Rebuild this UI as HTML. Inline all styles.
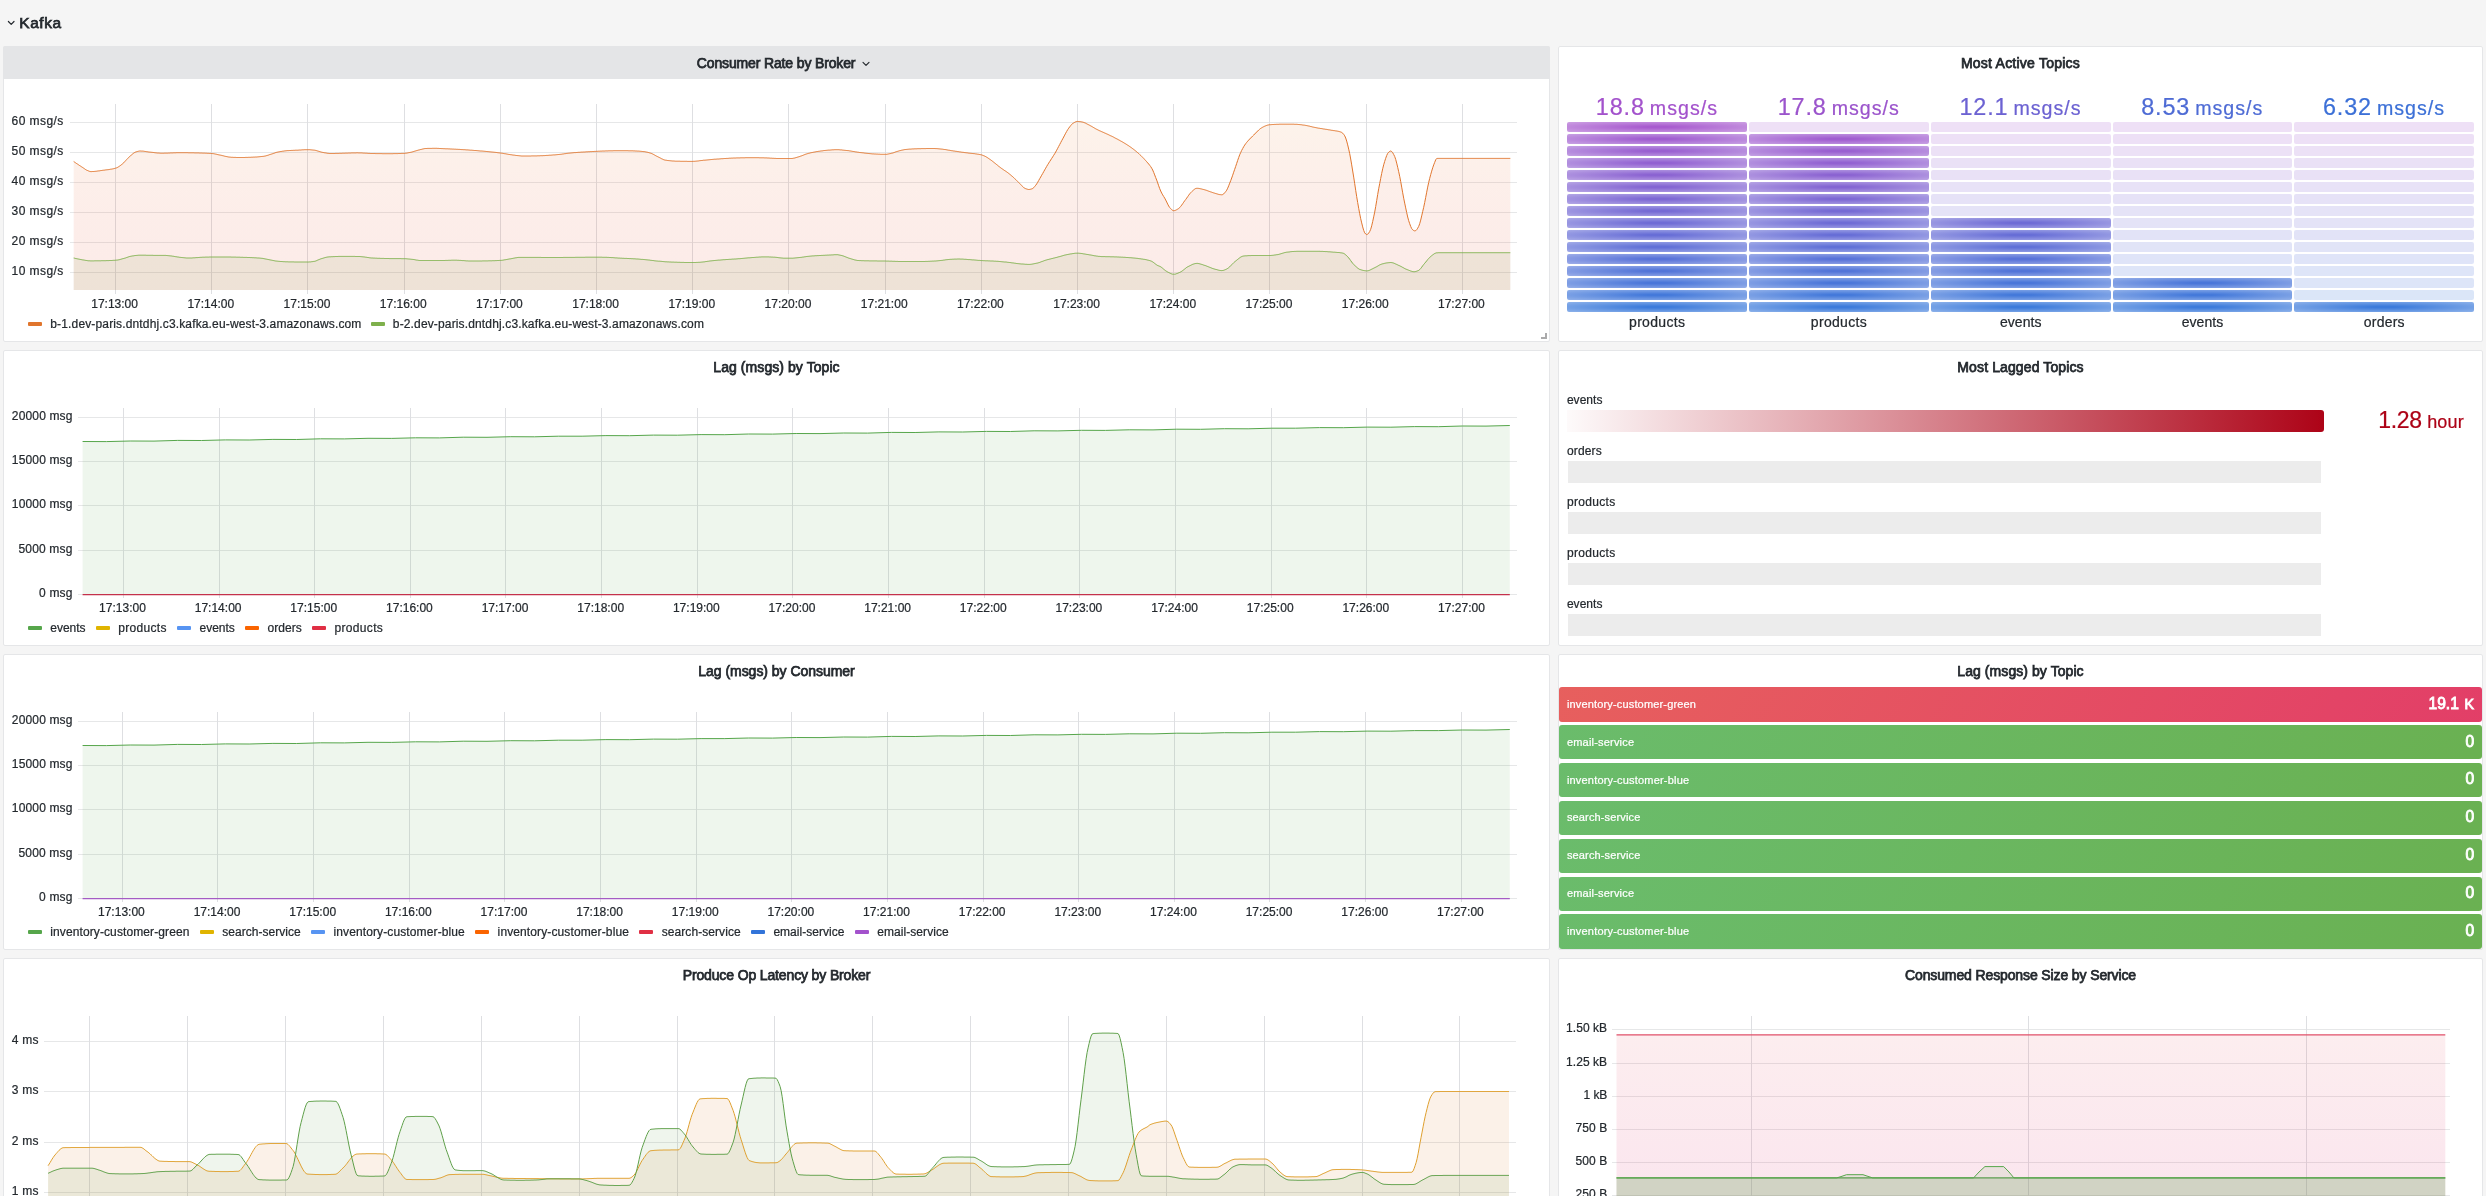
<!DOCTYPE html>
<html lang="en"><head><meta charset="utf-8"><title>Kafka - Grafana</title>
<style>
html,body{margin:0;padding:0}
body{width:2486px;height:1196px;overflow:hidden;position:relative;background:#f5f5f5;font-family:"Liberation Sans", sans-serif;color:#24292e}
#root{position:absolute;left:0;top:0;width:2486px;height:1196px;will-change:transform}
.panel{position:absolute;box-sizing:border-box;background:#fff;border:1px solid #e5e6e8;border-radius:2px}
.hdr-hover{position:absolute;background:#e4e5e7;border-radius:2px 2px 0 0}
.tx{position:absolute;white-space:nowrap;-webkit-text-stroke:0.22px}
.ttl{position:absolute;white-space:nowrap;margin:0;font-weight:400;-webkit-text-stroke:0.75px #24292e}
.cv{position:absolute;overflow:hidden}
.grid line{stroke:#e6e7e8;stroke-width:1;shape-rendering:crispEdges}
.grid.v line{stroke:#dedfe2}
.lg{position:absolute;white-space:nowrap;font-size:12px;line-height:12px;-webkit-text-stroke:0.22px}
.lg i{display:inline-block;width:14px;height:4px;border-radius:1px;vertical-align:middle;margin:0 8.3px 2px 0}
.lg b{font-weight:400;display:inline-block;margin-right:10.4px}
.cell{position:absolute;border-radius:2px}
.bar{position:absolute}
.stat{position:absolute;left:1559px;width:923px;border-radius:3px}
</style></head><body>
<div id="root">

<header aria-label="row">
<svg class="cv" style="left:6px;top:18px" width="10" height="10" viewBox="0 0 10 10"><path d="M2.4 3.5 L5.2 6.3 L8 3.5" fill="none" stroke="#24292e" stroke-width="1.2" stroke-linecap="round" stroke-linejoin="round"/></svg>
<h1 class="ttl" style="left:19.30px;top:15px;font-size:15.4px;line-height:15.4px;"><span style="letter-spacing:0.608px;">Kafka</span></h1>
</header>
<section aria-label="Consumer Rate by Broker">
<div class="panel" style="left:3px;top:46px;width:1547px;height:296px"></div>
<div class="hdr-hover" style="left:3px;top:46px;width:1547px;height:32.5px"></div>
<h2 class="ttl" style="left:696.80px;top:56px;font-size:14px;line-height:14px;"><span style="letter-spacing:-0.141px;">Consumer Rate by Broker</span></h2>
<svg class="cv" style="left:861px;top:59px" width="10" height="10" viewBox="0 0 10 10"><path d="M2 3.4 L5 6.4 L8 3.4" fill="none" stroke="#24292e" stroke-width="1.15" stroke-linecap="round" stroke-linejoin="round"/></svg>
<svg class="cv" style="left:4px;top:79px" width="1545" height="262" viewBox="4 79 1545 262">
<g class="grid"><line x1="70" x2="1517" y1="122.5" y2="122.5"/><line x1="70" x2="1517" y1="152.5" y2="152.5"/><line x1="70" x2="1517" y1="182.5" y2="182.5"/><line x1="70" x2="1517" y1="212.5" y2="212.5"/><line x1="70" x2="1517" y1="242.5" y2="242.5"/><line x1="70" x2="1517" y1="272.5" y2="272.5"/></g>
<g class="grid v"><line y1="104" y2="294" x1="115.5" x2="115.5"/><line y1="104" y2="294" x1="211.5" x2="211.5"/><line y1="104" y2="294" x1="307.5" x2="307.5"/><line y1="104" y2="294" x1="404.5" x2="404.5"/><line y1="104" y2="294" x1="500.5" x2="500.5"/><line y1="104" y2="294" x1="596.5" x2="596.5"/><line y1="104" y2="294" x1="692.5" x2="692.5"/><line y1="104" y2="294" x1="788.5" x2="788.5"/><line y1="104" y2="294" x1="885.5" x2="885.5"/><line y1="104" y2="294" x1="981.5" x2="981.5"/><line y1="104" y2="294" x1="1077.5" x2="1077.5"/><line y1="104" y2="294" x1="1173.5" x2="1173.5"/><line y1="104" y2="294" x1="1269.5" x2="1269.5"/><line y1="104" y2="294" x1="1366.5" x2="1366.5"/><line y1="104" y2="294" x1="1462.5" x2="1462.5"/></g>
<defs><linearGradient id="ofill" gradientUnits="userSpaceOnUse" x1="0" y1="122" x2="0" y2="290"><stop offset="0" stop-color="#eb8737"/><stop offset="0.55" stop-color="#e6502a"/><stop offset="1" stop-color="#e13c23"/></linearGradient></defs>
<path d="M73.7 161.5L74.7 162.2L75.7 162.9L76.7 163.6L77.7 164.2L78.7 164.9L79.7 165.6L80.7 166.2L81.7 166.9L82.7 167.5L83.7 168.2L84.7 168.9L85.7 169.6L86.7 170.2L87.7 170.6L88.7 171L89.7 171.4L90.7 171.6L91.7 171.6L92.7 171.5L93.7 171.5L94.7 171.4L95.7 171.3L96.7 171.2L97.7 171L98.7 170.9L99.7 170.8L100.7 170.6L101.7 170.5L102.7 170.3L103.7 170.2L104.7 170.1L105.7 169.9L106.7 169.8L107.7 169.7L108.7 169.6L109.7 169.4L110.7 169.2L111.7 169.1L112.7 168.9L113.7 168.7L114.7 168.4L115.7 168.1L116.7 167.8L117.7 167.3L118.7 166.7L119.7 166L120.7 165.3L121.7 164.5L122.7 163.7L123.7 162.8L124.7 161.7L125.7 160.6L126.7 159.5L127.7 158.5L128.7 157.4L129.7 156.5L130.7 155.6L131.7 154.8L132.7 153.9L133.7 153.1L134.7 152.5L135.7 152L136.7 151.7L137.7 151.4L138.7 151.2L139.7 151L140.7 151L141.7 151.1L142.7 151.1L143.7 151.2L144.7 151.4L145.7 151.5L146.7 151.7L147.7 151.8L148.7 152L149.7 152.1L150.7 152.2L151.7 152.3L152.7 152.4L153.7 152.5L154.7 152.7L155.7 152.8L156.7 152.9L157.7 153L158.7 153L159.7 153.1L160.7 153.2L161.7 153.2L162.7 153.2L163.7 153.2L164.7 153.1L165.7 153.1L166.7 153.1L167.7 153.1L168.7 153L169.7 153L170.7 152.9L171.7 152.9L172.7 152.9L173.7 152.8L174.7 152.8L175.7 152.8L176.7 152.7L177.7 152.7L178.7 152.7L179.7 152.7L180.7 152.7L181.7 152.7L182.7 152.7L183.7 152.7L184.7 152.7L185.7 152.7L186.7 152.7L187.7 152.7L188.7 152.8L189.7 152.8L190.7 152.8L191.7 152.8L192.7 152.8L193.7 152.8L194.7 152.9L195.7 152.9L196.7 152.9L197.7 152.9L198.7 152.9L199.7 153L200.7 153L201.7 153L202.7 153.1L203.7 153.1L204.7 153.1L205.7 153.2L206.7 153.2L207.7 153.3L208.7 153.3L209.7 153.4L210.7 153.4L211.7 153.5L212.7 153.6L213.7 153.7L214.7 153.9L215.7 154.1L216.7 154.3L217.7 154.6L218.7 154.8L219.7 155L220.7 155.2L221.7 155.4L222.7 155.7L223.7 155.9L224.7 156.2L225.7 156.4L226.7 156.6L227.7 156.8L228.7 157L229.7 157.1L230.7 157.2L231.7 157.3L232.7 157.3L233.7 157.4L234.7 157.4L235.7 157.4L236.7 157.5L237.7 157.5L238.7 157.5L239.7 157.5L240.7 157.5L241.7 157.5L242.7 157.5L243.7 157.5L244.7 157.5L245.7 157.4L246.7 157.4L247.7 157.4L248.7 157.3L249.7 157.3L250.7 157.3L251.7 157.2L252.7 157.2L253.7 157.1L254.7 157.1L255.7 157L256.7 157L257.7 156.9L258.7 156.8L259.7 156.7L260.7 156.6L261.7 156.5L262.7 156.4L263.7 156.3L264.7 156.1L265.7 155.9L266.7 155.6L267.7 155.3L268.7 155L269.7 154.6L270.7 154.3L271.7 154L272.7 153.7L273.7 153.3L274.7 153L275.7 152.6L276.7 152.3L277.7 152.1L278.7 151.9L279.7 151.7L280.7 151.5L281.7 151.4L282.7 151.2L283.7 151.1L284.7 150.9L285.7 150.8L286.7 150.7L287.7 150.6L288.7 150.6L289.7 150.5L290.7 150.5L291.7 150.4L292.7 150.4L293.7 150.3L294.7 150.3L295.7 150.2L296.7 150.2L297.7 150.2L298.7 150.1L299.7 150L300.7 150L301.7 149.9L302.7 149.8L303.7 149.8L304.7 149.7L305.7 149.7L306.7 149.7L307.7 149.7L308.7 149.7L309.7 149.7L310.7 149.8L311.7 149.9L312.7 150L313.7 150.1L314.7 150.2L315.7 150.4L316.7 150.7L317.7 151L318.7 151.3L319.7 151.6L320.7 151.9L321.7 152.2L322.7 152.4L323.7 152.6L324.7 152.8L325.7 152.9L326.7 153.1L327.7 153.3L328.7 153.4L329.7 153.5L330.7 153.5L331.7 153.5L332.7 153.5L333.7 153.5L334.7 153.5L335.7 153.4L336.7 153.4L337.7 153.4L338.7 153.4L339.7 153.3L340.7 153.3L341.7 153.3L342.7 153.2L343.7 153.2L344.7 153.2L345.7 153.1L346.7 153.1L347.7 153.1L348.7 153L349.7 153L350.7 153L351.7 152.9L352.7 152.9L353.7 152.9L354.7 152.9L355.7 152.9L356.7 152.8L357.7 152.8L358.7 152.9L359.7 152.9L360.7 152.9L361.7 152.9L362.7 153L363.7 153.1L364.7 153.1L365.7 153.2L366.7 153.2L367.7 153.3L368.7 153.4L369.7 153.4L370.7 153.5L371.7 153.5L372.7 153.5L373.7 153.5L374.7 153.5L375.7 153.6L376.7 153.6L377.7 153.6L378.7 153.6L379.7 153.6L380.7 153.6L381.7 153.6L382.7 153.7L383.7 153.7L384.7 153.7L385.7 153.7L386.7 153.7L387.7 153.7L388.7 153.7L389.7 153.7L390.7 153.7L391.7 153.7L392.7 153.7L393.7 153.6L394.7 153.6L395.7 153.6L396.7 153.6L397.7 153.6L398.7 153.5L399.7 153.5L400.7 153.5L401.7 153.4L402.7 153.4L403.7 153.4L404.7 153.3L405.7 153.2L406.7 153.1L407.7 152.9L408.7 152.7L409.7 152.5L410.7 152.3L411.7 152.1L412.7 151.8L413.7 151.5L414.7 151.2L415.7 150.9L416.7 150.6L417.7 150.3L418.7 150L419.7 149.8L420.7 149.5L421.7 149.3L422.7 149L423.7 148.8L424.7 148.6L425.7 148.5L426.7 148.5L427.7 148.4L428.7 148.4L429.7 148.4L430.7 148.4L431.7 148.4L432.7 148.3L433.7 148.3L434.7 148.3L435.7 148.3L436.7 148.3L437.7 148.4L438.7 148.4L439.7 148.5L440.7 148.5L441.7 148.6L442.7 148.6L443.7 148.7L444.7 148.7L445.7 148.8L446.7 148.8L447.7 148.8L448.7 148.9L449.7 148.9L450.7 149L451.7 149L452.7 149.1L453.7 149.1L454.7 149.2L455.7 149.2L456.7 149.3L457.7 149.3L458.7 149.4L459.7 149.4L460.7 149.5L461.7 149.6L462.7 149.6L463.7 149.7L464.7 149.7L465.7 149.8L466.7 149.9L467.7 149.9L468.7 150L469.7 150.1L470.7 150.2L471.7 150.2L472.7 150.3L473.7 150.4L474.7 150.5L475.7 150.5L476.7 150.6L477.7 150.7L478.7 150.8L479.7 150.9L480.7 151L481.7 151L482.7 151.1L483.7 151.2L484.7 151.3L485.7 151.4L486.7 151.5L487.7 151.6L488.7 151.7L489.7 151.8L490.7 151.9L491.7 152L492.7 152.1L493.7 152.2L494.7 152.3L495.7 152.4L496.7 152.5L497.7 152.7L498.7 152.8L499.7 152.9L500.7 153L501.7 153.2L502.7 153.3L503.7 153.5L504.7 153.7L505.7 153.8L506.7 154L507.7 154.2L508.7 154.4L509.7 154.5L510.7 154.7L511.7 154.8L512.7 155L513.7 155.1L514.7 155.2L515.7 155.4L516.7 155.5L517.7 155.6L518.7 155.7L519.7 155.8L520.7 155.9L521.7 156L522.7 156L523.7 156L524.7 156L525.7 156L526.7 156L527.7 156L528.7 156L529.7 156L530.7 156L531.7 155.9L532.7 155.9L533.7 155.9L534.7 155.9L535.7 155.9L536.7 155.9L537.7 155.8L538.7 155.8L539.7 155.8L540.7 155.7L541.7 155.7L542.7 155.7L543.7 155.6L544.7 155.6L545.7 155.5L546.7 155.4L547.7 155.4L548.7 155.3L549.7 155.2L550.7 155.2L551.7 155.1L552.7 155L553.7 154.9L554.7 154.9L555.7 154.8L556.7 154.7L557.7 154.6L558.7 154.5L559.7 154.4L560.7 154.3L561.7 154.2L562.7 154L563.7 153.9L564.7 153.7L565.7 153.6L566.7 153.4L567.7 153.3L568.7 153.2L569.7 153.1L570.7 153L571.7 152.9L572.7 152.8L573.7 152.7L574.7 152.6L575.7 152.6L576.7 152.5L577.7 152.4L578.7 152.3L579.7 152.3L580.7 152.2L581.7 152.1L582.7 152.1L583.7 152L584.7 152L585.7 151.9L586.7 151.8L587.7 151.8L588.7 151.7L589.7 151.7L590.7 151.6L591.7 151.6L592.7 151.5L593.7 151.5L594.7 151.4L595.7 151.4L596.7 151.3L597.7 151.3L598.7 151.2L599.7 151.2L600.7 151.1L601.7 151.1L602.7 151L603.7 151L604.7 151L605.7 150.9L606.7 150.9L607.7 150.9L608.7 150.8L609.7 150.8L610.7 150.8L611.7 150.8L612.7 150.8L613.7 150.7L614.7 150.7L615.7 150.7L616.7 150.7L617.7 150.7L618.7 150.7L619.7 150.7L620.7 150.7L621.7 150.7L622.7 150.7L623.7 150.7L624.7 150.7L625.7 150.7L626.7 150.7L627.7 150.7L628.7 150.8L629.7 150.8L630.7 150.8L631.7 150.8L632.7 150.8L633.7 150.9L634.7 150.9L635.7 151L636.7 151L637.7 151.1L638.7 151.1L639.7 151.2L640.7 151.3L641.7 151.4L642.7 151.5L643.7 151.6L644.7 151.7L645.7 151.9L646.7 152.1L647.7 152.3L648.7 152.6L649.7 152.9L650.7 153.2L651.7 153.5L652.7 154L653.7 154.5L654.7 155.1L655.7 155.7L656.7 156.2L657.7 156.7L658.7 157.2L659.7 157.7L660.7 158.2L661.7 158.8L662.7 159.2L663.7 159.7L664.7 160L665.7 160.2L666.7 160.3L667.7 160.5L668.7 160.6L669.7 160.7L670.7 160.8L671.7 160.9L672.7 161L673.7 161L674.7 161.1L675.7 161.2L676.7 161.2L677.7 161.2L678.7 161.2L679.7 161.2L680.7 161.3L681.7 161.3L682.7 161.3L683.7 161.3L684.7 161.3L685.7 161.3L686.7 161.3L687.7 161.4L688.7 161.4L689.7 161.4L690.7 161.4L691.7 161.4L692.7 161.4L693.7 161.3L694.7 161.3L695.7 161.2L696.7 161.1L697.7 161L698.7 160.9L699.7 160.7L700.7 160.6L701.7 160.5L702.7 160.4L703.7 160.2L704.7 160.2L705.7 160.1L706.7 160L707.7 159.9L708.7 159.8L709.7 159.7L710.7 159.6L711.7 159.5L712.7 159.4L713.7 159.3L714.7 159.2L715.7 159.2L716.7 159.1L717.7 159L718.7 159L719.7 158.9L720.7 158.8L721.7 158.7L722.7 158.7L723.7 158.6L724.7 158.5L725.7 158.5L726.7 158.4L727.7 158.4L728.7 158.3L729.7 158.2L730.7 158.2L731.7 158.1L732.7 158.1L733.7 158L734.7 158L735.7 158L736.7 157.9L737.7 157.9L738.7 157.9L739.7 157.9L740.7 157.8L741.7 157.8L742.7 157.8L743.7 157.8L744.7 157.8L745.7 157.7L746.7 157.7L747.7 157.7L748.7 157.7L749.7 157.7L750.7 157.7L751.7 157.7L752.7 157.7L753.7 157.7L754.7 157.7L755.7 157.7L756.7 157.7L757.7 157.7L758.7 157.7L759.7 157.8L760.7 157.8L761.7 157.8L762.7 157.8L763.7 157.8L764.7 157.9L765.7 157.9L766.7 157.9L767.7 158L768.7 158L769.7 158.1L770.7 158.2L771.7 158.2L772.7 158.3L773.7 158.3L774.7 158.4L775.7 158.4L776.7 158.5L777.7 158.5L778.7 158.5L779.7 158.5L780.7 158.5L781.7 158.5L782.7 158.5L783.7 158.5L784.7 158.5L785.7 158.5L786.7 158.5L787.7 158.5L788.7 158.5L789.7 158.5L790.7 158.5L791.7 158.5L792.7 158.4L793.7 158.2L794.7 158L795.7 157.7L796.7 157.4L797.7 157.1L798.7 156.8L799.7 156.5L800.7 156.1L801.7 155.8L802.7 155.4L803.7 155L804.7 154.6L805.7 154.2L806.7 153.9L807.7 153.6L808.7 153.3L809.7 153.1L810.7 152.8L811.7 152.6L812.7 152.4L813.7 152.2L814.7 152L815.7 151.8L816.7 151.6L817.7 151.5L818.7 151.3L819.7 151.2L820.7 151L821.7 150.9L822.7 150.8L823.7 150.6L824.7 150.5L825.7 150.4L826.7 150.3L827.7 150.2L828.7 150.1L829.7 150.1L830.7 150L831.7 149.9L832.7 149.8L833.7 149.8L834.7 149.7L835.7 149.7L836.7 149.7L837.7 149.7L838.7 149.7L839.7 149.8L840.7 149.9L841.7 149.9L842.7 150.1L843.7 150.2L844.7 150.3L845.7 150.4L846.7 150.5L847.7 150.6L848.7 150.7L849.7 150.9L850.7 151L851.7 151.2L852.7 151.4L853.7 151.5L854.7 151.7L855.7 151.9L856.7 152L857.7 152.2L858.7 152.3L859.7 152.5L860.7 152.6L861.7 152.7L862.7 152.8L863.7 152.9L864.7 153.1L865.7 153.2L866.7 153.3L867.7 153.4L868.7 153.5L869.7 153.6L870.7 153.7L871.7 153.8L872.7 153.9L873.7 153.9L874.7 154L875.7 154L876.7 154.1L877.7 154.1L878.7 154.2L879.7 154.2L880.7 154.3L881.7 154.3L882.7 154.3L883.7 154.3L884.7 154.3L885.7 154.3L886.7 154.3L887.7 154.1L888.7 153.9L889.7 153.7L890.7 153.5L891.7 153.2L892.7 153L893.7 152.7L894.7 152.3L895.7 151.9L896.7 151.6L897.7 151.3L898.7 151L899.7 150.7L900.7 150.5L901.7 150.2L902.7 150L903.7 149.8L904.7 149.6L905.7 149.5L906.7 149.4L907.7 149.3L908.7 149.2L909.7 149.1L910.7 149.1L911.7 149L912.7 148.9L913.7 148.9L914.7 148.8L915.7 148.8L916.7 148.8L917.7 148.7L918.7 148.7L919.7 148.7L920.7 148.7L921.7 148.6L922.7 148.6L923.7 148.6L924.7 148.6L925.7 148.6L926.7 148.5L927.7 148.5L928.7 148.5L929.7 148.5L930.7 148.5L931.7 148.5L932.7 148.5L933.7 148.5L934.7 148.5L935.7 148.6L936.7 148.6L937.7 148.7L938.7 148.8L939.7 148.9L940.7 149L941.7 149.1L942.7 149.2L943.7 149.4L944.7 149.5L945.7 149.6L946.7 149.8L947.7 150L948.7 150.2L949.7 150.3L950.7 150.5L951.7 150.7L952.7 150.8L953.7 151L954.7 151.1L955.7 151.3L956.7 151.4L957.7 151.6L958.7 151.7L959.7 151.9L960.7 152L961.7 152.2L962.7 152.3L963.7 152.4L964.7 152.6L965.7 152.7L966.7 152.8L967.7 152.9L968.7 153.1L969.7 153.2L970.7 153.3L971.7 153.4L972.7 153.5L973.7 153.6L974.7 153.7L975.7 153.9L976.7 154L977.7 154.2L978.7 154.3L979.7 154.5L980.7 154.7L981.7 154.9L982.7 155.3L983.7 155.7L984.7 156.1L985.7 156.6L986.7 157.2L987.7 157.8L988.7 158.5L989.7 159.2L990.7 159.9L991.7 160.6L992.7 161.4L993.7 162.2L994.7 163L995.7 163.8L996.7 164.6L997.7 165.4L998.7 166.3L999.7 167L1000.7 167.8L1001.7 168.5L1002.7 169.2L1003.7 169.9L1004.7 170.6L1005.7 171.2L1006.7 171.9L1007.7 172.6L1008.7 173.4L1009.7 174.2L1010.7 175L1011.7 175.9L1012.7 176.7L1013.7 177.6L1014.7 178.6L1015.7 179.5L1016.7 180.5L1017.7 181.5L1018.7 182.5L1019.7 183.5L1020.7 184.5L1021.7 185.5L1022.7 186.6L1023.7 187.6L1024.7 188.2L1025.7 188.7L1026.7 189L1027.7 189.3L1028.7 189.5L1029.7 189.4L1030.7 189.2L1031.7 188.9L1032.7 188.5L1033.7 187.7L1034.7 186.5L1035.7 185.3L1036.7 183.9L1037.7 182.3L1038.7 180.5L1039.7 178.7L1040.7 177L1041.7 175.2L1042.7 173.5L1043.7 171.7L1044.7 169.9L1045.7 168.2L1046.7 166.4L1047.7 164.7L1048.7 163.1L1049.7 161.5L1050.7 160L1051.7 158.4L1052.7 156.9L1053.7 155.3L1054.7 153.7L1055.7 152L1056.7 150.2L1057.7 148.3L1058.7 146.4L1059.7 144.5L1060.7 142.6L1061.7 140.7L1062.7 138.9L1063.7 137L1064.7 135.1L1065.7 133.2L1066.7 131.4L1067.7 129.7L1068.7 128.2L1069.7 126.9L1070.7 125.6L1071.7 124.4L1072.7 123.5L1073.7 122.9L1074.7 122.3L1075.7 121.8L1076.7 121.5L1077.7 121.4L1078.7 121.5L1079.7 121.6L1080.7 121.7L1081.7 121.9L1082.7 122.1L1083.7 122.4L1084.7 122.8L1085.7 123.2L1086.7 123.8L1087.7 124.3L1088.7 124.8L1089.7 125.3L1090.7 125.9L1091.7 126.4L1092.7 127L1093.7 127.6L1094.7 128.2L1095.7 128.8L1096.7 129.3L1097.7 129.8L1098.7 130.3L1099.7 130.8L1100.7 131.2L1101.7 131.7L1102.7 132.1L1103.7 132.5L1104.7 133L1105.7 133.4L1106.7 133.9L1107.7 134.3L1108.7 134.8L1109.7 135.3L1110.7 135.8L1111.7 136.2L1112.7 136.7L1113.7 137.2L1114.7 137.8L1115.7 138.3L1116.7 138.8L1117.7 139.3L1118.7 139.9L1119.7 140.4L1120.7 141L1121.7 141.5L1122.7 142.1L1123.7 142.7L1124.7 143.3L1125.7 143.9L1126.7 144.5L1127.7 145.2L1128.7 145.8L1129.7 146.5L1130.7 147.2L1131.7 147.9L1132.7 148.7L1133.7 149.4L1134.7 150.2L1135.7 151L1136.7 151.8L1137.7 152.7L1138.7 153.5L1139.7 154.5L1140.7 155.4L1141.7 156.4L1142.7 157.4L1143.7 158.4L1144.7 159.5L1145.7 160.6L1146.7 161.7L1147.7 162.9L1148.7 164L1149.7 165.3L1150.7 166.6L1151.7 168.2L1152.7 170L1153.7 172.4L1154.7 174.9L1155.7 177.6L1156.7 180.1L1157.7 182.9L1158.7 185.8L1159.7 188.6L1160.7 191L1161.7 193.1L1162.7 194.9L1163.7 196.5L1164.7 198.1L1165.7 200L1166.7 202L1167.7 204.1L1168.7 206L1169.7 207.5L1170.7 208.6L1171.7 209.6L1172.7 210.4L1173.7 210.7L1174.7 210.6L1175.7 210.2L1176.7 209.7L1177.7 209.1L1178.7 208.5L1179.7 207.6L1180.7 206.4L1181.7 205.1L1182.7 203.7L1183.7 202.2L1184.7 200.8L1185.7 199.5L1186.7 198.1L1187.7 196.7L1188.7 195.2L1189.7 193.9L1190.7 192.7L1191.7 191.7L1192.7 190.8L1193.7 189.9L1194.7 189.1L1195.7 188.5L1196.7 188.3L1197.7 188.3L1198.7 188.4L1199.7 188.6L1200.7 188.8L1201.7 189L1202.7 189.3L1203.7 189.5L1204.7 189.8L1205.7 190.1L1206.7 190.4L1207.7 190.8L1208.7 191.2L1209.7 191.5L1210.7 191.9L1211.7 192.2L1212.7 192.6L1213.7 192.9L1214.7 193.2L1215.7 193.5L1216.7 193.8L1217.7 194.1L1218.7 194.4L1219.7 194.6L1220.7 194.7L1221.7 194.8L1222.7 194.6L1223.7 193.9L1224.7 192.8L1225.7 191.6L1226.7 190.2L1227.7 188.2L1228.7 185.8L1229.7 183.2L1230.7 180.7L1231.7 178L1232.7 175.2L1233.7 172.2L1234.7 169.3L1235.7 166.4L1236.7 163.4L1237.7 160.4L1238.7 157.5L1239.7 154.8L1240.7 152.5L1241.7 150.4L1242.7 148.5L1243.7 146.7L1244.7 145.1L1245.7 143.7L1246.7 142.4L1247.7 141.2L1248.7 140.1L1249.7 139L1250.7 138L1251.7 137L1252.7 136L1253.7 135.1L1254.7 134L1255.7 133L1256.7 132L1257.7 131L1258.7 130L1259.7 129.2L1260.7 128.4L1261.7 127.8L1262.7 127.2L1263.7 126.7L1264.7 126.2L1265.7 125.8L1266.7 125.4L1267.7 125.1L1268.7 124.9L1269.7 124.7L1270.7 124.7L1271.7 124.6L1272.7 124.5L1273.7 124.5L1274.7 124.4L1275.7 124.4L1276.7 124.3L1277.7 124.3L1278.7 124.3L1279.7 124.2L1280.7 124.2L1281.7 124.2L1282.7 124.2L1283.7 124.2L1284.7 124.2L1285.7 124.2L1286.7 124.2L1287.7 124.2L1288.7 124.2L1289.7 124.2L1290.7 124.2L1291.7 124.2L1292.7 124.2L1293.7 124.2L1294.7 124.3L1295.7 124.3L1296.7 124.3L1297.7 124.4L1298.7 124.5L1299.7 124.6L1300.7 124.7L1301.7 124.8L1302.7 125L1303.7 125.1L1304.7 125.2L1305.7 125.4L1306.7 125.6L1307.7 125.8L1308.7 126L1309.7 126.2L1310.7 126.5L1311.7 126.7L1312.7 127L1313.7 127.2L1314.7 127.4L1315.7 127.6L1316.7 127.8L1317.7 128L1318.7 128.2L1319.7 128.3L1320.7 128.5L1321.7 128.6L1322.7 128.8L1323.7 129L1324.7 129.1L1325.7 129.3L1326.7 129.4L1327.7 129.6L1328.7 129.8L1329.7 129.9L1330.7 130.1L1331.7 130.3L1332.7 130.4L1333.7 130.6L1334.7 130.7L1335.7 130.9L1336.7 131L1337.7 131.2L1338.7 131.4L1339.7 131.7L1340.7 132L1341.7 132.4L1342.7 133.2L1343.7 134.3L1344.7 135.8L1345.7 138L1346.7 141.1L1347.7 144.9L1348.7 149.1L1349.7 153.6L1350.7 159L1351.7 164.9L1352.7 171L1353.7 177.1L1354.7 183.6L1355.7 190.3L1356.7 196.7L1357.7 202.6L1358.7 208.3L1359.7 213.7L1360.7 218.7L1361.7 222.9L1362.7 226.9L1363.7 230.4L1364.7 232.8L1365.7 234L1366.7 234.6L1367.7 234.2L1368.7 233.1L1369.7 231.5L1370.7 229.3L1371.7 225.8L1372.7 221.5L1373.7 216.9L1374.7 212.1L1375.7 206.6L1376.7 200.6L1377.7 194.5L1378.7 188.8L1379.7 183.6L1380.7 178.4L1381.7 173.4L1382.7 168.8L1383.7 164.8L1384.7 161.4L1385.7 158.3L1386.7 155.5L1387.7 153.4L1388.7 152.2L1389.7 151.4L1390.7 151L1391.7 151.5L1392.7 152.7L1393.7 154.5L1394.7 156.5L1395.7 159.4L1396.7 163.1L1397.7 167.3L1398.7 171.7L1399.7 176.3L1400.7 181.5L1401.7 187.1L1402.7 192.8L1403.7 198.2L1404.7 203.1L1405.7 207.9L1406.7 212.6L1407.7 217L1408.7 220.7L1409.7 223.7L1410.7 226.4L1411.7 228.6L1412.7 229.8L1413.7 230.5L1414.7 230.9L1415.7 230.7L1416.7 229.7L1417.7 228.2L1418.7 226.4L1419.7 223.7L1420.7 220.1L1421.7 215.9L1422.7 211.5L1423.7 207.3L1424.7 202.5L1425.7 197.4L1426.7 192.2L1427.7 187.1L1428.7 182.4L1429.7 178.4L1430.7 174.6L1431.7 171.1L1432.7 167.8L1433.7 164.9L1434.7 162.4L1435.7 159.8L1436.7 158.5L1437.7 158.4L1438.7 158.4L1439.7 158.4L1440.7 158.4L1441.7 158.4L1442.7 158.4L1443.7 158.4L1444.7 158.4L1445.7 158.4L1446.7 158.4L1447.7 158.4L1448.7 158.4L1449.7 158.4L1450.7 158.4L1451.7 158.4L1452.7 158.4L1453.7 158.4L1454.7 158.4L1455.7 158.4L1456.7 158.4L1457.7 158.4L1458.7 158.4L1459.7 158.4L1460.7 158.4L1461.7 158.4L1462.7 158.4L1463.7 158.4L1464.7 158.4L1465.7 158.4L1466.7 158.4L1467.7 158.4L1468.7 158.4L1469.7 158.4L1470.7 158.4L1471.7 158.4L1472.7 158.4L1473.7 158.4L1474.7 158.4L1475.7 158.4L1476.7 158.4L1477.7 158.4L1478.7 158.4L1479.7 158.4L1480.7 158.4L1481.7 158.4L1482.7 158.4L1483.7 158.4L1484.7 158.4L1485.7 158.4L1486.7 158.4L1487.7 158.4L1488.7 158.4L1489.7 158.4L1490.7 158.4L1491.7 158.4L1492.7 158.4L1493.7 158.4L1494.7 158.4L1495.7 158.4L1496.7 158.4L1497.7 158.4L1498.7 158.4L1499.7 158.4L1500.7 158.4L1501.7 158.4L1502.7 158.4L1503.7 158.4L1504.7 158.4L1505.7 158.4L1506.7 158.4L1507.7 158.4L1508.7 158.4L1509.7 158.4L1510.3 158.4L1510.3 290L73.7 290Z" fill="url(#ofill)" fill-opacity="0.1"/>
<path d="M73.7 258L74.7 258.2L75.7 258.5L76.7 258.7L77.7 258.9L78.7 259.1L79.7 259.3L80.7 259.5L81.7 259.7L82.7 259.9L83.7 260L84.7 260.2L85.7 260.4L86.7 260.5L87.7 260.7L88.7 260.8L89.7 260.8L90.7 260.9L91.7 260.9L92.7 260.9L93.7 260.9L94.7 260.8L95.7 260.8L96.7 260.8L97.7 260.8L98.7 260.8L99.7 260.8L100.7 260.8L101.7 260.7L102.7 260.7L103.7 260.7L104.7 260.7L105.7 260.7L106.7 260.6L107.7 260.6L108.7 260.6L109.7 260.5L110.7 260.5L111.7 260.5L112.7 260.4L113.7 260.3L114.7 260.3L115.7 260.2L116.7 260.1L117.7 260L118.7 259.8L119.7 259.6L120.7 259.3L121.7 259L122.7 258.7L123.7 258.5L124.7 258.2L125.7 257.9L126.7 257.5L127.7 257.2L128.7 256.8L129.7 256.5L130.7 256.3L131.7 256.1L132.7 255.9L133.7 255.8L134.7 255.6L135.7 255.5L136.7 255.4L137.7 255.3L138.7 255.2L139.7 255.2L140.7 255.2L141.7 255.2L142.7 255.2L143.7 255.2L144.7 255.2L145.7 255.2L146.7 255.3L147.7 255.3L148.7 255.3L149.7 255.3L150.7 255.3L151.7 255.3L152.7 255.3L153.7 255.4L154.7 255.4L155.7 255.4L156.7 255.4L157.7 255.4L158.7 255.4L159.7 255.4L160.7 255.4L161.7 255.4L162.7 255.4L163.7 255.4L164.7 255.4L165.7 255.4L166.7 255.5L167.7 255.6L168.7 255.7L169.7 255.8L170.7 255.9L171.7 256L172.7 256.2L173.7 256.3L174.7 256.5L175.7 256.7L176.7 256.8L177.7 257L178.7 257.1L179.7 257.3L180.7 257.4L181.7 257.5L182.7 257.6L183.7 257.7L184.7 257.8L185.7 257.9L186.7 258L187.7 258L188.7 258L189.7 258L190.7 258L191.7 258L192.7 257.9L193.7 257.8L194.7 257.8L195.7 257.7L196.7 257.6L197.7 257.6L198.7 257.5L199.7 257.4L200.7 257.3L201.7 257.3L202.7 257.2L203.7 257.2L204.7 257.2L205.7 257.1L206.7 257.1L207.7 257.1L208.7 257.1L209.7 257L210.7 257L211.7 257L212.7 257L213.7 257L214.7 257L215.7 257L216.7 257L217.7 257L218.7 257L219.7 257L220.7 257L221.7 257L222.7 257L223.7 257L224.7 257L225.7 257L226.7 257L227.7 257L228.7 257L229.7 257L230.7 257L231.7 257.1L232.7 257.1L233.7 257.1L234.7 257.1L235.7 257.1L236.7 257.2L237.7 257.2L238.7 257.2L239.7 257.2L240.7 257.3L241.7 257.3L242.7 257.3L243.7 257.4L244.7 257.4L245.7 257.4L246.7 257.4L247.7 257.5L248.7 257.5L249.7 257.5L250.7 257.6L251.7 257.6L252.7 257.7L253.7 257.7L254.7 257.8L255.7 257.8L256.7 257.9L257.7 258L258.7 258L259.7 258.1L260.7 258.2L261.7 258.3L262.7 258.4L263.7 258.6L264.7 258.8L265.7 259L266.7 259.2L267.7 259.4L268.7 259.6L269.7 259.8L270.7 260L271.7 260.2L272.7 260.4L273.7 260.6L274.7 260.8L275.7 261L276.7 261.1L277.7 261.2L278.7 261.3L279.7 261.4L280.7 261.5L281.7 261.5L282.7 261.6L283.7 261.7L284.7 261.7L285.7 261.8L286.7 261.8L287.7 261.8L288.7 261.9L289.7 261.9L290.7 261.9L291.7 261.9L292.7 261.9L293.7 261.9L294.7 262L295.7 262L296.7 262L297.7 262L298.7 262L299.7 262L300.7 262L301.7 262L302.7 262L303.7 262L304.7 262L305.7 262L306.7 262L307.7 262L308.7 262L309.7 261.9L310.7 261.9L311.7 261.7L312.7 261.6L313.7 261.4L314.7 261.3L315.7 261L316.7 260.6L317.7 260.1L318.7 259.7L319.7 259.3L320.7 258.9L321.7 258.6L322.7 258.3L323.7 258L324.7 257.7L325.7 257.4L326.7 257.2L327.7 257L328.7 256.9L329.7 256.8L330.7 256.8L331.7 256.7L332.7 256.7L333.7 256.6L334.7 256.6L335.7 256.5L336.7 256.5L337.7 256.5L338.7 256.4L339.7 256.4L340.7 256.4L341.7 256.4L342.7 256.4L343.7 256.4L344.7 256.4L345.7 256.4L346.7 256.4L347.7 256.4L348.7 256.4L349.7 256.4L350.7 256.4L351.7 256.4L352.7 256.4L353.7 256.4L354.7 256.4L355.7 256.5L356.7 256.5L357.7 256.5L358.7 256.5L359.7 256.5L360.7 256.6L361.7 256.7L362.7 256.8L363.7 256.9L364.7 257L365.7 257.2L366.7 257.3L367.7 257.5L368.7 257.6L369.7 257.8L370.7 257.9L371.7 258L372.7 258L373.7 258.1L374.7 258.1L375.7 258.2L376.7 258.2L377.7 258.3L378.7 258.3L379.7 258.3L380.7 258.4L381.7 258.4L382.7 258.4L383.7 258.4L384.7 258.5L385.7 258.5L386.7 258.5L387.7 258.5L388.7 258.5L389.7 258.6L390.7 258.6L391.7 258.6L392.7 258.6L393.7 258.6L394.7 258.6L395.7 258.6L396.7 258.6L397.7 258.6L398.7 258.6L399.7 258.6L400.7 258.6L401.7 258.7L402.7 258.7L403.7 258.7L404.7 258.7L405.7 258.7L406.7 258.8L407.7 258.9L408.7 259L409.7 259.1L410.7 259.2L411.7 259.3L412.7 259.4L413.7 259.5L414.7 259.7L415.7 259.9L416.7 260.1L417.7 260.2L418.7 260.4L419.7 260.5L420.7 260.5L421.7 260.5L422.7 260.5L423.7 260.5L424.7 260.5L425.7 260.5L426.7 260.5L427.7 260.5L428.7 260.5L429.7 260.5L430.7 260.5L431.7 260.5L432.7 260.5L433.7 260.5L434.7 260.5L435.7 260.5L436.7 260.5L437.7 260.5L438.7 260.5L439.7 260.5L440.7 260.5L441.7 260.5L442.7 260.5L443.7 260.5L444.7 260.5L445.7 260.4L446.7 260.4L447.7 260.4L448.7 260.3L449.7 260.3L450.7 260.3L451.7 260.2L452.7 260.2L453.7 260.2L454.7 260.2L455.7 260.2L456.7 260.2L457.7 260.3L458.7 260.3L459.7 260.4L460.7 260.4L461.7 260.5L462.7 260.6L463.7 260.6L464.7 260.7L465.7 260.8L466.7 260.9L467.7 260.9L468.7 261L469.7 261L470.7 261L471.7 261L472.7 261L473.7 261L474.7 261L475.7 261L476.7 261L477.7 261L478.7 261L479.7 261L480.7 261L481.7 261L482.7 260.9L483.7 260.9L484.7 260.9L485.7 260.9L486.7 260.9L487.7 260.9L488.7 260.8L489.7 260.8L490.7 260.8L491.7 260.8L492.7 260.7L493.7 260.7L494.7 260.7L495.7 260.6L496.7 260.6L497.7 260.5L498.7 260.5L499.7 260.4L500.7 260.4L501.7 260.3L502.7 260.2L503.7 260L504.7 259.8L505.7 259.7L506.7 259.5L507.7 259.3L508.7 259.1L509.7 258.9L510.7 258.8L511.7 258.6L512.7 258.4L513.7 258.2L514.7 258L515.7 257.8L516.7 257.7L517.7 257.5L518.7 257.4L519.7 257.4L520.7 257.4L521.7 257.4L522.7 257.4L523.7 257.4L524.7 257.4L525.7 257.4L526.7 257.4L527.7 257.4L528.7 257.4L529.7 257.4L530.7 257.4L531.7 257.4L532.7 257.4L533.7 257.4L534.7 257.4L535.7 257.4L536.7 257.4L537.7 257.4L538.7 257.4L539.7 257.4L540.7 257.4L541.7 257.5L542.7 257.5L543.7 257.5L544.7 257.5L545.7 257.5L546.7 257.5L547.7 257.5L548.7 257.5L549.7 257.5L550.7 257.5L551.7 257.5L552.7 257.5L553.7 257.5L554.7 257.5L555.7 257.5L556.7 257.5L557.7 257.5L558.7 257.5L559.7 257.5L560.7 257.5L561.7 257.5L562.7 257.5L563.7 257.4L564.7 257.4L565.7 257.4L566.7 257.4L567.7 257.4L568.7 257.4L569.7 257.4L570.7 257.4L571.7 257.4L572.7 257.4L573.7 257.4L574.7 257.4L575.7 257.3L576.7 257.3L577.7 257.3L578.7 257.3L579.7 257.3L580.7 257.3L581.7 257.3L582.7 257.3L583.7 257.3L584.7 257.3L585.7 257.2L586.7 257.2L587.7 257.2L588.7 257.2L589.7 257.2L590.7 257.2L591.7 257.2L592.7 257.2L593.7 257.2L594.7 257.2L595.7 257.2L596.7 257.2L597.7 257.2L598.7 257.2L599.7 257.2L600.7 257.2L601.7 257.2L602.7 257.3L603.7 257.3L604.7 257.3L605.7 257.3L606.7 257.3L607.7 257.4L608.7 257.4L609.7 257.5L610.7 257.5L611.7 257.6L612.7 257.6L613.7 257.7L614.7 257.8L615.7 257.9L616.7 257.9L617.7 258L618.7 258.1L619.7 258.1L620.7 258.2L621.7 258.2L622.7 258.3L623.7 258.3L624.7 258.4L625.7 258.4L626.7 258.4L627.7 258.5L628.7 258.5L629.7 258.6L630.7 258.6L631.7 258.7L632.7 258.7L633.7 258.8L634.7 258.8L635.7 258.9L636.7 259L637.7 259L638.7 259.1L639.7 259.2L640.7 259.3L641.7 259.4L642.7 259.4L643.7 259.5L644.7 259.6L645.7 259.7L646.7 259.8L647.7 259.9L648.7 260L649.7 260.1L650.7 260.3L651.7 260.4L652.7 260.5L653.7 260.6L654.7 260.8L655.7 260.9L656.7 261L657.7 261.1L658.7 261.2L659.7 261.2L660.7 261.3L661.7 261.4L662.7 261.5L663.7 261.6L664.7 261.7L665.7 261.8L666.7 261.8L667.7 261.9L668.7 261.9L669.7 262L670.7 262L671.7 262.1L672.7 262.1L673.7 262.1L674.7 262.2L675.7 262.2L676.7 262.2L677.7 262.3L678.7 262.3L679.7 262.3L680.7 262.4L681.7 262.4L682.7 262.4L683.7 262.4L684.7 262.5L685.7 262.5L686.7 262.5L687.7 262.5L688.7 262.5L689.7 262.5L690.7 262.5L691.7 262.5L692.7 262.5L693.7 262.5L694.7 262.5L695.7 262.5L696.7 262.4L697.7 262.4L698.7 262.3L699.7 262.3L700.7 262.2L701.7 262.1L702.7 262L703.7 261.9L704.7 261.8L705.7 261.6L706.7 261.5L707.7 261.3L708.7 261.2L709.7 261L710.7 260.9L711.7 260.8L712.7 260.7L713.7 260.6L714.7 260.5L715.7 260.4L716.7 260.3L717.7 260.2L718.7 260.1L719.7 260.1L720.7 260L721.7 259.9L722.7 259.8L723.7 259.7L724.7 259.7L725.7 259.6L726.7 259.5L727.7 259.5L728.7 259.4L729.7 259.3L730.7 259.3L731.7 259.2L732.7 259.1L733.7 259.1L734.7 259L735.7 259L736.7 258.9L737.7 258.8L738.7 258.7L739.7 258.7L740.7 258.6L741.7 258.5L742.7 258.4L743.7 258.3L744.7 258.2L745.7 258.1L746.7 258L747.7 257.9L748.7 257.8L749.7 257.8L750.7 257.7L751.7 257.6L752.7 257.5L753.7 257.5L754.7 257.4L755.7 257.3L756.7 257.2L757.7 257.2L758.7 257.1L759.7 257L760.7 257L761.7 256.9L762.7 256.9L763.7 256.9L764.7 256.9L765.7 256.9L766.7 256.9L767.7 256.9L768.7 256.9L769.7 257L770.7 257L771.7 257.1L772.7 257.1L773.7 257.2L774.7 257.2L775.7 257.3L776.7 257.4L777.7 257.5L778.7 257.7L779.7 257.8L780.7 257.9L781.7 258L782.7 258.1L783.7 258.2L784.7 258.2L785.7 258.2L786.7 258.2L787.7 258.2L788.7 258.2L789.7 258.2L790.7 258.2L791.7 258.2L792.7 258.2L793.7 258.1L794.7 258L795.7 257.9L796.7 257.8L797.7 257.7L798.7 257.6L799.7 257.5L800.7 257.4L801.7 257.3L802.7 257.1L803.7 257L804.7 256.8L805.7 256.7L806.7 256.5L807.7 256.4L808.7 256.3L809.7 256.2L810.7 256.1L811.7 256L812.7 255.9L813.7 255.9L814.7 255.8L815.7 255.7L816.7 255.7L817.7 255.6L818.7 255.6L819.7 255.5L820.7 255.5L821.7 255.4L822.7 255.4L823.7 255.3L824.7 255.3L825.7 255.2L826.7 255.2L827.7 255.1L828.7 255.1L829.7 255L830.7 255L831.7 254.9L832.7 254.9L833.7 254.8L834.7 254.7L835.7 254.7L836.7 254.7L837.7 254.7L838.7 254.9L839.7 255.1L840.7 255.3L841.7 255.5L842.7 255.8L843.7 256.1L844.7 256.5L845.7 256.9L846.7 257.3L847.7 257.7L848.7 258.1L849.7 258.4L850.7 258.7L851.7 259L852.7 259.3L853.7 259.6L854.7 259.9L855.7 260.1L856.7 260.3L857.7 260.5L858.7 260.5L859.7 260.6L860.7 260.6L861.7 260.7L862.7 260.7L863.7 260.7L864.7 260.8L865.7 260.8L866.7 260.8L867.7 260.8L868.7 260.8L869.7 260.9L870.7 260.9L871.7 260.9L872.7 260.9L873.7 260.9L874.7 260.9L875.7 260.9L876.7 260.9L877.7 261L878.7 261L879.7 261L880.7 261L881.7 261L882.7 261L883.7 261L884.7 261L885.7 261L886.7 261.1L887.7 261.1L888.7 261.1L889.7 261.2L890.7 261.2L891.7 261.2L892.7 261.3L893.7 261.3L894.7 261.3L895.7 261.4L896.7 261.4L897.7 261.4L898.7 261.5L899.7 261.5L900.7 261.5L901.7 261.5L902.7 261.5L903.7 261.5L904.7 261.5L905.7 261.5L906.7 261.5L907.7 261.5L908.7 261.5L909.7 261.5L910.7 261.5L911.7 261.5L912.7 261.5L913.7 261.5L914.7 261.5L915.7 261.5L916.7 261.5L917.7 261.5L918.7 261.5L919.7 261.5L920.7 261.5L921.7 261.5L922.7 261.5L923.7 261.5L924.7 261.5L925.7 261.4L926.7 261.4L927.7 261.4L928.7 261.3L929.7 261.3L930.7 261.2L931.7 261.2L932.7 261.1L933.7 261.1L934.7 261L935.7 261L936.7 260.9L937.7 260.8L938.7 260.7L939.7 260.6L940.7 260.5L941.7 260.4L942.7 260.3L943.7 260.1L944.7 260L945.7 259.8L946.7 259.7L947.7 259.6L948.7 259.5L949.7 259.4L950.7 259.3L951.7 259.3L952.7 259.2L953.7 259.2L954.7 259.1L955.7 259.1L956.7 259.1L957.7 259L958.7 259L959.7 259L960.7 259.1L961.7 259.1L962.7 259.1L963.7 259.2L964.7 259.3L965.7 259.3L966.7 259.4L967.7 259.5L968.7 259.6L969.7 259.6L970.7 259.7L971.7 259.8L972.7 259.9L973.7 259.9L974.7 260L975.7 260.1L976.7 260.2L977.7 260.3L978.7 260.4L979.7 260.4L980.7 260.5L981.7 260.6L982.7 260.6L983.7 260.7L984.7 260.7L985.7 260.8L986.7 260.8L987.7 260.8L988.7 260.9L989.7 260.9L990.7 261L991.7 261L992.7 261L993.7 261.1L994.7 261.2L995.7 261.2L996.7 261.3L997.7 261.3L998.7 261.4L999.7 261.5L1000.7 261.6L1001.7 261.7L1002.7 261.8L1003.7 261.9L1004.7 262L1005.7 262L1006.7 262.1L1007.7 262.3L1008.7 262.4L1009.7 262.5L1010.7 262.6L1011.7 262.8L1012.7 262.9L1013.7 263L1014.7 263.2L1015.7 263.3L1016.7 263.5L1017.7 263.6L1018.7 263.7L1019.7 263.8L1020.7 263.9L1021.7 264L1022.7 264L1023.7 264.1L1024.7 264.2L1025.7 264.3L1026.7 264.3L1027.7 264.4L1028.7 264.4L1029.7 264.4L1030.7 264.3L1031.7 264.2L1032.7 264L1033.7 263.8L1034.7 263.6L1035.7 263.4L1036.7 263.2L1037.7 263L1038.7 262.7L1039.7 262.4L1040.7 262L1041.7 261.6L1042.7 261.3L1043.7 260.9L1044.7 260.5L1045.7 260.2L1046.7 259.9L1047.7 259.6L1048.7 259.4L1049.7 259.1L1050.7 258.9L1051.7 258.6L1052.7 258.4L1053.7 258.1L1054.7 257.9L1055.7 257.6L1056.7 257.4L1057.7 257.1L1058.7 256.8L1059.7 256.6L1060.7 256.3L1061.7 256L1062.7 255.7L1063.7 255.4L1064.7 255.1L1065.7 254.9L1066.7 254.7L1067.7 254.5L1068.7 254.3L1069.7 254.1L1070.7 253.9L1071.7 253.8L1072.7 253.6L1073.7 253.5L1074.7 253.3L1075.7 253.2L1076.7 253.2L1077.7 253.2L1078.7 253.2L1079.7 253.3L1080.7 253.4L1081.7 253.5L1082.7 253.7L1083.7 253.9L1084.7 254L1085.7 254.2L1086.7 254.4L1087.7 254.5L1088.7 254.7L1089.7 254.9L1090.7 255L1091.7 255.2L1092.7 255.4L1093.7 255.6L1094.7 255.8L1095.7 255.9L1096.7 256.1L1097.7 256.2L1098.7 256.4L1099.7 256.4L1100.7 256.5L1101.7 256.6L1102.7 256.6L1103.7 256.6L1104.7 256.6L1105.7 256.7L1106.7 256.7L1107.7 256.7L1108.7 256.7L1109.7 256.7L1110.7 256.8L1111.7 256.8L1112.7 256.8L1113.7 256.8L1114.7 256.9L1115.7 256.9L1116.7 256.9L1117.7 257L1118.7 257L1119.7 257.1L1120.7 257.1L1121.7 257.2L1122.7 257.2L1123.7 257.3L1124.7 257.3L1125.7 257.4L1126.7 257.5L1127.7 257.5L1128.7 257.6L1129.7 257.7L1130.7 257.7L1131.7 257.8L1132.7 257.9L1133.7 258L1134.7 258.1L1135.7 258.2L1136.7 258.3L1137.7 258.4L1138.7 258.6L1139.7 258.7L1140.7 258.8L1141.7 259L1142.7 259.1L1143.7 259.3L1144.7 259.4L1145.7 259.6L1146.7 259.8L1147.7 260.1L1148.7 260.3L1149.7 260.6L1150.7 260.9L1151.7 261.3L1152.7 261.9L1153.7 262.6L1154.7 263.4L1155.7 264.2L1156.7 264.9L1157.7 265.5L1158.7 265.9L1159.7 266.3L1160.7 266.8L1161.7 267.5L1162.7 268.3L1163.7 269.2L1164.7 270L1165.7 270.8L1166.7 271.4L1167.7 272L1168.7 272.5L1169.7 273L1170.7 273.5L1171.7 273.9L1172.7 274.2L1173.7 274.2L1174.7 274.2L1175.7 274L1176.7 273.6L1177.7 273.3L1178.7 272.8L1179.7 272.4L1180.7 271.9L1181.7 271.3L1182.7 270.6L1183.7 269.8L1184.7 269L1185.7 268.2L1186.7 267.4L1187.7 266.8L1188.7 266.3L1189.7 265.8L1190.7 265.3L1191.7 264.8L1192.7 264.3L1193.7 264L1194.7 263.7L1195.7 263.5L1196.7 263.4L1197.7 263.4L1198.7 263.6L1199.7 263.8L1200.7 264.1L1201.7 264.4L1202.7 264.7L1203.7 265.1L1204.7 265.4L1205.7 265.7L1206.7 266.1L1207.7 266.5L1208.7 266.9L1209.7 267.3L1210.7 267.7L1211.7 268.1L1212.7 268.5L1213.7 268.8L1214.7 269.1L1215.7 269.4L1216.7 269.6L1217.7 269.9L1218.7 270.2L1219.7 270.4L1220.7 270.5L1221.7 270.6L1222.7 270.5L1223.7 270.3L1224.7 269.9L1225.7 269.5L1226.7 269L1227.7 268.4L1228.7 267.7L1229.7 266.8L1230.7 265.8L1231.7 264.7L1232.7 263.7L1233.7 262.7L1234.7 261.8L1235.7 261L1236.7 260.2L1237.7 259.4L1238.7 258.6L1239.7 257.8L1240.7 257.1L1241.7 256.6L1242.7 256.2L1243.7 256L1244.7 255.9L1245.7 255.8L1246.7 255.8L1247.7 255.7L1248.7 255.6L1249.7 255.6L1250.7 255.6L1251.7 255.5L1252.7 255.5L1253.7 255.5L1254.7 255.5L1255.7 255.5L1256.7 255.5L1257.7 255.5L1258.7 255.5L1259.7 255.5L1260.7 255.5L1261.7 255.5L1262.7 255.5L1263.7 255.5L1264.7 255.5L1265.7 255.5L1266.7 255.5L1267.7 255.5L1268.7 255.5L1269.7 255.5L1270.7 255.5L1271.7 255.4L1272.7 255.3L1273.7 255.2L1274.7 255L1275.7 254.9L1276.7 254.7L1277.7 254.6L1278.7 254.4L1279.7 254.1L1280.7 253.8L1281.7 253.5L1282.7 253.2L1283.7 252.9L1284.7 252.6L1285.7 252.4L1286.7 252.2L1287.7 252.1L1288.7 252L1289.7 251.9L1290.7 251.7L1291.7 251.6L1292.7 251.5L1293.7 251.5L1294.7 251.4L1295.7 251.4L1296.7 251.3L1297.7 251.3L1298.7 251.3L1299.7 251.3L1300.7 251.3L1301.7 251.3L1302.7 251.3L1303.7 251.3L1304.7 251.3L1305.7 251.3L1306.7 251.3L1307.7 251.3L1308.7 251.3L1309.7 251.3L1310.7 251.3L1311.7 251.3L1312.7 251.3L1313.7 251.3L1314.7 251.3L1315.7 251.3L1316.7 251.3L1317.7 251.3L1318.7 251.3L1319.7 251.3L1320.7 251.4L1321.7 251.4L1322.7 251.4L1323.7 251.5L1324.7 251.5L1325.7 251.6L1326.7 251.6L1327.7 251.7L1328.7 251.8L1329.7 251.8L1330.7 251.9L1331.7 252L1332.7 252.1L1333.7 252.2L1334.7 252.2L1335.7 252.3L1336.7 252.4L1337.7 252.5L1338.7 252.5L1339.7 252.6L1340.7 252.8L1341.7 252.9L1342.7 253.1L1343.7 253.4L1344.7 254L1345.7 254.8L1346.7 255.8L1347.7 256.8L1348.7 257.9L1349.7 259.2L1350.7 260.6L1351.7 262L1352.7 263.3L1353.7 264.5L1354.7 265.4L1355.7 266.3L1356.7 267.2L1357.7 268.1L1358.7 268.8L1359.7 269.4L1360.7 269.7L1361.7 270L1362.7 270.3L1363.7 270.5L1364.7 270.7L1365.7 270.8L1366.7 270.9L1367.7 270.8L1368.7 270.6L1369.7 270.2L1370.7 269.7L1371.7 269.2L1372.7 268.7L1373.7 268.2L1374.7 267.7L1375.7 267.2L1376.7 266.7L1377.7 266.1L1378.7 265.5L1379.7 264.9L1380.7 264.5L1381.7 264.1L1382.7 263.8L1383.7 263.6L1384.7 263.3L1385.7 263.1L1386.7 262.9L1387.7 262.8L1388.7 262.7L1389.7 262.6L1390.7 262.5L1391.7 262.6L1392.7 262.8L1393.7 263.1L1394.7 263.5L1395.7 264L1396.7 264.4L1397.7 264.9L1398.7 265.4L1399.7 265.8L1400.7 266.3L1401.7 266.8L1402.7 267.4L1403.7 267.9L1404.7 268.5L1405.7 269L1406.7 269.4L1407.7 269.8L1408.7 270.2L1409.7 270.6L1410.7 271L1411.7 271.3L1412.7 271.6L1413.7 271.7L1414.7 271.7L1415.7 271.5L1416.7 271.2L1417.7 270.8L1418.7 270.4L1419.7 269.6L1420.7 268.5L1421.7 267.2L1422.7 265.8L1423.7 264.5L1424.7 263.3L1425.7 262.1L1426.7 260.9L1427.7 259.6L1428.7 258.5L1429.7 257.4L1430.7 256.5L1431.7 255.7L1432.7 254.9L1433.7 254.2L1434.7 253.5L1435.7 253.1L1436.7 252.8L1437.7 252.8L1438.7 252.7L1439.7 252.7L1440.7 252.7L1441.7 252.7L1442.7 252.7L1443.7 252.7L1444.7 252.7L1445.7 252.7L1446.7 252.7L1447.7 252.7L1448.7 252.7L1449.7 252.7L1450.7 252.7L1451.7 252.7L1452.7 252.7L1453.7 252.7L1454.7 252.7L1455.7 252.7L1456.7 252.7L1457.7 252.7L1458.7 252.7L1459.7 252.7L1460.7 252.7L1461.7 252.7L1462.7 252.7L1463.7 252.7L1464.7 252.7L1465.7 252.7L1466.7 252.7L1467.7 252.7L1468.7 252.7L1469.7 252.7L1470.7 252.7L1471.7 252.7L1472.7 252.7L1473.7 252.7L1474.7 252.7L1475.7 252.7L1476.7 252.7L1477.7 252.7L1478.7 252.7L1479.7 252.7L1480.7 252.7L1481.7 252.7L1482.7 252.7L1483.7 252.7L1484.7 252.7L1485.7 252.7L1486.7 252.7L1487.7 252.7L1488.7 252.7L1489.7 252.7L1490.7 252.7L1491.7 252.7L1492.7 252.7L1493.7 252.7L1494.7 252.7L1495.7 252.7L1496.7 252.7L1497.7 252.7L1498.7 252.7L1499.7 252.7L1500.7 252.7L1501.7 252.7L1502.7 252.7L1503.7 252.7L1504.7 252.7L1505.7 252.7L1506.7 252.7L1507.7 252.7L1508.7 252.7L1509.7 252.7L1510.3 252.7L1510.3 290L73.7 290Z" fill="#7b9640" fill-opacity="0.105"/>
<path d="M73.7 161.5L74.7 162.2L75.7 162.9L76.7 163.6L77.7 164.2L78.7 164.9L79.7 165.6L80.7 166.2L81.7 166.9L82.7 167.5L83.7 168.2L84.7 168.9L85.7 169.6L86.7 170.2L87.7 170.6L88.7 171L89.7 171.4L90.7 171.6L91.7 171.6L92.7 171.5L93.7 171.5L94.7 171.4L95.7 171.3L96.7 171.2L97.7 171L98.7 170.9L99.7 170.8L100.7 170.6L101.7 170.5L102.7 170.3L103.7 170.2L104.7 170.1L105.7 169.9L106.7 169.8L107.7 169.7L108.7 169.6L109.7 169.4L110.7 169.2L111.7 169.1L112.7 168.9L113.7 168.7L114.7 168.4L115.7 168.1L116.7 167.8L117.7 167.3L118.7 166.7L119.7 166L120.7 165.3L121.7 164.5L122.7 163.7L123.7 162.8L124.7 161.7L125.7 160.6L126.7 159.5L127.7 158.5L128.7 157.4L129.7 156.5L130.7 155.6L131.7 154.8L132.7 153.9L133.7 153.1L134.7 152.5L135.7 152L136.7 151.7L137.7 151.4L138.7 151.2L139.7 151L140.7 151L141.7 151.1L142.7 151.1L143.7 151.2L144.7 151.4L145.7 151.5L146.7 151.7L147.7 151.8L148.7 152L149.7 152.1L150.7 152.2L151.7 152.3L152.7 152.4L153.7 152.5L154.7 152.7L155.7 152.8L156.7 152.9L157.7 153L158.7 153L159.7 153.1L160.7 153.2L161.7 153.2L162.7 153.2L163.7 153.2L164.7 153.1L165.7 153.1L166.7 153.1L167.7 153.1L168.7 153L169.7 153L170.7 152.9L171.7 152.9L172.7 152.9L173.7 152.8L174.7 152.8L175.7 152.8L176.7 152.7L177.7 152.7L178.7 152.7L179.7 152.7L180.7 152.7L181.7 152.7L182.7 152.7L183.7 152.7L184.7 152.7L185.7 152.7L186.7 152.7L187.7 152.7L188.7 152.8L189.7 152.8L190.7 152.8L191.7 152.8L192.7 152.8L193.7 152.8L194.7 152.9L195.7 152.9L196.7 152.9L197.7 152.9L198.7 152.9L199.7 153L200.7 153L201.7 153L202.7 153.1L203.7 153.1L204.7 153.1L205.7 153.2L206.7 153.2L207.7 153.3L208.7 153.3L209.7 153.4L210.7 153.4L211.7 153.5L212.7 153.6L213.7 153.7L214.7 153.9L215.7 154.1L216.7 154.3L217.7 154.6L218.7 154.8L219.7 155L220.7 155.2L221.7 155.4L222.7 155.7L223.7 155.9L224.7 156.2L225.7 156.4L226.7 156.6L227.7 156.8L228.7 157L229.7 157.1L230.7 157.2L231.7 157.3L232.7 157.3L233.7 157.4L234.7 157.4L235.7 157.4L236.7 157.5L237.7 157.5L238.7 157.5L239.7 157.5L240.7 157.5L241.7 157.5L242.7 157.5L243.7 157.5L244.7 157.5L245.7 157.4L246.7 157.4L247.7 157.4L248.7 157.3L249.7 157.3L250.7 157.3L251.7 157.2L252.7 157.2L253.7 157.1L254.7 157.1L255.7 157L256.7 157L257.7 156.9L258.7 156.8L259.7 156.7L260.7 156.6L261.7 156.5L262.7 156.4L263.7 156.3L264.7 156.1L265.7 155.9L266.7 155.6L267.7 155.3L268.7 155L269.7 154.6L270.7 154.3L271.7 154L272.7 153.7L273.7 153.3L274.7 153L275.7 152.6L276.7 152.3L277.7 152.1L278.7 151.9L279.7 151.7L280.7 151.5L281.7 151.4L282.7 151.2L283.7 151.1L284.7 150.9L285.7 150.8L286.7 150.7L287.7 150.6L288.7 150.6L289.7 150.5L290.7 150.5L291.7 150.4L292.7 150.4L293.7 150.3L294.7 150.3L295.7 150.2L296.7 150.2L297.7 150.2L298.7 150.1L299.7 150L300.7 150L301.7 149.9L302.7 149.8L303.7 149.8L304.7 149.7L305.7 149.7L306.7 149.7L307.7 149.7L308.7 149.7L309.7 149.7L310.7 149.8L311.7 149.9L312.7 150L313.7 150.1L314.7 150.2L315.7 150.4L316.7 150.7L317.7 151L318.7 151.3L319.7 151.6L320.7 151.9L321.7 152.2L322.7 152.4L323.7 152.6L324.7 152.8L325.7 152.9L326.7 153.1L327.7 153.3L328.7 153.4L329.7 153.5L330.7 153.5L331.7 153.5L332.7 153.5L333.7 153.5L334.7 153.5L335.7 153.4L336.7 153.4L337.7 153.4L338.7 153.4L339.7 153.3L340.7 153.3L341.7 153.3L342.7 153.2L343.7 153.2L344.7 153.2L345.7 153.1L346.7 153.1L347.7 153.1L348.7 153L349.7 153L350.7 153L351.7 152.9L352.7 152.9L353.7 152.9L354.7 152.9L355.7 152.9L356.7 152.8L357.7 152.8L358.7 152.9L359.7 152.9L360.7 152.9L361.7 152.9L362.7 153L363.7 153.1L364.7 153.1L365.7 153.2L366.7 153.2L367.7 153.3L368.7 153.4L369.7 153.4L370.7 153.5L371.7 153.5L372.7 153.5L373.7 153.5L374.7 153.5L375.7 153.6L376.7 153.6L377.7 153.6L378.7 153.6L379.7 153.6L380.7 153.6L381.7 153.6L382.7 153.7L383.7 153.7L384.7 153.7L385.7 153.7L386.7 153.7L387.7 153.7L388.7 153.7L389.7 153.7L390.7 153.7L391.7 153.7L392.7 153.7L393.7 153.6L394.7 153.6L395.7 153.6L396.7 153.6L397.7 153.6L398.7 153.5L399.7 153.5L400.7 153.5L401.7 153.4L402.7 153.4L403.7 153.4L404.7 153.3L405.7 153.2L406.7 153.1L407.7 152.9L408.7 152.7L409.7 152.5L410.7 152.3L411.7 152.1L412.7 151.8L413.7 151.5L414.7 151.2L415.7 150.9L416.7 150.6L417.7 150.3L418.7 150L419.7 149.8L420.7 149.5L421.7 149.3L422.7 149L423.7 148.8L424.7 148.6L425.7 148.5L426.7 148.5L427.7 148.4L428.7 148.4L429.7 148.4L430.7 148.4L431.7 148.4L432.7 148.3L433.7 148.3L434.7 148.3L435.7 148.3L436.7 148.3L437.7 148.4L438.7 148.4L439.7 148.5L440.7 148.5L441.7 148.6L442.7 148.6L443.7 148.7L444.7 148.7L445.7 148.8L446.7 148.8L447.7 148.8L448.7 148.9L449.7 148.9L450.7 149L451.7 149L452.7 149.1L453.7 149.1L454.7 149.2L455.7 149.2L456.7 149.3L457.7 149.3L458.7 149.4L459.7 149.4L460.7 149.5L461.7 149.6L462.7 149.6L463.7 149.7L464.7 149.7L465.7 149.8L466.7 149.9L467.7 149.9L468.7 150L469.7 150.1L470.7 150.2L471.7 150.2L472.7 150.3L473.7 150.4L474.7 150.5L475.7 150.5L476.7 150.6L477.7 150.7L478.7 150.8L479.7 150.9L480.7 151L481.7 151L482.7 151.1L483.7 151.2L484.7 151.3L485.7 151.4L486.7 151.5L487.7 151.6L488.7 151.7L489.7 151.8L490.7 151.9L491.7 152L492.7 152.1L493.7 152.2L494.7 152.3L495.7 152.4L496.7 152.5L497.7 152.7L498.7 152.8L499.7 152.9L500.7 153L501.7 153.2L502.7 153.3L503.7 153.5L504.7 153.7L505.7 153.8L506.7 154L507.7 154.2L508.7 154.4L509.7 154.5L510.7 154.7L511.7 154.8L512.7 155L513.7 155.1L514.7 155.2L515.7 155.4L516.7 155.5L517.7 155.6L518.7 155.7L519.7 155.8L520.7 155.9L521.7 156L522.7 156L523.7 156L524.7 156L525.7 156L526.7 156L527.7 156L528.7 156L529.7 156L530.7 156L531.7 155.9L532.7 155.9L533.7 155.9L534.7 155.9L535.7 155.9L536.7 155.9L537.7 155.8L538.7 155.8L539.7 155.8L540.7 155.7L541.7 155.7L542.7 155.7L543.7 155.6L544.7 155.6L545.7 155.5L546.7 155.4L547.7 155.4L548.7 155.3L549.7 155.2L550.7 155.2L551.7 155.1L552.7 155L553.7 154.9L554.7 154.9L555.7 154.8L556.7 154.7L557.7 154.6L558.7 154.5L559.7 154.4L560.7 154.3L561.7 154.2L562.7 154L563.7 153.9L564.7 153.7L565.7 153.6L566.7 153.4L567.7 153.3L568.7 153.2L569.7 153.1L570.7 153L571.7 152.9L572.7 152.8L573.7 152.7L574.7 152.6L575.7 152.6L576.7 152.5L577.7 152.4L578.7 152.3L579.7 152.3L580.7 152.2L581.7 152.1L582.7 152.1L583.7 152L584.7 152L585.7 151.9L586.7 151.8L587.7 151.8L588.7 151.7L589.7 151.7L590.7 151.6L591.7 151.6L592.7 151.5L593.7 151.5L594.7 151.4L595.7 151.4L596.7 151.3L597.7 151.3L598.7 151.2L599.7 151.2L600.7 151.1L601.7 151.1L602.7 151L603.7 151L604.7 151L605.7 150.9L606.7 150.9L607.7 150.9L608.7 150.8L609.7 150.8L610.7 150.8L611.7 150.8L612.7 150.8L613.7 150.7L614.7 150.7L615.7 150.7L616.7 150.7L617.7 150.7L618.7 150.7L619.7 150.7L620.7 150.7L621.7 150.7L622.7 150.7L623.7 150.7L624.7 150.7L625.7 150.7L626.7 150.7L627.7 150.7L628.7 150.8L629.7 150.8L630.7 150.8L631.7 150.8L632.7 150.8L633.7 150.9L634.7 150.9L635.7 151L636.7 151L637.7 151.1L638.7 151.1L639.7 151.2L640.7 151.3L641.7 151.4L642.7 151.5L643.7 151.6L644.7 151.7L645.7 151.9L646.7 152.1L647.7 152.3L648.7 152.6L649.7 152.9L650.7 153.2L651.7 153.5L652.7 154L653.7 154.5L654.7 155.1L655.7 155.7L656.7 156.2L657.7 156.7L658.7 157.2L659.7 157.7L660.7 158.2L661.7 158.8L662.7 159.2L663.7 159.7L664.7 160L665.7 160.2L666.7 160.3L667.7 160.5L668.7 160.6L669.7 160.7L670.7 160.8L671.7 160.9L672.7 161L673.7 161L674.7 161.1L675.7 161.2L676.7 161.2L677.7 161.2L678.7 161.2L679.7 161.2L680.7 161.3L681.7 161.3L682.7 161.3L683.7 161.3L684.7 161.3L685.7 161.3L686.7 161.3L687.7 161.4L688.7 161.4L689.7 161.4L690.7 161.4L691.7 161.4L692.7 161.4L693.7 161.3L694.7 161.3L695.7 161.2L696.7 161.1L697.7 161L698.7 160.9L699.7 160.7L700.7 160.6L701.7 160.5L702.7 160.4L703.7 160.2L704.7 160.2L705.7 160.1L706.7 160L707.7 159.9L708.7 159.8L709.7 159.7L710.7 159.6L711.7 159.5L712.7 159.4L713.7 159.3L714.7 159.2L715.7 159.2L716.7 159.1L717.7 159L718.7 159L719.7 158.9L720.7 158.8L721.7 158.7L722.7 158.7L723.7 158.6L724.7 158.5L725.7 158.5L726.7 158.4L727.7 158.4L728.7 158.3L729.7 158.2L730.7 158.2L731.7 158.1L732.7 158.1L733.7 158L734.7 158L735.7 158L736.7 157.9L737.7 157.9L738.7 157.9L739.7 157.9L740.7 157.8L741.7 157.8L742.7 157.8L743.7 157.8L744.7 157.8L745.7 157.7L746.7 157.7L747.7 157.7L748.7 157.7L749.7 157.7L750.7 157.7L751.7 157.7L752.7 157.7L753.7 157.7L754.7 157.7L755.7 157.7L756.7 157.7L757.7 157.7L758.7 157.7L759.7 157.8L760.7 157.8L761.7 157.8L762.7 157.8L763.7 157.8L764.7 157.9L765.7 157.9L766.7 157.9L767.7 158L768.7 158L769.7 158.1L770.7 158.2L771.7 158.2L772.7 158.3L773.7 158.3L774.7 158.4L775.7 158.4L776.7 158.5L777.7 158.5L778.7 158.5L779.7 158.5L780.7 158.5L781.7 158.5L782.7 158.5L783.7 158.5L784.7 158.5L785.7 158.5L786.7 158.5L787.7 158.5L788.7 158.5L789.7 158.5L790.7 158.5L791.7 158.5L792.7 158.4L793.7 158.2L794.7 158L795.7 157.7L796.7 157.4L797.7 157.1L798.7 156.8L799.7 156.5L800.7 156.1L801.7 155.8L802.7 155.4L803.7 155L804.7 154.6L805.7 154.2L806.7 153.9L807.7 153.6L808.7 153.3L809.7 153.1L810.7 152.8L811.7 152.6L812.7 152.4L813.7 152.2L814.7 152L815.7 151.8L816.7 151.6L817.7 151.5L818.7 151.3L819.7 151.2L820.7 151L821.7 150.9L822.7 150.8L823.7 150.6L824.7 150.5L825.7 150.4L826.7 150.3L827.7 150.2L828.7 150.1L829.7 150.1L830.7 150L831.7 149.9L832.7 149.8L833.7 149.8L834.7 149.7L835.7 149.7L836.7 149.7L837.7 149.7L838.7 149.7L839.7 149.8L840.7 149.9L841.7 149.9L842.7 150.1L843.7 150.2L844.7 150.3L845.7 150.4L846.7 150.5L847.7 150.6L848.7 150.7L849.7 150.9L850.7 151L851.7 151.2L852.7 151.4L853.7 151.5L854.7 151.7L855.7 151.9L856.7 152L857.7 152.2L858.7 152.3L859.7 152.5L860.7 152.6L861.7 152.7L862.7 152.8L863.7 152.9L864.7 153.1L865.7 153.2L866.7 153.3L867.7 153.4L868.7 153.5L869.7 153.6L870.7 153.7L871.7 153.8L872.7 153.9L873.7 153.9L874.7 154L875.7 154L876.7 154.1L877.7 154.1L878.7 154.2L879.7 154.2L880.7 154.3L881.7 154.3L882.7 154.3L883.7 154.3L884.7 154.3L885.7 154.3L886.7 154.3L887.7 154.1L888.7 153.9L889.7 153.7L890.7 153.5L891.7 153.2L892.7 153L893.7 152.7L894.7 152.3L895.7 151.9L896.7 151.6L897.7 151.3L898.7 151L899.7 150.7L900.7 150.5L901.7 150.2L902.7 150L903.7 149.8L904.7 149.6L905.7 149.5L906.7 149.4L907.7 149.3L908.7 149.2L909.7 149.1L910.7 149.1L911.7 149L912.7 148.9L913.7 148.9L914.7 148.8L915.7 148.8L916.7 148.8L917.7 148.7L918.7 148.7L919.7 148.7L920.7 148.7L921.7 148.6L922.7 148.6L923.7 148.6L924.7 148.6L925.7 148.6L926.7 148.5L927.7 148.5L928.7 148.5L929.7 148.5L930.7 148.5L931.7 148.5L932.7 148.5L933.7 148.5L934.7 148.5L935.7 148.6L936.7 148.6L937.7 148.7L938.7 148.8L939.7 148.9L940.7 149L941.7 149.1L942.7 149.2L943.7 149.4L944.7 149.5L945.7 149.6L946.7 149.8L947.7 150L948.7 150.2L949.7 150.3L950.7 150.5L951.7 150.7L952.7 150.8L953.7 151L954.7 151.1L955.7 151.3L956.7 151.4L957.7 151.6L958.7 151.7L959.7 151.9L960.7 152L961.7 152.2L962.7 152.3L963.7 152.4L964.7 152.6L965.7 152.7L966.7 152.8L967.7 152.9L968.7 153.1L969.7 153.2L970.7 153.3L971.7 153.4L972.7 153.5L973.7 153.6L974.7 153.7L975.7 153.9L976.7 154L977.7 154.2L978.7 154.3L979.7 154.5L980.7 154.7L981.7 154.9L982.7 155.3L983.7 155.7L984.7 156.1L985.7 156.6L986.7 157.2L987.7 157.8L988.7 158.5L989.7 159.2L990.7 159.9L991.7 160.6L992.7 161.4L993.7 162.2L994.7 163L995.7 163.8L996.7 164.6L997.7 165.4L998.7 166.3L999.7 167L1000.7 167.8L1001.7 168.5L1002.7 169.2L1003.7 169.9L1004.7 170.6L1005.7 171.2L1006.7 171.9L1007.7 172.6L1008.7 173.4L1009.7 174.2L1010.7 175L1011.7 175.9L1012.7 176.7L1013.7 177.6L1014.7 178.6L1015.7 179.5L1016.7 180.5L1017.7 181.5L1018.7 182.5L1019.7 183.5L1020.7 184.5L1021.7 185.5L1022.7 186.6L1023.7 187.6L1024.7 188.2L1025.7 188.7L1026.7 189L1027.7 189.3L1028.7 189.5L1029.7 189.4L1030.7 189.2L1031.7 188.9L1032.7 188.5L1033.7 187.7L1034.7 186.5L1035.7 185.3L1036.7 183.9L1037.7 182.3L1038.7 180.5L1039.7 178.7L1040.7 177L1041.7 175.2L1042.7 173.5L1043.7 171.7L1044.7 169.9L1045.7 168.2L1046.7 166.4L1047.7 164.7L1048.7 163.1L1049.7 161.5L1050.7 160L1051.7 158.4L1052.7 156.9L1053.7 155.3L1054.7 153.7L1055.7 152L1056.7 150.2L1057.7 148.3L1058.7 146.4L1059.7 144.5L1060.7 142.6L1061.7 140.7L1062.7 138.9L1063.7 137L1064.7 135.1L1065.7 133.2L1066.7 131.4L1067.7 129.7L1068.7 128.2L1069.7 126.9L1070.7 125.6L1071.7 124.4L1072.7 123.5L1073.7 122.9L1074.7 122.3L1075.7 121.8L1076.7 121.5L1077.7 121.4L1078.7 121.5L1079.7 121.6L1080.7 121.7L1081.7 121.9L1082.7 122.1L1083.7 122.4L1084.7 122.8L1085.7 123.2L1086.7 123.8L1087.7 124.3L1088.7 124.8L1089.7 125.3L1090.7 125.9L1091.7 126.4L1092.7 127L1093.7 127.6L1094.7 128.2L1095.7 128.8L1096.7 129.3L1097.7 129.8L1098.7 130.3L1099.7 130.8L1100.7 131.2L1101.7 131.7L1102.7 132.1L1103.7 132.5L1104.7 133L1105.7 133.4L1106.7 133.9L1107.7 134.3L1108.7 134.8L1109.7 135.3L1110.7 135.8L1111.7 136.2L1112.7 136.7L1113.7 137.2L1114.7 137.8L1115.7 138.3L1116.7 138.8L1117.7 139.3L1118.7 139.9L1119.7 140.4L1120.7 141L1121.7 141.5L1122.7 142.1L1123.7 142.7L1124.7 143.3L1125.7 143.9L1126.7 144.5L1127.7 145.2L1128.7 145.8L1129.7 146.5L1130.7 147.2L1131.7 147.9L1132.7 148.7L1133.7 149.4L1134.7 150.2L1135.7 151L1136.7 151.8L1137.7 152.7L1138.7 153.5L1139.7 154.5L1140.7 155.4L1141.7 156.4L1142.7 157.4L1143.7 158.4L1144.7 159.5L1145.7 160.6L1146.7 161.7L1147.7 162.9L1148.7 164L1149.7 165.3L1150.7 166.6L1151.7 168.2L1152.7 170L1153.7 172.4L1154.7 174.9L1155.7 177.6L1156.7 180.1L1157.7 182.9L1158.7 185.8L1159.7 188.6L1160.7 191L1161.7 193.1L1162.7 194.9L1163.7 196.5L1164.7 198.1L1165.7 200L1166.7 202L1167.7 204.1L1168.7 206L1169.7 207.5L1170.7 208.6L1171.7 209.6L1172.7 210.4L1173.7 210.7L1174.7 210.6L1175.7 210.2L1176.7 209.7L1177.7 209.1L1178.7 208.5L1179.7 207.6L1180.7 206.4L1181.7 205.1L1182.7 203.7L1183.7 202.2L1184.7 200.8L1185.7 199.5L1186.7 198.1L1187.7 196.7L1188.7 195.2L1189.7 193.9L1190.7 192.7L1191.7 191.7L1192.7 190.8L1193.7 189.9L1194.7 189.1L1195.7 188.5L1196.7 188.3L1197.7 188.3L1198.7 188.4L1199.7 188.6L1200.7 188.8L1201.7 189L1202.7 189.3L1203.7 189.5L1204.7 189.8L1205.7 190.1L1206.7 190.4L1207.7 190.8L1208.7 191.2L1209.7 191.5L1210.7 191.9L1211.7 192.2L1212.7 192.6L1213.7 192.9L1214.7 193.2L1215.7 193.5L1216.7 193.8L1217.7 194.1L1218.7 194.4L1219.7 194.6L1220.7 194.7L1221.7 194.8L1222.7 194.6L1223.7 193.9L1224.7 192.8L1225.7 191.6L1226.7 190.2L1227.7 188.2L1228.7 185.8L1229.7 183.2L1230.7 180.7L1231.7 178L1232.7 175.2L1233.7 172.2L1234.7 169.3L1235.7 166.4L1236.7 163.4L1237.7 160.4L1238.7 157.5L1239.7 154.8L1240.7 152.5L1241.7 150.4L1242.7 148.5L1243.7 146.7L1244.7 145.1L1245.7 143.7L1246.7 142.4L1247.7 141.2L1248.7 140.1L1249.7 139L1250.7 138L1251.7 137L1252.7 136L1253.7 135.1L1254.7 134L1255.7 133L1256.7 132L1257.7 131L1258.7 130L1259.7 129.2L1260.7 128.4L1261.7 127.8L1262.7 127.2L1263.7 126.7L1264.7 126.2L1265.7 125.8L1266.7 125.4L1267.7 125.1L1268.7 124.9L1269.7 124.7L1270.7 124.7L1271.7 124.6L1272.7 124.5L1273.7 124.5L1274.7 124.4L1275.7 124.4L1276.7 124.3L1277.7 124.3L1278.7 124.3L1279.7 124.2L1280.7 124.2L1281.7 124.2L1282.7 124.2L1283.7 124.2L1284.7 124.2L1285.7 124.2L1286.7 124.2L1287.7 124.2L1288.7 124.2L1289.7 124.2L1290.7 124.2L1291.7 124.2L1292.7 124.2L1293.7 124.2L1294.7 124.3L1295.7 124.3L1296.7 124.3L1297.7 124.4L1298.7 124.5L1299.7 124.6L1300.7 124.7L1301.7 124.8L1302.7 125L1303.7 125.1L1304.7 125.2L1305.7 125.4L1306.7 125.6L1307.7 125.8L1308.7 126L1309.7 126.2L1310.7 126.5L1311.7 126.7L1312.7 127L1313.7 127.2L1314.7 127.4L1315.7 127.6L1316.7 127.8L1317.7 128L1318.7 128.2L1319.7 128.3L1320.7 128.5L1321.7 128.6L1322.7 128.8L1323.7 129L1324.7 129.1L1325.7 129.3L1326.7 129.4L1327.7 129.6L1328.7 129.8L1329.7 129.9L1330.7 130.1L1331.7 130.3L1332.7 130.4L1333.7 130.6L1334.7 130.7L1335.7 130.9L1336.7 131L1337.7 131.2L1338.7 131.4L1339.7 131.7L1340.7 132L1341.7 132.4L1342.7 133.2L1343.7 134.3L1344.7 135.8L1345.7 138L1346.7 141.1L1347.7 144.9L1348.7 149.1L1349.7 153.6L1350.7 159L1351.7 164.9L1352.7 171L1353.7 177.1L1354.7 183.6L1355.7 190.3L1356.7 196.7L1357.7 202.6L1358.7 208.3L1359.7 213.7L1360.7 218.7L1361.7 222.9L1362.7 226.9L1363.7 230.4L1364.7 232.8L1365.7 234L1366.7 234.6L1367.7 234.2L1368.7 233.1L1369.7 231.5L1370.7 229.3L1371.7 225.8L1372.7 221.5L1373.7 216.9L1374.7 212.1L1375.7 206.6L1376.7 200.6L1377.7 194.5L1378.7 188.8L1379.7 183.6L1380.7 178.4L1381.7 173.4L1382.7 168.8L1383.7 164.8L1384.7 161.4L1385.7 158.3L1386.7 155.5L1387.7 153.4L1388.7 152.2L1389.7 151.4L1390.7 151L1391.7 151.5L1392.7 152.7L1393.7 154.5L1394.7 156.5L1395.7 159.4L1396.7 163.1L1397.7 167.3L1398.7 171.7L1399.7 176.3L1400.7 181.5L1401.7 187.1L1402.7 192.8L1403.7 198.2L1404.7 203.1L1405.7 207.9L1406.7 212.6L1407.7 217L1408.7 220.7L1409.7 223.7L1410.7 226.4L1411.7 228.6L1412.7 229.8L1413.7 230.5L1414.7 230.9L1415.7 230.7L1416.7 229.7L1417.7 228.2L1418.7 226.4L1419.7 223.7L1420.7 220.1L1421.7 215.9L1422.7 211.5L1423.7 207.3L1424.7 202.5L1425.7 197.4L1426.7 192.2L1427.7 187.1L1428.7 182.4L1429.7 178.4L1430.7 174.6L1431.7 171.1L1432.7 167.8L1433.7 164.9L1434.7 162.4L1435.7 159.8L1436.7 158.5L1437.7 158.4L1438.7 158.4L1439.7 158.4L1440.7 158.4L1441.7 158.4L1442.7 158.4L1443.7 158.4L1444.7 158.4L1445.7 158.4L1446.7 158.4L1447.7 158.4L1448.7 158.4L1449.7 158.4L1450.7 158.4L1451.7 158.4L1452.7 158.4L1453.7 158.4L1454.7 158.4L1455.7 158.4L1456.7 158.4L1457.7 158.4L1458.7 158.4L1459.7 158.4L1460.7 158.4L1461.7 158.4L1462.7 158.4L1463.7 158.4L1464.7 158.4L1465.7 158.4L1466.7 158.4L1467.7 158.4L1468.7 158.4L1469.7 158.4L1470.7 158.4L1471.7 158.4L1472.7 158.4L1473.7 158.4L1474.7 158.4L1475.7 158.4L1476.7 158.4L1477.7 158.4L1478.7 158.4L1479.7 158.4L1480.7 158.4L1481.7 158.4L1482.7 158.4L1483.7 158.4L1484.7 158.4L1485.7 158.4L1486.7 158.4L1487.7 158.4L1488.7 158.4L1489.7 158.4L1490.7 158.4L1491.7 158.4L1492.7 158.4L1493.7 158.4L1494.7 158.4L1495.7 158.4L1496.7 158.4L1497.7 158.4L1498.7 158.4L1499.7 158.4L1500.7 158.4L1501.7 158.4L1502.7 158.4L1503.7 158.4L1504.7 158.4L1505.7 158.4L1506.7 158.4L1507.7 158.4L1508.7 158.4L1509.7 158.4L1510.3 158.4" fill="none" stroke="#e0752d" stroke-width="1" stroke-linejoin="round"/>
<path d="M73.7 258L74.7 258.2L75.7 258.5L76.7 258.7L77.7 258.9L78.7 259.1L79.7 259.3L80.7 259.5L81.7 259.7L82.7 259.9L83.7 260L84.7 260.2L85.7 260.4L86.7 260.5L87.7 260.7L88.7 260.8L89.7 260.8L90.7 260.9L91.7 260.9L92.7 260.9L93.7 260.9L94.7 260.8L95.7 260.8L96.7 260.8L97.7 260.8L98.7 260.8L99.7 260.8L100.7 260.8L101.7 260.7L102.7 260.7L103.7 260.7L104.7 260.7L105.7 260.7L106.7 260.6L107.7 260.6L108.7 260.6L109.7 260.5L110.7 260.5L111.7 260.5L112.7 260.4L113.7 260.3L114.7 260.3L115.7 260.2L116.7 260.1L117.7 260L118.7 259.8L119.7 259.6L120.7 259.3L121.7 259L122.7 258.7L123.7 258.5L124.7 258.2L125.7 257.9L126.7 257.5L127.7 257.2L128.7 256.8L129.7 256.5L130.7 256.3L131.7 256.1L132.7 255.9L133.7 255.8L134.7 255.6L135.7 255.5L136.7 255.4L137.7 255.3L138.7 255.2L139.7 255.2L140.7 255.2L141.7 255.2L142.7 255.2L143.7 255.2L144.7 255.2L145.7 255.2L146.7 255.3L147.7 255.3L148.7 255.3L149.7 255.3L150.7 255.3L151.7 255.3L152.7 255.3L153.7 255.4L154.7 255.4L155.7 255.4L156.7 255.4L157.7 255.4L158.7 255.4L159.7 255.4L160.7 255.4L161.7 255.4L162.7 255.4L163.7 255.4L164.7 255.4L165.7 255.4L166.7 255.5L167.7 255.6L168.7 255.7L169.7 255.8L170.7 255.9L171.7 256L172.7 256.2L173.7 256.3L174.7 256.5L175.7 256.7L176.7 256.8L177.7 257L178.7 257.1L179.7 257.3L180.7 257.4L181.7 257.5L182.7 257.6L183.7 257.7L184.7 257.8L185.7 257.9L186.7 258L187.7 258L188.7 258L189.7 258L190.7 258L191.7 258L192.7 257.9L193.7 257.8L194.7 257.8L195.7 257.7L196.7 257.6L197.7 257.6L198.7 257.5L199.7 257.4L200.7 257.3L201.7 257.3L202.7 257.2L203.7 257.2L204.7 257.2L205.7 257.1L206.7 257.1L207.7 257.1L208.7 257.1L209.7 257L210.7 257L211.7 257L212.7 257L213.7 257L214.7 257L215.7 257L216.7 257L217.7 257L218.7 257L219.7 257L220.7 257L221.7 257L222.7 257L223.7 257L224.7 257L225.7 257L226.7 257L227.7 257L228.7 257L229.7 257L230.7 257L231.7 257.1L232.7 257.1L233.7 257.1L234.7 257.1L235.7 257.1L236.7 257.2L237.7 257.2L238.7 257.2L239.7 257.2L240.7 257.3L241.7 257.3L242.7 257.3L243.7 257.4L244.7 257.4L245.7 257.4L246.7 257.4L247.7 257.5L248.7 257.5L249.7 257.5L250.7 257.6L251.7 257.6L252.7 257.7L253.7 257.7L254.7 257.8L255.7 257.8L256.7 257.9L257.7 258L258.7 258L259.7 258.1L260.7 258.2L261.7 258.3L262.7 258.4L263.7 258.6L264.7 258.8L265.7 259L266.7 259.2L267.7 259.4L268.7 259.6L269.7 259.8L270.7 260L271.7 260.2L272.7 260.4L273.7 260.6L274.7 260.8L275.7 261L276.7 261.1L277.7 261.2L278.7 261.3L279.7 261.4L280.7 261.5L281.7 261.5L282.7 261.6L283.7 261.7L284.7 261.7L285.7 261.8L286.7 261.8L287.7 261.8L288.7 261.9L289.7 261.9L290.7 261.9L291.7 261.9L292.7 261.9L293.7 261.9L294.7 262L295.7 262L296.7 262L297.7 262L298.7 262L299.7 262L300.7 262L301.7 262L302.7 262L303.7 262L304.7 262L305.7 262L306.7 262L307.7 262L308.7 262L309.7 261.9L310.7 261.9L311.7 261.7L312.7 261.6L313.7 261.4L314.7 261.3L315.7 261L316.7 260.6L317.7 260.1L318.7 259.7L319.7 259.3L320.7 258.9L321.7 258.6L322.7 258.3L323.7 258L324.7 257.7L325.7 257.4L326.7 257.2L327.7 257L328.7 256.9L329.7 256.8L330.7 256.8L331.7 256.7L332.7 256.7L333.7 256.6L334.7 256.6L335.7 256.5L336.7 256.5L337.7 256.5L338.7 256.4L339.7 256.4L340.7 256.4L341.7 256.4L342.7 256.4L343.7 256.4L344.7 256.4L345.7 256.4L346.7 256.4L347.7 256.4L348.7 256.4L349.7 256.4L350.7 256.4L351.7 256.4L352.7 256.4L353.7 256.4L354.7 256.4L355.7 256.5L356.7 256.5L357.7 256.5L358.7 256.5L359.7 256.5L360.7 256.6L361.7 256.7L362.7 256.8L363.7 256.9L364.7 257L365.7 257.2L366.7 257.3L367.7 257.5L368.7 257.6L369.7 257.8L370.7 257.9L371.7 258L372.7 258L373.7 258.1L374.7 258.1L375.7 258.2L376.7 258.2L377.7 258.3L378.7 258.3L379.7 258.3L380.7 258.4L381.7 258.4L382.7 258.4L383.7 258.4L384.7 258.5L385.7 258.5L386.7 258.5L387.7 258.5L388.7 258.5L389.7 258.6L390.7 258.6L391.7 258.6L392.7 258.6L393.7 258.6L394.7 258.6L395.7 258.6L396.7 258.6L397.7 258.6L398.7 258.6L399.7 258.6L400.7 258.6L401.7 258.7L402.7 258.7L403.7 258.7L404.7 258.7L405.7 258.7L406.7 258.8L407.7 258.9L408.7 259L409.7 259.1L410.7 259.2L411.7 259.3L412.7 259.4L413.7 259.5L414.7 259.7L415.7 259.9L416.7 260.1L417.7 260.2L418.7 260.4L419.7 260.5L420.7 260.5L421.7 260.5L422.7 260.5L423.7 260.5L424.7 260.5L425.7 260.5L426.7 260.5L427.7 260.5L428.7 260.5L429.7 260.5L430.7 260.5L431.7 260.5L432.7 260.5L433.7 260.5L434.7 260.5L435.7 260.5L436.7 260.5L437.7 260.5L438.7 260.5L439.7 260.5L440.7 260.5L441.7 260.5L442.7 260.5L443.7 260.5L444.7 260.5L445.7 260.4L446.7 260.4L447.7 260.4L448.7 260.3L449.7 260.3L450.7 260.3L451.7 260.2L452.7 260.2L453.7 260.2L454.7 260.2L455.7 260.2L456.7 260.2L457.7 260.3L458.7 260.3L459.7 260.4L460.7 260.4L461.7 260.5L462.7 260.6L463.7 260.6L464.7 260.7L465.7 260.8L466.7 260.9L467.7 260.9L468.7 261L469.7 261L470.7 261L471.7 261L472.7 261L473.7 261L474.7 261L475.7 261L476.7 261L477.7 261L478.7 261L479.7 261L480.7 261L481.7 261L482.7 260.9L483.7 260.9L484.7 260.9L485.7 260.9L486.7 260.9L487.7 260.9L488.7 260.8L489.7 260.8L490.7 260.8L491.7 260.8L492.7 260.7L493.7 260.7L494.7 260.7L495.7 260.6L496.7 260.6L497.7 260.5L498.7 260.5L499.7 260.4L500.7 260.4L501.7 260.3L502.7 260.2L503.7 260L504.7 259.8L505.7 259.7L506.7 259.5L507.7 259.3L508.7 259.1L509.7 258.9L510.7 258.8L511.7 258.6L512.7 258.4L513.7 258.2L514.7 258L515.7 257.8L516.7 257.7L517.7 257.5L518.7 257.4L519.7 257.4L520.7 257.4L521.7 257.4L522.7 257.4L523.7 257.4L524.7 257.4L525.7 257.4L526.7 257.4L527.7 257.4L528.7 257.4L529.7 257.4L530.7 257.4L531.7 257.4L532.7 257.4L533.7 257.4L534.7 257.4L535.7 257.4L536.7 257.4L537.7 257.4L538.7 257.4L539.7 257.4L540.7 257.4L541.7 257.5L542.7 257.5L543.7 257.5L544.7 257.5L545.7 257.5L546.7 257.5L547.7 257.5L548.7 257.5L549.7 257.5L550.7 257.5L551.7 257.5L552.7 257.5L553.7 257.5L554.7 257.5L555.7 257.5L556.7 257.5L557.7 257.5L558.7 257.5L559.7 257.5L560.7 257.5L561.7 257.5L562.7 257.5L563.7 257.4L564.7 257.4L565.7 257.4L566.7 257.4L567.7 257.4L568.7 257.4L569.7 257.4L570.7 257.4L571.7 257.4L572.7 257.4L573.7 257.4L574.7 257.4L575.7 257.3L576.7 257.3L577.7 257.3L578.7 257.3L579.7 257.3L580.7 257.3L581.7 257.3L582.7 257.3L583.7 257.3L584.7 257.3L585.7 257.2L586.7 257.2L587.7 257.2L588.7 257.2L589.7 257.2L590.7 257.2L591.7 257.2L592.7 257.2L593.7 257.2L594.7 257.2L595.7 257.2L596.7 257.2L597.7 257.2L598.7 257.2L599.7 257.2L600.7 257.2L601.7 257.2L602.7 257.3L603.7 257.3L604.7 257.3L605.7 257.3L606.7 257.3L607.7 257.4L608.7 257.4L609.7 257.5L610.7 257.5L611.7 257.6L612.7 257.6L613.7 257.7L614.7 257.8L615.7 257.9L616.7 257.9L617.7 258L618.7 258.1L619.7 258.1L620.7 258.2L621.7 258.2L622.7 258.3L623.7 258.3L624.7 258.4L625.7 258.4L626.7 258.4L627.7 258.5L628.7 258.5L629.7 258.6L630.7 258.6L631.7 258.7L632.7 258.7L633.7 258.8L634.7 258.8L635.7 258.9L636.7 259L637.7 259L638.7 259.1L639.7 259.2L640.7 259.3L641.7 259.4L642.7 259.4L643.7 259.5L644.7 259.6L645.7 259.7L646.7 259.8L647.7 259.9L648.7 260L649.7 260.1L650.7 260.3L651.7 260.4L652.7 260.5L653.7 260.6L654.7 260.8L655.7 260.9L656.7 261L657.7 261.1L658.7 261.2L659.7 261.2L660.7 261.3L661.7 261.4L662.7 261.5L663.7 261.6L664.7 261.7L665.7 261.8L666.7 261.8L667.7 261.9L668.7 261.9L669.7 262L670.7 262L671.7 262.1L672.7 262.1L673.7 262.1L674.7 262.2L675.7 262.2L676.7 262.2L677.7 262.3L678.7 262.3L679.7 262.3L680.7 262.4L681.7 262.4L682.7 262.4L683.7 262.4L684.7 262.5L685.7 262.5L686.7 262.5L687.7 262.5L688.7 262.5L689.7 262.5L690.7 262.5L691.7 262.5L692.7 262.5L693.7 262.5L694.7 262.5L695.7 262.5L696.7 262.4L697.7 262.4L698.7 262.3L699.7 262.3L700.7 262.2L701.7 262.1L702.7 262L703.7 261.9L704.7 261.8L705.7 261.6L706.7 261.5L707.7 261.3L708.7 261.2L709.7 261L710.7 260.9L711.7 260.8L712.7 260.7L713.7 260.6L714.7 260.5L715.7 260.4L716.7 260.3L717.7 260.2L718.7 260.1L719.7 260.1L720.7 260L721.7 259.9L722.7 259.8L723.7 259.7L724.7 259.7L725.7 259.6L726.7 259.5L727.7 259.5L728.7 259.4L729.7 259.3L730.7 259.3L731.7 259.2L732.7 259.1L733.7 259.1L734.7 259L735.7 259L736.7 258.9L737.7 258.8L738.7 258.7L739.7 258.7L740.7 258.6L741.7 258.5L742.7 258.4L743.7 258.3L744.7 258.2L745.7 258.1L746.7 258L747.7 257.9L748.7 257.8L749.7 257.8L750.7 257.7L751.7 257.6L752.7 257.5L753.7 257.5L754.7 257.4L755.7 257.3L756.7 257.2L757.7 257.2L758.7 257.1L759.7 257L760.7 257L761.7 256.9L762.7 256.9L763.7 256.9L764.7 256.9L765.7 256.9L766.7 256.9L767.7 256.9L768.7 256.9L769.7 257L770.7 257L771.7 257.1L772.7 257.1L773.7 257.2L774.7 257.2L775.7 257.3L776.7 257.4L777.7 257.5L778.7 257.7L779.7 257.8L780.7 257.9L781.7 258L782.7 258.1L783.7 258.2L784.7 258.2L785.7 258.2L786.7 258.2L787.7 258.2L788.7 258.2L789.7 258.2L790.7 258.2L791.7 258.2L792.7 258.2L793.7 258.1L794.7 258L795.7 257.9L796.7 257.8L797.7 257.7L798.7 257.6L799.7 257.5L800.7 257.4L801.7 257.3L802.7 257.1L803.7 257L804.7 256.8L805.7 256.7L806.7 256.5L807.7 256.4L808.7 256.3L809.7 256.2L810.7 256.1L811.7 256L812.7 255.9L813.7 255.9L814.7 255.8L815.7 255.7L816.7 255.7L817.7 255.6L818.7 255.6L819.7 255.5L820.7 255.5L821.7 255.4L822.7 255.4L823.7 255.3L824.7 255.3L825.7 255.2L826.7 255.2L827.7 255.1L828.7 255.1L829.7 255L830.7 255L831.7 254.9L832.7 254.9L833.7 254.8L834.7 254.7L835.7 254.7L836.7 254.7L837.7 254.7L838.7 254.9L839.7 255.1L840.7 255.3L841.7 255.5L842.7 255.8L843.7 256.1L844.7 256.5L845.7 256.9L846.7 257.3L847.7 257.7L848.7 258.1L849.7 258.4L850.7 258.7L851.7 259L852.7 259.3L853.7 259.6L854.7 259.9L855.7 260.1L856.7 260.3L857.7 260.5L858.7 260.5L859.7 260.6L860.7 260.6L861.7 260.7L862.7 260.7L863.7 260.7L864.7 260.8L865.7 260.8L866.7 260.8L867.7 260.8L868.7 260.8L869.7 260.9L870.7 260.9L871.7 260.9L872.7 260.9L873.7 260.9L874.7 260.9L875.7 260.9L876.7 260.9L877.7 261L878.7 261L879.7 261L880.7 261L881.7 261L882.7 261L883.7 261L884.7 261L885.7 261L886.7 261.1L887.7 261.1L888.7 261.1L889.7 261.2L890.7 261.2L891.7 261.2L892.7 261.3L893.7 261.3L894.7 261.3L895.7 261.4L896.7 261.4L897.7 261.4L898.7 261.5L899.7 261.5L900.7 261.5L901.7 261.5L902.7 261.5L903.7 261.5L904.7 261.5L905.7 261.5L906.7 261.5L907.7 261.5L908.7 261.5L909.7 261.5L910.7 261.5L911.7 261.5L912.7 261.5L913.7 261.5L914.7 261.5L915.7 261.5L916.7 261.5L917.7 261.5L918.7 261.5L919.7 261.5L920.7 261.5L921.7 261.5L922.7 261.5L923.7 261.5L924.7 261.5L925.7 261.4L926.7 261.4L927.7 261.4L928.7 261.3L929.7 261.3L930.7 261.2L931.7 261.2L932.7 261.1L933.7 261.1L934.7 261L935.7 261L936.7 260.9L937.7 260.8L938.7 260.7L939.7 260.6L940.7 260.5L941.7 260.4L942.7 260.3L943.7 260.1L944.7 260L945.7 259.8L946.7 259.7L947.7 259.6L948.7 259.5L949.7 259.4L950.7 259.3L951.7 259.3L952.7 259.2L953.7 259.2L954.7 259.1L955.7 259.1L956.7 259.1L957.7 259L958.7 259L959.7 259L960.7 259.1L961.7 259.1L962.7 259.1L963.7 259.2L964.7 259.3L965.7 259.3L966.7 259.4L967.7 259.5L968.7 259.6L969.7 259.6L970.7 259.7L971.7 259.8L972.7 259.9L973.7 259.9L974.7 260L975.7 260.1L976.7 260.2L977.7 260.3L978.7 260.4L979.7 260.4L980.7 260.5L981.7 260.6L982.7 260.6L983.7 260.7L984.7 260.7L985.7 260.8L986.7 260.8L987.7 260.8L988.7 260.9L989.7 260.9L990.7 261L991.7 261L992.7 261L993.7 261.1L994.7 261.2L995.7 261.2L996.7 261.3L997.7 261.3L998.7 261.4L999.7 261.5L1000.7 261.6L1001.7 261.7L1002.7 261.8L1003.7 261.9L1004.7 262L1005.7 262L1006.7 262.1L1007.7 262.3L1008.7 262.4L1009.7 262.5L1010.7 262.6L1011.7 262.8L1012.7 262.9L1013.7 263L1014.7 263.2L1015.7 263.3L1016.7 263.5L1017.7 263.6L1018.7 263.7L1019.7 263.8L1020.7 263.9L1021.7 264L1022.7 264L1023.7 264.1L1024.7 264.2L1025.7 264.3L1026.7 264.3L1027.7 264.4L1028.7 264.4L1029.7 264.4L1030.7 264.3L1031.7 264.2L1032.7 264L1033.7 263.8L1034.7 263.6L1035.7 263.4L1036.7 263.2L1037.7 263L1038.7 262.7L1039.7 262.4L1040.7 262L1041.7 261.6L1042.7 261.3L1043.7 260.9L1044.7 260.5L1045.7 260.2L1046.7 259.9L1047.7 259.6L1048.7 259.4L1049.7 259.1L1050.7 258.9L1051.7 258.6L1052.7 258.4L1053.7 258.1L1054.7 257.9L1055.7 257.6L1056.7 257.4L1057.7 257.1L1058.7 256.8L1059.7 256.6L1060.7 256.3L1061.7 256L1062.7 255.7L1063.7 255.4L1064.7 255.1L1065.7 254.9L1066.7 254.7L1067.7 254.5L1068.7 254.3L1069.7 254.1L1070.7 253.9L1071.7 253.8L1072.7 253.6L1073.7 253.5L1074.7 253.3L1075.7 253.2L1076.7 253.2L1077.7 253.2L1078.7 253.2L1079.7 253.3L1080.7 253.4L1081.7 253.5L1082.7 253.7L1083.7 253.9L1084.7 254L1085.7 254.2L1086.7 254.4L1087.7 254.5L1088.7 254.7L1089.7 254.9L1090.7 255L1091.7 255.2L1092.7 255.4L1093.7 255.6L1094.7 255.8L1095.7 255.9L1096.7 256.1L1097.7 256.2L1098.7 256.4L1099.7 256.4L1100.7 256.5L1101.7 256.6L1102.7 256.6L1103.7 256.6L1104.7 256.6L1105.7 256.7L1106.7 256.7L1107.7 256.7L1108.7 256.7L1109.7 256.7L1110.7 256.8L1111.7 256.8L1112.7 256.8L1113.7 256.8L1114.7 256.9L1115.7 256.9L1116.7 256.9L1117.7 257L1118.7 257L1119.7 257.1L1120.7 257.1L1121.7 257.2L1122.7 257.2L1123.7 257.3L1124.7 257.3L1125.7 257.4L1126.7 257.5L1127.7 257.5L1128.7 257.6L1129.7 257.7L1130.7 257.7L1131.7 257.8L1132.7 257.9L1133.7 258L1134.7 258.1L1135.7 258.2L1136.7 258.3L1137.7 258.4L1138.7 258.6L1139.7 258.7L1140.7 258.8L1141.7 259L1142.7 259.1L1143.7 259.3L1144.7 259.4L1145.7 259.6L1146.7 259.8L1147.7 260.1L1148.7 260.3L1149.7 260.6L1150.7 260.9L1151.7 261.3L1152.7 261.9L1153.7 262.6L1154.7 263.4L1155.7 264.2L1156.7 264.9L1157.7 265.5L1158.7 265.9L1159.7 266.3L1160.7 266.8L1161.7 267.5L1162.7 268.3L1163.7 269.2L1164.7 270L1165.7 270.8L1166.7 271.4L1167.7 272L1168.7 272.5L1169.7 273L1170.7 273.5L1171.7 273.9L1172.7 274.2L1173.7 274.2L1174.7 274.2L1175.7 274L1176.7 273.6L1177.7 273.3L1178.7 272.8L1179.7 272.4L1180.7 271.9L1181.7 271.3L1182.7 270.6L1183.7 269.8L1184.7 269L1185.7 268.2L1186.7 267.4L1187.7 266.8L1188.7 266.3L1189.7 265.8L1190.7 265.3L1191.7 264.8L1192.7 264.3L1193.7 264L1194.7 263.7L1195.7 263.5L1196.7 263.4L1197.7 263.4L1198.7 263.6L1199.7 263.8L1200.7 264.1L1201.7 264.4L1202.7 264.7L1203.7 265.1L1204.7 265.4L1205.7 265.7L1206.7 266.1L1207.7 266.5L1208.7 266.9L1209.7 267.3L1210.7 267.7L1211.7 268.1L1212.7 268.5L1213.7 268.8L1214.7 269.1L1215.7 269.4L1216.7 269.6L1217.7 269.9L1218.7 270.2L1219.7 270.4L1220.7 270.5L1221.7 270.6L1222.7 270.5L1223.7 270.3L1224.7 269.9L1225.7 269.5L1226.7 269L1227.7 268.4L1228.7 267.7L1229.7 266.8L1230.7 265.8L1231.7 264.7L1232.7 263.7L1233.7 262.7L1234.7 261.8L1235.7 261L1236.7 260.2L1237.7 259.4L1238.7 258.6L1239.7 257.8L1240.7 257.1L1241.7 256.6L1242.7 256.2L1243.7 256L1244.7 255.9L1245.7 255.8L1246.7 255.8L1247.7 255.7L1248.7 255.6L1249.7 255.6L1250.7 255.6L1251.7 255.5L1252.7 255.5L1253.7 255.5L1254.7 255.5L1255.7 255.5L1256.7 255.5L1257.7 255.5L1258.7 255.5L1259.7 255.5L1260.7 255.5L1261.7 255.5L1262.7 255.5L1263.7 255.5L1264.7 255.5L1265.7 255.5L1266.7 255.5L1267.7 255.5L1268.7 255.5L1269.7 255.5L1270.7 255.5L1271.7 255.4L1272.7 255.3L1273.7 255.2L1274.7 255L1275.7 254.9L1276.7 254.7L1277.7 254.6L1278.7 254.4L1279.7 254.1L1280.7 253.8L1281.7 253.5L1282.7 253.2L1283.7 252.9L1284.7 252.6L1285.7 252.4L1286.7 252.2L1287.7 252.1L1288.7 252L1289.7 251.9L1290.7 251.7L1291.7 251.6L1292.7 251.5L1293.7 251.5L1294.7 251.4L1295.7 251.4L1296.7 251.3L1297.7 251.3L1298.7 251.3L1299.7 251.3L1300.7 251.3L1301.7 251.3L1302.7 251.3L1303.7 251.3L1304.7 251.3L1305.7 251.3L1306.7 251.3L1307.7 251.3L1308.7 251.3L1309.7 251.3L1310.7 251.3L1311.7 251.3L1312.7 251.3L1313.7 251.3L1314.7 251.3L1315.7 251.3L1316.7 251.3L1317.7 251.3L1318.7 251.3L1319.7 251.3L1320.7 251.4L1321.7 251.4L1322.7 251.4L1323.7 251.5L1324.7 251.5L1325.7 251.6L1326.7 251.6L1327.7 251.7L1328.7 251.8L1329.7 251.8L1330.7 251.9L1331.7 252L1332.7 252.1L1333.7 252.2L1334.7 252.2L1335.7 252.3L1336.7 252.4L1337.7 252.5L1338.7 252.5L1339.7 252.6L1340.7 252.8L1341.7 252.9L1342.7 253.1L1343.7 253.4L1344.7 254L1345.7 254.8L1346.7 255.8L1347.7 256.8L1348.7 257.9L1349.7 259.2L1350.7 260.6L1351.7 262L1352.7 263.3L1353.7 264.5L1354.7 265.4L1355.7 266.3L1356.7 267.2L1357.7 268.1L1358.7 268.8L1359.7 269.4L1360.7 269.7L1361.7 270L1362.7 270.3L1363.7 270.5L1364.7 270.7L1365.7 270.8L1366.7 270.9L1367.7 270.8L1368.7 270.6L1369.7 270.2L1370.7 269.7L1371.7 269.2L1372.7 268.7L1373.7 268.2L1374.7 267.7L1375.7 267.2L1376.7 266.7L1377.7 266.1L1378.7 265.5L1379.7 264.9L1380.7 264.5L1381.7 264.1L1382.7 263.8L1383.7 263.6L1384.7 263.3L1385.7 263.1L1386.7 262.9L1387.7 262.8L1388.7 262.7L1389.7 262.6L1390.7 262.5L1391.7 262.6L1392.7 262.8L1393.7 263.1L1394.7 263.5L1395.7 264L1396.7 264.4L1397.7 264.9L1398.7 265.4L1399.7 265.8L1400.7 266.3L1401.7 266.8L1402.7 267.4L1403.7 267.9L1404.7 268.5L1405.7 269L1406.7 269.4L1407.7 269.8L1408.7 270.2L1409.7 270.6L1410.7 271L1411.7 271.3L1412.7 271.6L1413.7 271.7L1414.7 271.7L1415.7 271.5L1416.7 271.2L1417.7 270.8L1418.7 270.4L1419.7 269.6L1420.7 268.5L1421.7 267.2L1422.7 265.8L1423.7 264.5L1424.7 263.3L1425.7 262.1L1426.7 260.9L1427.7 259.6L1428.7 258.5L1429.7 257.4L1430.7 256.5L1431.7 255.7L1432.7 254.9L1433.7 254.2L1434.7 253.5L1435.7 253.1L1436.7 252.8L1437.7 252.8L1438.7 252.7L1439.7 252.7L1440.7 252.7L1441.7 252.7L1442.7 252.7L1443.7 252.7L1444.7 252.7L1445.7 252.7L1446.7 252.7L1447.7 252.7L1448.7 252.7L1449.7 252.7L1450.7 252.7L1451.7 252.7L1452.7 252.7L1453.7 252.7L1454.7 252.7L1455.7 252.7L1456.7 252.7L1457.7 252.7L1458.7 252.7L1459.7 252.7L1460.7 252.7L1461.7 252.7L1462.7 252.7L1463.7 252.7L1464.7 252.7L1465.7 252.7L1466.7 252.7L1467.7 252.7L1468.7 252.7L1469.7 252.7L1470.7 252.7L1471.7 252.7L1472.7 252.7L1473.7 252.7L1474.7 252.7L1475.7 252.7L1476.7 252.7L1477.7 252.7L1478.7 252.7L1479.7 252.7L1480.7 252.7L1481.7 252.7L1482.7 252.7L1483.7 252.7L1484.7 252.7L1485.7 252.7L1486.7 252.7L1487.7 252.7L1488.7 252.7L1489.7 252.7L1490.7 252.7L1491.7 252.7L1492.7 252.7L1493.7 252.7L1494.7 252.7L1495.7 252.7L1496.7 252.7L1497.7 252.7L1498.7 252.7L1499.7 252.7L1500.7 252.7L1501.7 252.7L1502.7 252.7L1503.7 252.7L1504.7 252.7L1505.7 252.7L1506.7 252.7L1507.7 252.7L1508.7 252.7L1509.7 252.7L1510.3 252.7" fill="none" stroke="#7eb04c" stroke-width="1" stroke-linejoin="round"/>
</svg>
<div class="tx" style="right:2422.20px;top:115px;font-size:12px;line-height:12px;"><span style="letter-spacing:0.439px;">60 msg/s</span></div>
<div class="tx" style="right:2422.20px;top:145px;font-size:12px;line-height:12px;"><span style="letter-spacing:0.439px;">50 msg/s</span></div>
<div class="tx" style="right:2422.20px;top:175px;font-size:12px;line-height:12px;"><span style="letter-spacing:0.439px;">40 msg/s</span></div>
<div class="tx" style="right:2422.20px;top:205px;font-size:12px;line-height:12px;"><span style="letter-spacing:0.439px;">30 msg/s</span></div>
<div class="tx" style="right:2422.20px;top:235px;font-size:12px;line-height:12px;"><span style="letter-spacing:0.439px;">20 msg/s</span></div>
<div class="tx" style="right:2422.20px;top:265px;font-size:12px;line-height:12px;"><span style="letter-spacing:0.439px;">10 msg/s</span></div>
<div class="tx" style="left:114.60px;transform:translateX(-50%);top:298px;font-size:12px;line-height:12px;"><span style="letter-spacing:0.010px;">17:13:00</span></div>
<div class="tx" style="left:210.80px;transform:translateX(-50%);top:298px;font-size:12px;line-height:12px;"><span style="letter-spacing:0.010px;">17:14:00</span></div>
<div class="tx" style="left:307.00px;transform:translateX(-50%);top:298px;font-size:12px;line-height:12px;"><span style="letter-spacing:0.010px;">17:15:00</span></div>
<div class="tx" style="left:403.20px;transform:translateX(-50%);top:298px;font-size:12px;line-height:12px;"><span style="letter-spacing:0.010px;">17:16:00</span></div>
<div class="tx" style="left:499.40px;transform:translateX(-50%);top:298px;font-size:12px;line-height:12px;"><span style="letter-spacing:0.010px;">17:17:00</span></div>
<div class="tx" style="left:595.60px;transform:translateX(-50%);top:298px;font-size:12px;line-height:12px;"><span style="letter-spacing:0.010px;">17:18:00</span></div>
<div class="tx" style="left:691.80px;transform:translateX(-50%);top:298px;font-size:12px;line-height:12px;"><span style="letter-spacing:0.010px;">17:19:00</span></div>
<div class="tx" style="left:788.00px;transform:translateX(-50%);top:298px;font-size:12px;line-height:12px;"><span style="letter-spacing:0.010px;">17:20:00</span></div>
<div class="tx" style="left:884.20px;transform:translateX(-50%);top:298px;font-size:12px;line-height:12px;"><span style="letter-spacing:0.010px;">17:21:00</span></div>
<div class="tx" style="left:980.40px;transform:translateX(-50%);top:298px;font-size:12px;line-height:12px;"><span style="letter-spacing:0.010px;">17:22:00</span></div>
<div class="tx" style="left:1076.60px;transform:translateX(-50%);top:298px;font-size:12px;line-height:12px;"><span style="letter-spacing:0.010px;">17:23:00</span></div>
<div class="tx" style="left:1172.80px;transform:translateX(-50%);top:298px;font-size:12px;line-height:12px;"><span style="letter-spacing:0.010px;">17:24:00</span></div>
<div class="tx" style="left:1269.00px;transform:translateX(-50%);top:298px;font-size:12px;line-height:12px;"><span style="letter-spacing:0.010px;">17:25:00</span></div>
<div class="tx" style="left:1365.20px;transform:translateX(-50%);top:298px;font-size:12px;line-height:12px;"><span style="letter-spacing:0.010px;">17:26:00</span></div>
<div class="tx" style="left:1461.40px;transform:translateX(-50%);top:298px;font-size:12px;line-height:12px;"><span style="letter-spacing:0.010px;">17:27:00</span></div>
<div class="lg" style="left:28px;top:318px"><i style="background:#e0752d"></i><b style="margin-right:9.0px"><span style="letter-spacing:0.146px;">b-1.dev-paris.dntdhj.c3.kafka.eu-west-3.amazonaws.com</span></b><i style="background:#7eb04c"></i><b><span style="letter-spacing:0.146px;">b-2.dev-paris.dntdhj.c3.kafka.eu-west-3.amazonaws.com</span></b></div>
<svg class="cv" style="left:1540px;top:332px" width="8" height="8" viewBox="1540 332 8 8"><path d="M1545 333h2v6h-6v-2h4z" fill="#aaaaab"/></svg>
</section>
<section aria-label="Most Active Topics">
<div class="panel" style="left:1558px;top:46px;width:925px;height:296px"></div>
<h2 class="ttl" style="left:2020.50px;transform:translateX(-50%);top:56px;font-size:14px;line-height:14px;"><span style="letter-spacing:0.239px;">Most Active Topics</span></h2>
<div class="gauge" aria-label="products 18.8 msgs/s">
<div class="tx" style="left:1567.0px;width:179.9px;text-align:center;top:96px;font-size:23.4px;line-height:23.4px;color:rgb(163,82,204)"><span style="letter-spacing:0.867px;">18.8</span><span style="font-size:19.6px;margin-left:5.0px"><span style="letter-spacing:1.023px;">msgs/s</span></span></div>
<div class="cell" style="left:1567.2px;top:122.30px;width:179.9px;height:9.9px;background:radial-gradient(rgba(163,82,204,.95) 10%,rgba(163,82,204,.55))"></div>
<div class="cell" style="left:1567.2px;top:134.26px;width:179.9px;height:9.9px;background:radial-gradient(rgba(155,84,205,.95) 10%,rgba(155,84,205,.55))"></div>
<div class="cell" style="left:1567.2px;top:146.22px;width:179.9px;height:9.9px;background:radial-gradient(rgba(148,87,206,.95) 10%,rgba(148,87,206,.55))"></div>
<div class="cell" style="left:1567.2px;top:158.18px;width:179.9px;height:9.9px;background:radial-gradient(rgba(140,89,207,.95) 10%,rgba(140,89,207,.55))"></div>
<div class="cell" style="left:1567.2px;top:170.14px;width:179.9px;height:9.9px;background:radial-gradient(rgba(133,91,207,.95) 10%,rgba(133,91,207,.55))"></div>
<div class="cell" style="left:1567.2px;top:182.10px;width:179.9px;height:9.9px;background:radial-gradient(rgba(125,93,208,.95) 10%,rgba(125,93,208,.55))"></div>
<div class="cell" style="left:1567.2px;top:194.06px;width:179.9px;height:9.9px;background:radial-gradient(rgba(118,96,209,.95) 10%,rgba(118,96,209,.55))"></div>
<div class="cell" style="left:1567.2px;top:206.02px;width:179.9px;height:9.9px;background:radial-gradient(rgba(110,98,210,.95) 10%,rgba(110,98,210,.55))"></div>
<div class="cell" style="left:1567.2px;top:217.98px;width:179.9px;height:9.9px;background:radial-gradient(rgba(103,100,211,.95) 10%,rgba(103,100,211,.55))"></div>
<div class="cell" style="left:1567.2px;top:229.94px;width:179.9px;height:9.9px;background:radial-gradient(rgba(95,102,212,.95) 10%,rgba(95,102,212,.55))"></div>
<div class="cell" style="left:1567.2px;top:241.90px;width:179.9px;height:9.9px;background:radial-gradient(rgba(88,105,213,.95) 10%,rgba(88,105,213,.55))"></div>
<div class="cell" style="left:1567.2px;top:253.86px;width:179.9px;height:9.9px;background:radial-gradient(rgba(80,107,214,.95) 10%,rgba(80,107,214,.55))"></div>
<div class="cell" style="left:1567.2px;top:265.82px;width:179.9px;height:9.9px;background:radial-gradient(rgba(73,109,214,.95) 10%,rgba(73,109,214,.55))"></div>
<div class="cell" style="left:1567.2px;top:277.78px;width:179.9px;height:9.9px;background:radial-gradient(rgba(65,111,215,.95) 10%,rgba(65,111,215,.55))"></div>
<div class="cell" style="left:1567.2px;top:289.74px;width:179.9px;height:9.9px;background:radial-gradient(rgba(58,114,216,.95) 10%,rgba(58,114,216,.55))"></div>
<div class="cell" style="left:1567.2px;top:301.70px;width:179.9px;height:9.9px;background:radial-gradient(rgba(50,116,217,.95) 10%,rgba(50,116,217,.55))"></div>
<div class="tx" style="left:1657.15px;transform:translateX(-50%);top:315px;font-size:14px;line-height:14px;"><span style="letter-spacing:0.312px;">products</span></div>
</div>
<div class="gauge" aria-label="products 17.8 msgs/s">
<div class="tx" style="left:1748.8px;width:179.9px;text-align:center;top:96px;font-size:23.4px;line-height:23.4px;color:rgb(155,84,204)"><span style="letter-spacing:0.867px;">17.8</span><span style="font-size:19.6px;margin-left:5.0px"><span style="letter-spacing:1.023px;">msgs/s</span></span></div>
<div class="cell" style="left:1749.0px;top:122.30px;width:179.9px;height:9.9px;background:rgba(163,82,204,.18)"></div>
<div class="cell" style="left:1749.0px;top:134.26px;width:179.9px;height:9.9px;background:radial-gradient(rgba(155,84,205,.95) 10%,rgba(155,84,205,.55))"></div>
<div class="cell" style="left:1749.0px;top:146.22px;width:179.9px;height:9.9px;background:radial-gradient(rgba(148,87,206,.95) 10%,rgba(148,87,206,.55))"></div>
<div class="cell" style="left:1749.0px;top:158.18px;width:179.9px;height:9.9px;background:radial-gradient(rgba(140,89,207,.95) 10%,rgba(140,89,207,.55))"></div>
<div class="cell" style="left:1749.0px;top:170.14px;width:179.9px;height:9.9px;background:radial-gradient(rgba(133,91,207,.95) 10%,rgba(133,91,207,.55))"></div>
<div class="cell" style="left:1749.0px;top:182.10px;width:179.9px;height:9.9px;background:radial-gradient(rgba(125,93,208,.95) 10%,rgba(125,93,208,.55))"></div>
<div class="cell" style="left:1749.0px;top:194.06px;width:179.9px;height:9.9px;background:radial-gradient(rgba(118,96,209,.95) 10%,rgba(118,96,209,.55))"></div>
<div class="cell" style="left:1749.0px;top:206.02px;width:179.9px;height:9.9px;background:radial-gradient(rgba(110,98,210,.95) 10%,rgba(110,98,210,.55))"></div>
<div class="cell" style="left:1749.0px;top:217.98px;width:179.9px;height:9.9px;background:radial-gradient(rgba(103,100,211,.95) 10%,rgba(103,100,211,.55))"></div>
<div class="cell" style="left:1749.0px;top:229.94px;width:179.9px;height:9.9px;background:radial-gradient(rgba(95,102,212,.95) 10%,rgba(95,102,212,.55))"></div>
<div class="cell" style="left:1749.0px;top:241.90px;width:179.9px;height:9.9px;background:radial-gradient(rgba(88,105,213,.95) 10%,rgba(88,105,213,.55))"></div>
<div class="cell" style="left:1749.0px;top:253.86px;width:179.9px;height:9.9px;background:radial-gradient(rgba(80,107,214,.95) 10%,rgba(80,107,214,.55))"></div>
<div class="cell" style="left:1749.0px;top:265.82px;width:179.9px;height:9.9px;background:radial-gradient(rgba(73,109,214,.95) 10%,rgba(73,109,214,.55))"></div>
<div class="cell" style="left:1749.0px;top:277.78px;width:179.9px;height:9.9px;background:radial-gradient(rgba(65,111,215,.95) 10%,rgba(65,111,215,.55))"></div>
<div class="cell" style="left:1749.0px;top:289.74px;width:179.9px;height:9.9px;background:radial-gradient(rgba(58,114,216,.95) 10%,rgba(58,114,216,.55))"></div>
<div class="cell" style="left:1749.0px;top:301.70px;width:179.9px;height:9.9px;background:radial-gradient(rgba(50,116,217,.95) 10%,rgba(50,116,217,.55))"></div>
<div class="tx" style="left:1838.93px;transform:translateX(-50%);top:315px;font-size:14px;line-height:14px;"><span style="letter-spacing:0.312px;">products</span></div>
</div>
<div class="gauge" aria-label="events 12.1 msgs/s">
<div class="tx" style="left:1930.6px;width:179.9px;text-align:center;top:96px;font-size:23.4px;line-height:23.4px;color:rgb(108,98,210)"><span style="letter-spacing:0.867px;">12.1</span><span style="font-size:19.6px;margin-left:5.0px"><span style="letter-spacing:1.023px;">msgs/s</span></span></div>
<div class="cell" style="left:1930.8px;top:122.30px;width:179.9px;height:9.9px;background:rgba(163,82,204,.18)"></div>
<div class="cell" style="left:1930.8px;top:134.26px;width:179.9px;height:9.9px;background:rgba(155,84,205,.18)"></div>
<div class="cell" style="left:1930.8px;top:146.22px;width:179.9px;height:9.9px;background:rgba(148,87,206,.18)"></div>
<div class="cell" style="left:1930.8px;top:158.18px;width:179.9px;height:9.9px;background:rgba(140,89,207,.18)"></div>
<div class="cell" style="left:1930.8px;top:170.14px;width:179.9px;height:9.9px;background:rgba(133,91,207,.18)"></div>
<div class="cell" style="left:1930.8px;top:182.10px;width:179.9px;height:9.9px;background:rgba(125,93,208,.18)"></div>
<div class="cell" style="left:1930.8px;top:194.06px;width:179.9px;height:9.9px;background:rgba(118,96,209,.18)"></div>
<div class="cell" style="left:1930.8px;top:206.02px;width:179.9px;height:9.9px;background:rgba(110,98,210,.18)"></div>
<div class="cell" style="left:1930.8px;top:217.98px;width:179.9px;height:9.9px;background:radial-gradient(rgba(103,100,211,.95) 10%,rgba(103,100,211,.55))"></div>
<div class="cell" style="left:1930.8px;top:229.94px;width:179.9px;height:9.9px;background:radial-gradient(rgba(95,102,212,.95) 10%,rgba(95,102,212,.55))"></div>
<div class="cell" style="left:1930.8px;top:241.90px;width:179.9px;height:9.9px;background:radial-gradient(rgba(88,105,213,.95) 10%,rgba(88,105,213,.55))"></div>
<div class="cell" style="left:1930.8px;top:253.86px;width:179.9px;height:9.9px;background:radial-gradient(rgba(80,107,214,.95) 10%,rgba(80,107,214,.55))"></div>
<div class="cell" style="left:1930.8px;top:265.82px;width:179.9px;height:9.9px;background:radial-gradient(rgba(73,109,214,.95) 10%,rgba(73,109,214,.55))"></div>
<div class="cell" style="left:1930.8px;top:277.78px;width:179.9px;height:9.9px;background:radial-gradient(rgba(65,111,215,.95) 10%,rgba(65,111,215,.55))"></div>
<div class="cell" style="left:1930.8px;top:289.74px;width:179.9px;height:9.9px;background:radial-gradient(rgba(58,114,216,.95) 10%,rgba(58,114,216,.55))"></div>
<div class="cell" style="left:1930.8px;top:301.70px;width:179.9px;height:9.9px;background:radial-gradient(rgba(50,116,217,.95) 10%,rgba(50,116,217,.55))"></div>
<div class="tx" style="left:2020.71px;transform:translateX(-50%);top:315px;font-size:14px;line-height:14px;"><span style="letter-spacing:0.058px;">events</span></div>
</div>
<div class="gauge" aria-label="events 8.53 msgs/s">
<div class="tx" style="left:2112.3px;width:179.9px;text-align:center;top:96px;font-size:23.4px;line-height:23.4px;color:rgb(78,107,213)"><span style="letter-spacing:0.867px;">8.53</span><span style="font-size:19.6px;margin-left:5.0px"><span style="letter-spacing:1.023px;">msgs/s</span></span></div>
<div class="cell" style="left:2112.5px;top:122.30px;width:179.9px;height:9.9px;background:rgba(163,82,204,.18)"></div>
<div class="cell" style="left:2112.5px;top:134.26px;width:179.9px;height:9.9px;background:rgba(155,84,205,.18)"></div>
<div class="cell" style="left:2112.5px;top:146.22px;width:179.9px;height:9.9px;background:rgba(148,87,206,.18)"></div>
<div class="cell" style="left:2112.5px;top:158.18px;width:179.9px;height:9.9px;background:rgba(140,89,207,.18)"></div>
<div class="cell" style="left:2112.5px;top:170.14px;width:179.9px;height:9.9px;background:rgba(133,91,207,.18)"></div>
<div class="cell" style="left:2112.5px;top:182.10px;width:179.9px;height:9.9px;background:rgba(125,93,208,.18)"></div>
<div class="cell" style="left:2112.5px;top:194.06px;width:179.9px;height:9.9px;background:rgba(118,96,209,.18)"></div>
<div class="cell" style="left:2112.5px;top:206.02px;width:179.9px;height:9.9px;background:rgba(110,98,210,.18)"></div>
<div class="cell" style="left:2112.5px;top:217.98px;width:179.9px;height:9.9px;background:rgba(103,100,211,.18)"></div>
<div class="cell" style="left:2112.5px;top:229.94px;width:179.9px;height:9.9px;background:rgba(95,102,212,.18)"></div>
<div class="cell" style="left:2112.5px;top:241.90px;width:179.9px;height:9.9px;background:rgba(88,105,213,.18)"></div>
<div class="cell" style="left:2112.5px;top:253.86px;width:179.9px;height:9.9px;background:rgba(80,107,214,.18)"></div>
<div class="cell" style="left:2112.5px;top:265.82px;width:179.9px;height:9.9px;background:rgba(73,109,214,.18)"></div>
<div class="cell" style="left:2112.5px;top:277.78px;width:179.9px;height:9.9px;background:radial-gradient(rgba(65,111,215,.95) 10%,rgba(65,111,215,.55))"></div>
<div class="cell" style="left:2112.5px;top:289.74px;width:179.9px;height:9.9px;background:radial-gradient(rgba(58,114,216,.95) 10%,rgba(58,114,216,.55))"></div>
<div class="cell" style="left:2112.5px;top:301.70px;width:179.9px;height:9.9px;background:radial-gradient(rgba(50,116,217,.95) 10%,rgba(50,116,217,.55))"></div>
<div class="tx" style="left:2202.49px;transform:translateX(-50%);top:315px;font-size:14px;line-height:14px;"><span style="letter-spacing:0.058px;">events</span></div>
</div>
<div class="gauge" aria-label="orders 6.32 msgs/s">
<div class="tx" style="left:2294.1px;width:179.9px;text-align:center;top:96px;font-size:23.4px;line-height:23.4px;color:rgb(60,112,215)"><span style="letter-spacing:0.867px;">6.32</span><span style="font-size:19.6px;margin-left:5.0px"><span style="letter-spacing:1.023px;">msgs/s</span></span></div>
<div class="cell" style="left:2294.3px;top:122.30px;width:179.9px;height:9.9px;background:rgba(163,82,204,.18)"></div>
<div class="cell" style="left:2294.3px;top:134.26px;width:179.9px;height:9.9px;background:rgba(155,84,205,.18)"></div>
<div class="cell" style="left:2294.3px;top:146.22px;width:179.9px;height:9.9px;background:rgba(148,87,206,.18)"></div>
<div class="cell" style="left:2294.3px;top:158.18px;width:179.9px;height:9.9px;background:rgba(140,89,207,.18)"></div>
<div class="cell" style="left:2294.3px;top:170.14px;width:179.9px;height:9.9px;background:rgba(133,91,207,.18)"></div>
<div class="cell" style="left:2294.3px;top:182.10px;width:179.9px;height:9.9px;background:rgba(125,93,208,.18)"></div>
<div class="cell" style="left:2294.3px;top:194.06px;width:179.9px;height:9.9px;background:rgba(118,96,209,.18)"></div>
<div class="cell" style="left:2294.3px;top:206.02px;width:179.9px;height:9.9px;background:rgba(110,98,210,.18)"></div>
<div class="cell" style="left:2294.3px;top:217.98px;width:179.9px;height:9.9px;background:rgba(103,100,211,.18)"></div>
<div class="cell" style="left:2294.3px;top:229.94px;width:179.9px;height:9.9px;background:rgba(95,102,212,.18)"></div>
<div class="cell" style="left:2294.3px;top:241.90px;width:179.9px;height:9.9px;background:rgba(88,105,213,.18)"></div>
<div class="cell" style="left:2294.3px;top:253.86px;width:179.9px;height:9.9px;background:rgba(80,107,214,.18)"></div>
<div class="cell" style="left:2294.3px;top:265.82px;width:179.9px;height:9.9px;background:rgba(73,109,214,.18)"></div>
<div class="cell" style="left:2294.3px;top:277.78px;width:179.9px;height:9.9px;background:rgba(65,111,215,.18)"></div>
<div class="cell" style="left:2294.3px;top:289.74px;width:179.9px;height:9.9px;background:rgba(58,114,216,.18)"></div>
<div class="cell" style="left:2294.3px;top:301.70px;width:179.9px;height:9.9px;background:radial-gradient(rgba(50,116,217,.95) 10%,rgba(50,116,217,.55))"></div>
<div class="tx" style="left:2384.27px;transform:translateX(-50%);top:315px;font-size:14px;line-height:14px;"><span style="letter-spacing:0.185px;">orders</span></div>
</div>
</section>
<section aria-label="Lag (msgs) by Topic">
<div class="panel" style="left:3px;top:350px;width:1547px;height:296px"></div>
<h2 class="ttl" style="left:776.50px;transform:translateX(-50%);top:360px;font-size:14px;line-height:14px;"><span style="letter-spacing:0.068px;">Lag (msgs) by Topic</span></h2>
<svg class="cv" style="left:4px;top:383px" width="1545" height="262" viewBox="4 383 1545 262"><g class="grid"><line x1="78" x2="1517" y1="417.5" y2="417.5"/><line x1="78" x2="1517" y1="461.5" y2="461.5"/><line x1="78" x2="1517" y1="505.5" y2="505.5"/><line x1="78" x2="1517" y1="550.5" y2="550.5"/><line x1="78" x2="1517" y1="594.5" y2="594.5"/></g><g class="grid v"><line y1="408" y2="598" x1="123.5" x2="123.5"/><line y1="408" y2="598" x1="219.5" x2="219.5"/><line y1="408" y2="598" x1="314.5" x2="314.5"/><line y1="408" y2="598" x1="410.5" x2="410.5"/><line y1="408" y2="598" x1="505.5" x2="505.5"/><line y1="408" y2="598" x1="601.5" x2="601.5"/><line y1="408" y2="598" x1="697.5" x2="697.5"/><line y1="408" y2="598" x1="792.5" x2="792.5"/><line y1="408" y2="598" x1="888.5" x2="888.5"/><line y1="408" y2="598" x1="984.5" x2="984.5"/><line y1="408" y2="598" x1="1079.5" x2="1079.5"/><line y1="408" y2="598" x1="1175.5" x2="1175.5"/><line y1="408" y2="598" x1="1271.5" x2="1271.5"/><line y1="408" y2="598" x1="1366.5" x2="1366.5"/><line y1="408" y2="598" x1="1462.5" x2="1462.5"/></g><path d="M82.6 441.5L106.4 441.6L130.2 441L154 441.1L177.7 440.4L201.5 440.5L225.3 439.9L249.1 440L272.9 439.4L296.7 439.5L320.5 438.8L344.3 438.9L368 438.3L391.8 438.4L415.6 437.8L439.4 437.9L463.2 437.2L487 437.3L510.8 436.7L534.5 436.8L558.3 436.2L582.1 436.2L605.9 435.6L629.7 435.7L653.5 435.1L677.3 435.2L701.1 434.6L724.8 434.7L748.6 434L772.4 434.1L796.2 433.5L820 433.6L843.8 433L867.6 433.1L891.3 432.4L915.1 432.5L938.9 431.9L962.7 432L986.5 431.4L1010.3 431.5L1034.1 430.8L1057.9 430.9L1081.6 430.3L1105.4 430.4L1129.2 429.8L1153 429.9L1176.8 429.2L1200.6 429.3L1224.4 428.7L1248.1 428.8L1271.9 428.2L1295.7 428.2L1319.5 427.6L1343.3 427.7L1367.1 427.1L1390.9 427.2L1414.7 426.6L1438.4 426.7L1462.2 426L1486 426.1L1509.8 425.5L1509.8 594.6L82.6 594.6Z" fill="#56a64b" fill-opacity="0.1"/><path d="M82.6 441.5L106.4 441.6L130.2 441L154 441.1L177.7 440.4L201.5 440.5L225.3 439.9L249.1 440L272.9 439.4L296.7 439.5L320.5 438.8L344.3 438.9L368 438.3L391.8 438.4L415.6 437.8L439.4 437.9L463.2 437.2L487 437.3L510.8 436.7L534.5 436.8L558.3 436.2L582.1 436.2L605.9 435.6L629.7 435.7L653.5 435.1L677.3 435.2L701.1 434.6L724.8 434.7L748.6 434L772.4 434.1L796.2 433.5L820 433.6L843.8 433L867.6 433.1L891.3 432.4L915.1 432.5L938.9 431.9L962.7 432L986.5 431.4L1010.3 431.5L1034.1 430.8L1057.9 430.9L1081.6 430.3L1105.4 430.4L1129.2 429.8L1153 429.9L1176.8 429.2L1200.6 429.3L1224.4 428.7L1248.1 428.8L1271.9 428.2L1295.7 428.2L1319.5 427.6L1343.3 427.7L1367.1 427.1L1390.9 427.2L1414.7 426.6L1438.4 426.7L1462.2 426L1486 426.1L1509.8 425.5" fill="none" stroke="#56a64b" stroke-width="1"/><path d="M82.6 594.6L1509.8 594.6" fill="none" stroke="#c4314b" stroke-width="1.2"/></svg>
<div class="tx" style="right:2413.40px;top:410px;font-size:12px;line-height:12px;"><span style="letter-spacing:0.158px;">20000 msg</span></div>
<div class="tx" style="right:2413.40px;top:454px;font-size:12px;line-height:12px;"><span style="letter-spacing:0.158px;">15000 msg</span></div>
<div class="tx" style="right:2413.40px;top:498px;font-size:12px;line-height:12px;"><span style="letter-spacing:0.158px;">10000 msg</span></div>
<div class="tx" style="right:2413.40px;top:543px;font-size:12px;line-height:12px;"><span style="letter-spacing:0.187px;">5000 msg</span></div>
<div class="tx" style="right:2413.40px;top:587px;font-size:12px;line-height:12px;"><span style="letter-spacing:0.183px;">0 msg</span></div>
<div class="tx" style="left:122.50px;transform:translateX(-50%);top:602px;font-size:12px;line-height:12px;"><span style="letter-spacing:0.010px;">17:13:00</span></div>
<div class="tx" style="left:218.14px;transform:translateX(-50%);top:602px;font-size:12px;line-height:12px;"><span style="letter-spacing:0.010px;">17:14:00</span></div>
<div class="tx" style="left:313.78px;transform:translateX(-50%);top:602px;font-size:12px;line-height:12px;"><span style="letter-spacing:0.010px;">17:15:00</span></div>
<div class="tx" style="left:409.42px;transform:translateX(-50%);top:602px;font-size:12px;line-height:12px;"><span style="letter-spacing:0.010px;">17:16:00</span></div>
<div class="tx" style="left:505.06px;transform:translateX(-50%);top:602px;font-size:12px;line-height:12px;"><span style="letter-spacing:0.010px;">17:17:00</span></div>
<div class="tx" style="left:600.70px;transform:translateX(-50%);top:602px;font-size:12px;line-height:12px;"><span style="letter-spacing:0.010px;">17:18:00</span></div>
<div class="tx" style="left:696.34px;transform:translateX(-50%);top:602px;font-size:12px;line-height:12px;"><span style="letter-spacing:0.010px;">17:19:00</span></div>
<div class="tx" style="left:791.98px;transform:translateX(-50%);top:602px;font-size:12px;line-height:12px;"><span style="letter-spacing:0.010px;">17:20:00</span></div>
<div class="tx" style="left:887.62px;transform:translateX(-50%);top:602px;font-size:12px;line-height:12px;"><span style="letter-spacing:0.010px;">17:21:00</span></div>
<div class="tx" style="left:983.26px;transform:translateX(-50%);top:602px;font-size:12px;line-height:12px;"><span style="letter-spacing:0.010px;">17:22:00</span></div>
<div class="tx" style="left:1078.90px;transform:translateX(-50%);top:602px;font-size:12px;line-height:12px;"><span style="letter-spacing:0.010px;">17:23:00</span></div>
<div class="tx" style="left:1174.54px;transform:translateX(-50%);top:602px;font-size:12px;line-height:12px;"><span style="letter-spacing:0.010px;">17:24:00</span></div>
<div class="tx" style="left:1270.18px;transform:translateX(-50%);top:602px;font-size:12px;line-height:12px;"><span style="letter-spacing:0.010px;">17:25:00</span></div>
<div class="tx" style="left:1365.82px;transform:translateX(-50%);top:602px;font-size:12px;line-height:12px;"><span style="letter-spacing:0.010px;">17:26:00</span></div>
<div class="tx" style="left:1461.46px;transform:translateX(-50%);top:602px;font-size:12px;line-height:12px;"><span style="letter-spacing:0.010px;">17:27:00</span></div>
<div class="lg" style="left:28px;top:622px"><i style="background:#56a64b"></i><b><span style="letter-spacing:-0.027px;">events</span></b><i style="background:#e0b400"></i><b><span style="letter-spacing:0.321px;">products</span></b><i style="background:#5794f2"></i><b><span style="letter-spacing:0.007px;">events</span></b><i style="background:#fa6400"></i><b><span style="letter-spacing:0.047px;">orders</span></b><i style="background:#e02f44"></i><b><span style="letter-spacing:0.321px;">products</span></b></div>
</section>
<section aria-label="Most Lagged Topics">
<div class="panel" style="left:1558px;top:350px;width:925px;height:296px"></div>
<h2 class="ttl" style="left:2020.50px;transform:translateX(-50%);top:360px;font-size:14px;line-height:14px;"><span style="letter-spacing:0.113px;">Most Lagged Topics</span></h2>
<div class="tx" style="left:1566.90px;top:394px;font-size:12px;line-height:12px;"><span style="letter-spacing:0.040px;">events</span></div>
<div class="bar" style="left:1567px;top:410.0px;width:756.7px;height:21.8px;border-radius:0 3px 3px 0;background:linear-gradient(90deg,rgba(173,3,23,0.02),#ad0317)"></div>
<div class="tx" style="left:1566.90px;top:445px;font-size:12px;line-height:12px;"><span style="letter-spacing:0.164px;">orders</span></div>
<div class="bar" style="left:1567.7px;top:461.0px;width:753px;height:22px;background:#ececec"></div>
<div class="tx" style="left:1566.90px;top:496px;font-size:12px;line-height:12px;"><span style="letter-spacing:0.321px;">products</span></div>
<div class="bar" style="left:1567.7px;top:512.0px;width:753px;height:22px;background:#ececec"></div>
<div class="tx" style="left:1566.90px;top:547px;font-size:12px;line-height:12px;"><span style="letter-spacing:0.321px;">products</span></div>
<div class="bar" style="left:1567.7px;top:563.0px;width:753px;height:22px;background:#ececec"></div>
<div class="tx" style="left:1566.90px;top:598px;font-size:12px;line-height:12px;"><span style="letter-spacing:0.040px;">events</span></div>
<div class="bar" style="left:1567.7px;top:614.0px;width:753px;height:22px;background:#ececec"></div>
<div class="tx" style="right:22.199999999999818px;top:409px;font-size:23px;line-height:23px;color:#ad0317"><span style="letter-spacing:-0.341px;">1.28</span><span style="font-size:18px;margin-left:5.6px"><span style="letter-spacing:0.142px;">hour</span></span></div>
</section>
<section aria-label="Lag (msgs) by Consumer">
<div class="panel" style="left:3px;top:654px;width:1547px;height:296px"></div>
<h2 class="ttl" style="left:776.50px;transform:translateX(-50%);top:664px;font-size:14px;line-height:14px;"><span style="letter-spacing:-0.035px;">Lag (msgs) by Consumer</span></h2>
<svg class="cv" style="left:4px;top:687px" width="1545" height="262" viewBox="4 687 1545 262"><g class="grid"><line x1="78" x2="1517" y1="721.5" y2="721.5"/><line x1="78" x2="1517" y1="765.5" y2="765.5"/><line x1="78" x2="1517" y1="809.5" y2="809.5"/><line x1="78" x2="1517" y1="854.5" y2="854.5"/><line x1="78" x2="1517" y1="898.5" y2="898.5"/></g><g class="grid v"><line y1="712" y2="902" x1="122.5" x2="122.5"/><line y1="712" y2="902" x1="217.5" x2="217.5"/><line y1="712" y2="902" x1="313.5" x2="313.5"/><line y1="712" y2="902" x1="409.5" x2="409.5"/><line y1="712" y2="902" x1="504.5" x2="504.5"/><line y1="712" y2="902" x1="600.5" x2="600.5"/><line y1="712" y2="902" x1="696.5" x2="696.5"/><line y1="712" y2="902" x1="791.5" x2="791.5"/><line y1="712" y2="902" x1="887.5" x2="887.5"/><line y1="712" y2="902" x1="983.5" x2="983.5"/><line y1="712" y2="902" x1="1078.5" x2="1078.5"/><line y1="712" y2="902" x1="1174.5" x2="1174.5"/><line y1="712" y2="902" x1="1269.5" x2="1269.5"/><line y1="712" y2="902" x1="1365.5" x2="1365.5"/><line y1="712" y2="902" x1="1461.5" x2="1461.5"/></g><path d="M82.6 745.5L106.4 745.6L130.2 745L154 745.1L177.7 744.4L201.5 744.5L225.3 743.9L249.1 744L272.9 743.4L296.7 743.5L320.5 742.8L344.3 742.9L368 742.3L391.8 742.4L415.6 741.8L439.4 741.9L463.2 741.2L487 741.3L510.8 740.7L534.5 740.8L558.3 740.2L582.1 740.2L605.9 739.6L629.7 739.7L653.5 739.1L677.3 739.2L701.1 738.6L724.8 738.6L748.6 738L772.4 738.1L796.2 737.5L820 737.6L843.8 737L867.6 737.1L891.3 736.4L915.1 736.5L938.9 735.9L962.7 736L986.5 735.4L1010.3 735.5L1034.1 734.8L1057.9 734.9L1081.6 734.3L1105.4 734.4L1129.2 733.8L1153 733.9L1176.8 733.2L1200.6 733.3L1224.4 732.7L1248.1 732.8L1271.9 732.2L1295.7 732.2L1319.5 731.6L1343.3 731.7L1367.1 731.1L1390.9 731.2L1414.7 730.6L1438.4 730.6L1462.2 730L1486 730.1L1509.8 729.5L1509.8 898.6L82.6 898.6Z" fill="#56a64b" fill-opacity="0.1"/><path d="M82.6 745.5L106.4 745.6L130.2 745L154 745.1L177.7 744.4L201.5 744.5L225.3 743.9L249.1 744L272.9 743.4L296.7 743.5L320.5 742.8L344.3 742.9L368 742.3L391.8 742.4L415.6 741.8L439.4 741.9L463.2 741.2L487 741.3L510.8 740.7L534.5 740.8L558.3 740.2L582.1 740.2L605.9 739.6L629.7 739.7L653.5 739.1L677.3 739.2L701.1 738.6L724.8 738.6L748.6 738L772.4 738.1L796.2 737.5L820 737.6L843.8 737L867.6 737.1L891.3 736.4L915.1 736.5L938.9 735.9L962.7 736L986.5 735.4L1010.3 735.5L1034.1 734.8L1057.9 734.9L1081.6 734.3L1105.4 734.4L1129.2 733.8L1153 733.9L1176.8 733.2L1200.6 733.3L1224.4 732.7L1248.1 732.8L1271.9 732.2L1295.7 732.2L1319.5 731.6L1343.3 731.7L1367.1 731.1L1390.9 731.2L1414.7 730.6L1438.4 730.6L1462.2 730L1486 730.1L1509.8 729.5" fill="none" stroke="#56a64b" stroke-width="1"/><path d="M82.6 898.6L1509.8 898.6" fill="none" stroke="#a45cc4" stroke-width="1.2"/></svg>
<div class="tx" style="right:2413.40px;top:714px;font-size:12px;line-height:12px;"><span style="letter-spacing:0.158px;">20000 msg</span></div>
<div class="tx" style="right:2413.40px;top:758px;font-size:12px;line-height:12px;"><span style="letter-spacing:0.158px;">15000 msg</span></div>
<div class="tx" style="right:2413.40px;top:802px;font-size:12px;line-height:12px;"><span style="letter-spacing:0.158px;">10000 msg</span></div>
<div class="tx" style="right:2413.40px;top:847px;font-size:12px;line-height:12px;"><span style="letter-spacing:0.187px;">5000 msg</span></div>
<div class="tx" style="right:2413.40px;top:891px;font-size:12px;line-height:12px;"><span style="letter-spacing:0.183px;">0 msg</span></div>
<div class="tx" style="left:121.40px;transform:translateX(-50%);top:906px;font-size:12px;line-height:12px;"><span style="letter-spacing:0.010px;">17:13:00</span></div>
<div class="tx" style="left:217.04px;transform:translateX(-50%);top:906px;font-size:12px;line-height:12px;"><span style="letter-spacing:0.010px;">17:14:00</span></div>
<div class="tx" style="left:312.68px;transform:translateX(-50%);top:906px;font-size:12px;line-height:12px;"><span style="letter-spacing:0.010px;">17:15:00</span></div>
<div class="tx" style="left:408.32px;transform:translateX(-50%);top:906px;font-size:12px;line-height:12px;"><span style="letter-spacing:0.010px;">17:16:00</span></div>
<div class="tx" style="left:503.96px;transform:translateX(-50%);top:906px;font-size:12px;line-height:12px;"><span style="letter-spacing:0.010px;">17:17:00</span></div>
<div class="tx" style="left:599.60px;transform:translateX(-50%);top:906px;font-size:12px;line-height:12px;"><span style="letter-spacing:0.010px;">17:18:00</span></div>
<div class="tx" style="left:695.24px;transform:translateX(-50%);top:906px;font-size:12px;line-height:12px;"><span style="letter-spacing:0.010px;">17:19:00</span></div>
<div class="tx" style="left:790.88px;transform:translateX(-50%);top:906px;font-size:12px;line-height:12px;"><span style="letter-spacing:0.010px;">17:20:00</span></div>
<div class="tx" style="left:886.52px;transform:translateX(-50%);top:906px;font-size:12px;line-height:12px;"><span style="letter-spacing:0.010px;">17:21:00</span></div>
<div class="tx" style="left:982.16px;transform:translateX(-50%);top:906px;font-size:12px;line-height:12px;"><span style="letter-spacing:0.010px;">17:22:00</span></div>
<div class="tx" style="left:1077.80px;transform:translateX(-50%);top:906px;font-size:12px;line-height:12px;"><span style="letter-spacing:0.010px;">17:23:00</span></div>
<div class="tx" style="left:1173.44px;transform:translateX(-50%);top:906px;font-size:12px;line-height:12px;"><span style="letter-spacing:0.010px;">17:24:00</span></div>
<div class="tx" style="left:1269.08px;transform:translateX(-50%);top:906px;font-size:12px;line-height:12px;"><span style="letter-spacing:0.010px;">17:25:00</span></div>
<div class="tx" style="left:1364.72px;transform:translateX(-50%);top:906px;font-size:12px;line-height:12px;"><span style="letter-spacing:0.010px;">17:26:00</span></div>
<div class="tx" style="left:1460.36px;transform:translateX(-50%);top:906px;font-size:12px;line-height:12px;"><span style="letter-spacing:0.010px;">17:27:00</span></div>
<div class="lg" style="left:28px;top:926px"><i style="background:#56a64b"></i><b><span style="letter-spacing:0.103px;">inventory-customer-green</span></b><i style="background:#e0b400"></i><b><span style="letter-spacing:0.041px;">search-service</span></b><i style="background:#5794f2"></i><b><span style="letter-spacing:0.117px;">inventory-customer-blue</span></b><i style="background:#fa6400"></i><b><span style="letter-spacing:0.117px;">inventory-customer-blue</span></b><i style="background:#e02f44"></i><b><span style="letter-spacing:0.069px;">search-service</span></b><i style="background:#3274d9"></i><b><span style="letter-spacing:0.032px;">email-service</span></b><i style="background:#a352cc"></i><b><span style="letter-spacing:0.070px;">email-service</span></b></div>
</section>
<section aria-label="Lag (msgs) by Topic">
<div class="panel" style="left:1558px;top:654px;width:925px;height:296px"></div>
<h2 class="ttl" style="left:2020.50px;transform:translateX(-50%);top:664px;font-size:14px;line-height:14px;"><span style="letter-spacing:0.068px;">Lag (msgs) by Topic</span></h2>
<div class="stat" style="top:687.0px;height:34.5px;background:linear-gradient(120deg,hsl(0.9,74%,63.6%),hsl(344.9,74%,56.6%))"></div>
<div class="tx" style="left:1566.90px;top:699px;font-size:11px;line-height:11px;color:#fff;"><span style="letter-spacing:0.161px;">inventory-customer-green</span></div>
<div class="tx" style="right:11.599999999999909px;top:696px;font-size:15.6px;line-height:15.6px;-webkit-text-stroke:0.85px #fff;color:#fff"><span style="letter-spacing:-0.040px;">19.1</span><span style="font-size:14.2px;margin-left:5.8px"><span style="letter-spacing:0.331px;">K</span></span></div>
<div class="stat" style="top:724.9px;height:34.5px;background:linear-gradient(120deg,hsl(120.7,37.8%,57.7%),hsl(104.7,37.8%,50.7%))"></div>
<div class="tx" style="left:1566.90px;top:737px;font-size:11px;line-height:11px;color:#fff;"><span style="letter-spacing:0.200px;">email-service</span></div>
<div class="tx" style="right:11.80px;top:734px;font-size:15.6px;line-height:15.6px;color:#fff;-webkit-text-stroke:0.85px #fff;"><span>0</span></div>
<div class="stat" style="top:762.8px;height:34.5px;background:linear-gradient(120deg,hsl(120.7,37.8%,57.7%),hsl(104.7,37.8%,50.7%))"></div>
<div class="tx" style="left:1566.90px;top:775px;font-size:11px;line-height:11px;color:#fff;"><span style="letter-spacing:0.191px;">inventory-customer-blue</span></div>
<div class="tx" style="right:11.80px;top:771px;font-size:15.6px;line-height:15.6px;color:#fff;-webkit-text-stroke:0.85px #fff;"><span>0</span></div>
<div class="stat" style="top:800.7px;height:34.5px;background:linear-gradient(120deg,hsl(120.7,37.8%,57.7%),hsl(104.7,37.8%,50.7%))"></div>
<div class="tx" style="left:1566.90px;top:812px;font-size:11px;line-height:11px;color:#fff;"><span style="letter-spacing:0.148px;">search-service</span></div>
<div class="tx" style="right:11.80px;top:809px;font-size:15.6px;line-height:15.6px;color:#fff;-webkit-text-stroke:0.85px #fff;"><span>0</span></div>
<div class="stat" style="top:838.6px;height:34.5px;background:linear-gradient(120deg,hsl(120.7,37.8%,57.7%),hsl(104.7,37.8%,50.7%))"></div>
<div class="tx" style="left:1566.90px;top:850px;font-size:11px;line-height:11px;color:#fff;"><span style="letter-spacing:0.148px;">search-service</span></div>
<div class="tx" style="right:11.80px;top:847px;font-size:15.6px;line-height:15.6px;color:#fff;-webkit-text-stroke:0.85px #fff;"><span>0</span></div>
<div class="stat" style="top:876.5px;height:34.5px;background:linear-gradient(120deg,hsl(120.7,37.8%,57.7%),hsl(104.7,37.8%,50.7%))"></div>
<div class="tx" style="left:1566.90px;top:888px;font-size:11px;line-height:11px;color:#fff;"><span style="letter-spacing:0.200px;">email-service</span></div>
<div class="tx" style="right:11.80px;top:885px;font-size:15.6px;line-height:15.6px;color:#fff;-webkit-text-stroke:0.85px #fff;"><span>0</span></div>
<div class="stat" style="top:914.4px;height:34.5px;background:linear-gradient(120deg,hsl(120.7,37.8%,57.7%),hsl(104.7,37.8%,50.7%))"></div>
<div class="tx" style="left:1566.90px;top:926px;font-size:11px;line-height:11px;color:#fff;"><span style="letter-spacing:0.191px;">inventory-customer-blue</span></div>
<div class="tx" style="right:11.80px;top:923px;font-size:15.6px;line-height:15.6px;color:#fff;-webkit-text-stroke:0.85px #fff;"><span>0</span></div>
</section>
<section aria-label="Produce Op Latency by Broker">
<div class="panel" style="left:3px;top:958px;width:1547px;height:296px"></div>
<h2 class="ttl" style="left:776.50px;transform:translateX(-50%);top:968px;font-size:14px;line-height:14px;"><span style="letter-spacing:-0.137px;">Produce Op Latency by Broker</span></h2>
<svg class="cv" style="left:4px;top:991px" width="1545" height="205" viewBox="4 991 1545 205">
<g class="grid"><line x1="44" x2="1516" y1="1041.5" y2="1041.5"/><line x1="44" x2="1516" y1="1091.5" y2="1091.5"/><line x1="44" x2="1516" y1="1142.5" y2="1142.5"/><line x1="44" x2="1516" y1="1192.5" y2="1192.5"/></g>
<g class="grid v"><line y1="1016" y2="1196" x1="89.5" x2="89.5"/><line y1="1016" y2="1196" x1="187.5" x2="187.5"/><line y1="1016" y2="1196" x1="285.5" x2="285.5"/><line y1="1016" y2="1196" x1="383.5" x2="383.5"/><line y1="1016" y2="1196" x1="481.5" x2="481.5"/><line y1="1016" y2="1196" x1="579.5" x2="579.5"/><line y1="1016" y2="1196" x1="677.5" x2="677.5"/><line y1="1016" y2="1196" x1="774.5" x2="774.5"/><line y1="1016" y2="1196" x1="872.5" x2="872.5"/><line y1="1016" y2="1196" x1="970.5" x2="970.5"/><line y1="1016" y2="1196" x1="1068.5" x2="1068.5"/><line y1="1016" y2="1196" x1="1166.5" x2="1166.5"/><line y1="1016" y2="1196" x1="1264.5" x2="1264.5"/><line y1="1016" y2="1196" x1="1362.5" x2="1362.5"/><line y1="1016" y2="1196" x1="1459.5" x2="1459.5"/></g>
<path d="M48.1 1165.7L49.1 1164.1L50.1 1162.5L51.1 1160.8L52.1 1159.1L53.1 1157.6L54.1 1156.1L55.1 1154.9L56.1 1153.7L57.1 1152.6L58.1 1151.4L59.1 1150.3L60.1 1149.4L61.1 1148.6L62.1 1148L63.1 1147.7L64.1 1147.7L65.1 1147.6L66.1 1147.6L67.1 1147.6L68.1 1147.6L69.1 1147.6L70.1 1147.6L71.1 1147.5L72.1 1147.5L73.1 1147.5L74.1 1147.5L75.1 1147.5L76.1 1147.5L77.1 1147.5L78.1 1147.5L79.1 1147.5L80.1 1147.5L81.1 1147.5L82.1 1147.5L83.1 1147.5L84.1 1147.5L85.1 1147.5L86.1 1147.5L87.1 1147.5L88.1 1147.5L89.1 1147.5L90.1 1147.4L91.1 1147.4L92.1 1147.4L93.1 1147.4L94.1 1147.4L95.1 1147.4L96.1 1147.4L97.1 1147.4L98.1 1147.4L99.1 1147.4L100.1 1147.4L101.1 1147.4L102.1 1147.4L103.1 1147.4L104.1 1147.4L105.1 1147.4L106.1 1147.4L107.1 1147.4L108.1 1147.4L109.1 1147.4L110.1 1147.4L111.1 1147.4L112.1 1147.4L113.1 1147.4L114.1 1147.4L115.1 1147.4L116.1 1147.4L117.1 1147.4L118.1 1147.4L119.1 1147.4L120.1 1147.4L121.1 1147.4L122.1 1147.4L123.1 1147.4L124.1 1147.4L125.1 1147.3L126.1 1147.3L127.1 1147.3L128.1 1147.3L129.1 1147.3L130.1 1147.3L131.1 1147.3L132.1 1147.3L133.1 1147.3L134.1 1147.3L135.1 1147.3L136.1 1147.3L137.1 1147.3L138.1 1147.3L139.1 1147.3L140.1 1147.3L141.1 1147.4L142.1 1147.8L143.1 1148.4L144.1 1149.1L145.1 1150L146.1 1150.8L147.1 1151.5L148.1 1152.2L149.1 1153.1L150.1 1153.9L151.1 1154.9L152.1 1155.8L153.1 1156.8L154.1 1157.7L155.1 1158.6L156.1 1159.3L157.1 1160L158.1 1160.6L159.1 1161L160.1 1161.2L161.1 1161.2L162.1 1161.3L163.1 1161.3L164.1 1161.4L165.1 1161.4L166.1 1161.4L167.1 1161.4L168.1 1161.5L169.1 1161.5L170.1 1161.5L171.1 1161.5L172.1 1161.5L173.1 1161.5L174.1 1161.5L175.1 1161.6L176.1 1161.6L177.1 1161.6L178.1 1161.6L179.1 1161.6L180.1 1161.6L181.1 1161.6L182.1 1161.6L183.1 1161.6L184.1 1161.6L185.1 1161.6L186.1 1161.6L187.1 1161.6L188.1 1161.6L189.1 1161.6L190.1 1161.7L191.1 1161.9L192.1 1162.3L193.1 1162.8L194.1 1163.3L195.1 1163.8L196.1 1164.3L197.1 1164.8L198.1 1165.3L199.1 1165.9L200.1 1166.6L201.1 1167.3L202.1 1168L203.1 1168.7L204.1 1169.3L205.1 1169.9L206.1 1170.5L207.1 1170.9L208.1 1171.1L209.1 1171.3L210.1 1171.3L211.1 1171.3L212.1 1171.4L213.1 1171.4L214.1 1171.4L215.1 1171.5L216.1 1171.5L217.1 1171.5L218.1 1171.5L219.1 1171.5L220.1 1171.6L221.1 1171.6L222.1 1171.6L223.1 1171.6L224.1 1171.6L225.1 1171.6L226.1 1171.6L227.1 1171.6L228.1 1171.6L229.1 1171.5L230.1 1171.5L231.1 1171.5L232.1 1171.5L233.1 1171.5L234.1 1171.4L235.1 1171.4L236.1 1171.3L237.1 1171.3L238.1 1171.3L239.1 1171L240.1 1170.4L241.1 1169.4L242.1 1168.2L243.1 1166.8L244.1 1165.4L245.1 1164.1L246.1 1162.8L247.1 1161.4L248.1 1159.8L249.1 1158.1L250.1 1156.3L251.1 1154.4L252.1 1152.6L253.1 1150.8L254.1 1149.2L255.1 1147.7L256.1 1146.4L257.1 1145.4L258.1 1144.7L259.1 1144.3L260.1 1144.2L261.1 1144.1L262.1 1144L263.1 1143.9L264.1 1143.9L265.1 1143.8L266.1 1143.7L267.1 1143.7L268.1 1143.6L269.1 1143.6L270.1 1143.5L271.1 1143.5L272.1 1143.5L273.1 1143.5L274.1 1143.5L275.1 1143.5L276.1 1143.5L277.1 1143.5L278.1 1143.5L279.1 1143.5L280.1 1143.5L281.1 1143.5L282.1 1143.5L283.1 1143.5L284.1 1143.5L285.1 1143.5L286.1 1143.5L287.1 1143.8L288.1 1144.5L289.1 1145.5L290.1 1146.7L291.1 1148L292.1 1149.3L293.1 1150.5L294.1 1151.9L295.1 1153.7L296.1 1155.6L297.1 1157.6L298.1 1159.7L299.1 1161.9L300.1 1164L301.1 1166.1L302.1 1168L303.1 1169.8L304.1 1171.3L305.1 1172.6L306.1 1173.5L307.1 1174L308.1 1174.1L309.1 1174.2L310.1 1174.2L311.1 1174.3L312.1 1174.3L313.1 1174.4L314.1 1174.4L315.1 1174.5L316.1 1174.5L317.1 1174.5L318.1 1174.5L319.1 1174.6L320.1 1174.6L321.1 1174.6L322.1 1174.6L323.1 1174.6L324.1 1174.6L325.1 1174.6L326.1 1174.6L327.1 1174.6L328.1 1174.5L329.1 1174.5L330.1 1174.5L331.1 1174.4L332.1 1174.4L333.1 1174.4L334.1 1174.3L335.1 1174.3L336.1 1174.1L337.1 1173.6L338.1 1172.8L339.1 1171.9L340.1 1170.9L341.1 1169.8L342.1 1168.8L343.1 1167.9L344.1 1166.9L345.1 1165.8L346.1 1164.6L347.1 1163.3L348.1 1161.9L349.1 1160.6L350.1 1159.3L351.1 1158.1L352.1 1157L353.1 1156L354.1 1155.2L355.1 1154.6L356.1 1154.2L357.1 1154L358.1 1154L359.1 1153.9L360.1 1153.9L361.1 1153.9L362.1 1153.8L363.1 1153.8L364.1 1153.8L365.1 1153.8L366.1 1153.7L367.1 1153.7L368.1 1153.7L369.1 1153.7L370.1 1153.7L371.1 1153.7L372.1 1153.7L373.1 1153.7L374.1 1153.7L375.1 1153.7L376.1 1153.7L377.1 1153.8L378.1 1153.8L379.1 1153.8L380.1 1153.8L381.1 1153.9L382.1 1153.9L383.1 1154L384.1 1154L385.1 1154.1L386.1 1154.6L387.1 1155.3L388.1 1156.3L389.1 1157.4L390.1 1158.6L391.1 1159.7L392.1 1160.9L393.1 1162.2L394.1 1163.6L395.1 1165.2L396.1 1166.7L397.1 1168.3L398.1 1169.8L399.1 1171.2L400.1 1172.5L401.1 1173.8L402.1 1175.2L403.1 1176.5L404.1 1177.8L405.1 1178.7L406.1 1179.3L407.1 1179.5L408.1 1179.5L409.1 1179.5L410.1 1179.5L411.1 1179.5L412.1 1179.6L413.1 1179.6L414.1 1179.6L415.1 1179.6L416.1 1179.6L417.1 1179.6L418.1 1179.6L419.1 1179.6L420.1 1179.6L421.1 1179.6L422.1 1179.6L423.1 1179.6L424.1 1179.6L425.1 1179.6L426.1 1179.6L427.1 1179.6L428.1 1179.6L429.1 1179.5L430.1 1179.5L431.1 1179.5L432.1 1179.5L433.1 1179.5L434.1 1179.4L435.1 1179.3L436.1 1179.1L437.1 1178.8L438.1 1178.5L439.1 1178.2L440.1 1178L441.1 1177.7L442.1 1177.3L443.1 1176.9L444.1 1176.5L445.1 1176L446.1 1175.6L447.1 1175.2L448.1 1174.9L449.1 1174.7L450.1 1174.6L451.1 1174.6L452.1 1174.5L453.1 1174.5L454.1 1174.5L455.1 1174.4L456.1 1174.4L457.1 1174.4L458.1 1174.4L459.1 1174.3L460.1 1174.3L461.1 1174.3L462.1 1174.3L463.1 1174.3L464.1 1174.3L465.1 1174.3L466.1 1174.3L467.1 1174.3L468.1 1174.3L469.1 1174.3L470.1 1174.3L471.1 1174.3L472.1 1174.3L473.1 1174.3L474.1 1174.3L475.1 1174.3L476.1 1174.3L477.1 1174.3L478.1 1174.3L479.1 1174.3L480.1 1174.3L481.1 1174.3L482.1 1174.3L483.1 1174.3L484.1 1174.4L485.1 1174.6L486.1 1174.8L487.1 1175L488.1 1175.3L489.1 1175.5L490.1 1175.7L491.1 1175.9L492.1 1176.1L493.1 1176.4L494.1 1176.6L495.1 1176.8L496.1 1177.1L497.1 1177.3L498.1 1177.5L499.1 1177.7L500.1 1177.9L501.1 1178.1L502.1 1178.2L503.1 1178.3L504.1 1178.3L505.1 1178.3L506.1 1178.3L507.1 1178.3L508.1 1178.4L509.1 1178.4L510.1 1178.4L511.1 1178.4L512.1 1178.4L513.1 1178.4L514.1 1178.5L515.1 1178.5L516.1 1178.5L517.1 1178.5L518.1 1178.5L519.1 1178.5L520.1 1178.5L521.1 1178.5L522.1 1178.5L523.1 1178.5L524.1 1178.5L525.1 1178.5L526.1 1178.6L527.1 1178.6L528.1 1178.6L529.1 1178.6L530.1 1178.6L531.1 1178.6L532.1 1178.6L533.1 1178.6L534.1 1178.6L535.1 1178.6L536.1 1178.6L537.1 1178.6L538.1 1178.6L539.1 1178.7L540.1 1178.7L541.1 1178.7L542.1 1178.7L543.1 1178.7L544.1 1178.7L545.1 1178.7L546.1 1178.7L547.1 1178.7L548.1 1178.7L549.1 1178.8L550.1 1178.8L551.1 1178.8L552.1 1178.8L553.1 1178.8L554.1 1178.8L555.1 1178.8L556.1 1178.8L557.1 1178.8L558.1 1178.8L559.1 1178.8L560.1 1178.9L561.1 1178.9L562.1 1178.9L563.1 1178.9L564.1 1178.9L565.1 1178.9L566.1 1178.9L567.1 1178.9L568.1 1178.9L569.1 1178.9L570.1 1178.9L571.1 1178.9L572.1 1178.9L573.1 1178.9L574.1 1178.9L575.1 1178.9L576.1 1178.9L577.1 1178.9L578.1 1178.9L579.1 1178.9L580.1 1178.9L581.1 1178.9L582.1 1178.9L583.1 1178.9L584.1 1178.8L585.1 1178.8L586.1 1178.8L587.1 1178.7L588.1 1178.7L589.1 1178.6L590.1 1178.6L591.1 1178.6L592.1 1178.5L593.1 1178.5L594.1 1178.4L595.1 1178.4L596.1 1178.4L597.1 1178.3L598.1 1178.3L599.1 1178.3L600.1 1178.3L601.1 1178.3L602.1 1178.3L603.1 1178.3L604.1 1178.3L605.1 1178.3L606.1 1178.3L607.1 1178.3L608.1 1178.3L609.1 1178.3L610.1 1178.3L611.1 1178.3L612.1 1178.3L613.1 1178.3L614.1 1178.3L615.1 1178.3L616.1 1178.3L617.1 1178.3L618.1 1178.3L619.1 1178.3L620.1 1178.3L621.1 1178.3L622.1 1178.3L623.1 1178.3L624.1 1178.3L625.1 1178.3L626.1 1178.3L627.1 1178.3L628.1 1178.3L629.1 1178.3L630.1 1178.1L631.1 1177.6L632.1 1176.8L633.1 1175.9L634.1 1175L635.1 1173.8L636.1 1172.3L637.1 1170.4L638.1 1168.3L639.1 1166.2L640.1 1164.1L641.1 1162.2L642.1 1160.5L643.1 1159.1L644.1 1157.6L645.1 1156.2L646.1 1154.7L647.1 1153.5L648.1 1152.3L649.1 1151.5L650.1 1150.9L651.1 1150.7L652.1 1150.6L653.1 1150.5L654.1 1150.4L655.1 1150.3L656.1 1150.3L657.1 1150.2L658.1 1150.2L659.1 1150.1L660.1 1150.1L661.1 1150.1L662.1 1150.1L663.1 1150L664.1 1150L665.1 1150L666.1 1150L667.1 1150L668.1 1150L669.1 1150L670.1 1150L671.1 1149.9L672.1 1149.9L673.1 1149.9L674.1 1149.9L675.1 1149.9L676.1 1149.9L677.1 1149.9L678.1 1149.9L679.1 1149.6L680.1 1148.6L681.1 1147L682.1 1144.9L683.1 1142.6L684.1 1140.3L685.1 1137.9L686.1 1135L687.1 1131.7L688.1 1128.1L689.1 1124.4L690.1 1120.8L691.1 1117.5L692.1 1114.5L693.1 1112.1L694.1 1109.5L695.1 1107L696.1 1104.6L697.1 1102.4L698.1 1100.7L699.1 1099.4L700.1 1098.9L701.1 1098.8L702.1 1098.7L703.1 1098.6L704.1 1098.6L705.1 1098.5L706.1 1098.5L707.1 1098.4L708.1 1098.4L709.1 1098.4L710.1 1098.4L711.1 1098.3L712.1 1098.3L713.1 1098.3L714.1 1098.3L715.1 1098.3L716.1 1098.3L717.1 1098.4L718.1 1098.4L719.1 1098.4L720.1 1098.4L721.1 1098.4L722.1 1098.4L723.1 1098.4L724.1 1098.4L725.1 1098.5L726.1 1098.5L727.1 1098.5L728.1 1099.2L729.1 1100.7L730.1 1102.8L731.1 1105.3L732.1 1107.9L733.1 1110.4L734.1 1113.4L735.1 1116.8L736.1 1120.7L737.1 1124.7L738.1 1128.7L739.1 1132.7L740.1 1136.3L741.1 1139.6L742.1 1142.6L743.1 1145.9L744.1 1149.1L745.1 1152.2L746.1 1155L747.1 1157.5L748.1 1159.3L749.1 1160.5L750.1 1160.9L751.1 1161.2L752.1 1161.6L753.1 1161.8L754.1 1162.1L755.1 1162.3L756.1 1162.5L757.1 1162.6L758.1 1162.7L759.1 1162.8L760.1 1162.9L761.1 1162.9L762.1 1162.9L763.1 1162.9L764.1 1162.9L765.1 1162.9L766.1 1162.9L767.1 1162.9L768.1 1162.9L769.1 1162.9L770.1 1162.8L771.1 1162.8L772.1 1162.8L773.1 1162.8L774.1 1162.8L775.1 1162.8L776.1 1162.7L777.1 1162.6L778.1 1162.1L779.1 1161.4L780.1 1160.7L781.1 1159.8L782.1 1158.8L783.1 1157.6L784.1 1156.4L785.1 1155.1L786.1 1153.9L787.1 1152.8L788.1 1151.6L789.1 1150.3L790.1 1149L791.1 1147.7L792.1 1146.5L793.1 1145.4L794.1 1144.4L795.1 1143.7L796.1 1143.3L797.1 1143.1L798.1 1143.1L799.1 1143.1L800.1 1143L801.1 1143L802.1 1143L803.1 1142.9L804.1 1142.9L805.1 1142.9L806.1 1142.9L807.1 1142.9L808.1 1142.8L809.1 1142.8L810.1 1142.8L811.1 1142.8L812.1 1142.8L813.1 1142.8L814.1 1142.8L815.1 1142.8L816.1 1142.8L817.1 1142.9L818.1 1142.9L819.1 1142.9L820.1 1142.9L821.1 1142.9L822.1 1143L823.1 1143L824.1 1143L825.1 1143.1L826.1 1143.1L827.1 1143.1L828.1 1143.2L829.1 1143.4L830.1 1143.8L831.1 1144.3L832.1 1144.8L833.1 1145.4L834.1 1145.9L835.1 1146.4L836.1 1146.9L837.1 1147.5L838.1 1148.1L839.1 1148.6L840.1 1149.2L841.1 1149.7L842.1 1150.2L843.1 1150.5L844.1 1150.7L845.1 1150.7L846.1 1150.8L847.1 1150.8L848.1 1150.8L849.1 1150.9L850.1 1150.9L851.1 1150.9L852.1 1150.9L853.1 1151L854.1 1151L855.1 1151L856.1 1151L857.1 1151L858.1 1151L859.1 1151L860.1 1151L861.1 1151L862.1 1151L863.1 1151L864.1 1151L865.1 1151L866.1 1151L867.1 1151L868.1 1151L869.1 1151L870.1 1151L871.1 1151L872.1 1151L873.1 1151L874.1 1151L875.1 1151.1L876.1 1151.7L877.1 1152.6L878.1 1153.7L879.1 1155L880.1 1156.2L881.1 1157.4L882.1 1158.8L883.1 1160.2L884.1 1161.8L885.1 1163.4L886.1 1164.9L887.1 1166.3L888.1 1167.6L889.1 1168.6L890.1 1169.7L891.1 1170.7L892.1 1171.7L893.1 1172.6L894.1 1173.3L895.1 1173.8L896.1 1174.1L897.1 1174.1L898.1 1174.1L899.1 1174.2L900.1 1174.2L901.1 1174.2L902.1 1174.2L903.1 1174.2L904.1 1174.2L905.1 1174.2L906.1 1174.3L907.1 1174.3L908.1 1174.3L909.1 1174.3L910.1 1174.3L911.1 1174.3L912.1 1174.3L913.1 1174.2L914.1 1174.2L915.1 1174.2L916.1 1174.2L917.1 1174.2L918.1 1174.1L919.1 1174.1L920.1 1174.1L921.1 1174L922.1 1174L923.1 1174L924.1 1173.9L925.1 1173.7L926.1 1173.3L927.1 1172.8L928.1 1172.2L929.1 1171.6L930.1 1171L931.1 1170.4L932.1 1169.8L933.1 1169.2L934.1 1168.5L935.1 1167.7L936.1 1167L937.1 1166.3L938.1 1165.6L939.1 1164.9L940.1 1164.4L941.1 1163.9L942.1 1163.5L943.1 1163.3L944.1 1163.2L945.1 1163.2L946.1 1163.2L947.1 1163.2L948.1 1163.1L949.1 1163.1L950.1 1163.1L951.1 1163.1L952.1 1163.1L953.1 1163.1L954.1 1163.1L955.1 1163.1L956.1 1163.1L957.1 1163.1L958.1 1163.1L959.1 1163.1L960.1 1163.1L961.1 1163.1L962.1 1163.1L963.1 1163.1L964.1 1163.1L965.1 1163.1L966.1 1163.1L967.1 1163.1L968.1 1163.1L969.1 1163.1L970.1 1163.2L971.1 1163.2L972.1 1163.2L973.1 1163.2L974.1 1163.4L975.1 1163.8L976.1 1164.4L977.1 1165.2L978.1 1166.1L979.1 1167L980.1 1167.8L981.1 1168.5L982.1 1169.4L983.1 1170.3L984.1 1171.3L985.1 1172.3L986.1 1173.3L987.1 1174.2L988.1 1175L989.1 1175.7L990.1 1176.3L991.1 1176.6L992.1 1176.6L993.1 1176.7L994.1 1176.7L995.1 1176.7L996.1 1176.8L997.1 1176.8L998.1 1176.8L999.1 1176.8L1000.1 1176.9L1001.1 1176.9L1002.1 1176.9L1003.1 1176.9L1004.1 1176.9L1005.1 1176.9L1006.1 1176.9L1007.1 1176.9L1008.1 1176.9L1009.1 1176.9L1010.1 1176.9L1011.1 1176.9L1012.1 1176.9L1013.1 1176.9L1014.1 1176.9L1015.1 1176.8L1016.1 1176.8L1017.1 1176.8L1018.1 1176.8L1019.1 1176.7L1020.1 1176.7L1021.1 1176.7L1022.1 1176.6L1023.1 1176.6L1024.1 1176.4L1025.1 1176.2L1026.1 1176L1027.1 1175.7L1028.1 1175.4L1029.1 1175L1030.1 1174.6L1031.1 1174.3L1032.1 1173.9L1033.1 1173.6L1034.1 1173.3L1035.1 1173.1L1036.1 1172.9L1037.1 1172.8L1038.1 1172.7L1039.1 1172.7L1040.1 1172.7L1041.1 1172.6L1042.1 1172.6L1043.1 1172.6L1044.1 1172.6L1045.1 1172.5L1046.1 1172.5L1047.1 1172.5L1048.1 1172.5L1049.1 1172.5L1050.1 1172.5L1051.1 1172.4L1052.1 1172.4L1053.1 1172.4L1054.1 1172.4L1055.1 1172.4L1056.1 1172.4L1057.1 1172.4L1058.1 1172.4L1059.1 1172.4L1060.1 1172.4L1061.1 1172.4L1062.1 1172.4L1063.1 1172.5L1064.1 1172.5L1065.1 1172.5L1066.1 1172.5L1067.1 1172.5L1068.1 1172.5L1069.1 1172.5L1070.1 1172.6L1071.1 1172.6L1072.1 1172.7L1073.1 1172.9L1074.1 1173.3L1075.1 1173.7L1076.1 1174.2L1077.1 1174.7L1078.1 1175.2L1079.1 1175.7L1080.1 1176.1L1081.1 1176.6L1082.1 1177.2L1083.1 1177.8L1084.1 1178.4L1085.1 1178.9L1086.1 1179.5L1087.1 1179.9L1088.1 1180.2L1089.1 1180.4L1090.1 1180.5L1091.1 1180.6L1092.1 1180.6L1093.1 1180.7L1094.1 1180.7L1095.1 1180.8L1096.1 1180.8L1097.1 1180.8L1098.1 1180.9L1099.1 1180.9L1100.1 1180.9L1101.1 1180.9L1102.1 1180.9L1103.1 1180.9L1104.1 1180.9L1105.1 1180.9L1106.1 1180.9L1107.1 1180.9L1108.1 1180.9L1109.1 1180.9L1110.1 1180.9L1111.1 1180.9L1112.1 1180.9L1113.1 1180.8L1114.1 1180.8L1115.1 1180.8L1116.1 1180.7L1117.1 1180.7L1118.1 1180.6L1119.1 1179.9L1120.1 1178.5L1121.1 1176.7L1122.1 1174.7L1123.1 1172.8L1124.1 1170.5L1125.1 1167.9L1126.1 1165L1127.1 1161.9L1128.1 1158.8L1129.1 1155.7L1130.1 1152.8L1131.1 1150.1L1132.1 1147.6L1133.1 1145L1134.1 1142.3L1135.1 1139.8L1136.1 1137.4L1137.1 1135.2L1138.1 1133.4L1139.1 1132L1140.1 1131L1141.1 1130.2L1142.1 1129.6L1143.1 1129L1144.1 1128.5L1145.1 1128L1146.1 1127.5L1147.1 1127L1148.1 1126.3L1149.1 1125.4L1150.1 1124.7L1151.1 1124.3L1152.1 1123.9L1153.1 1123.6L1154.1 1123.2L1155.1 1123L1156.1 1122.7L1157.1 1122.5L1158.1 1122.3L1159.1 1122.1L1160.1 1121.9L1161.1 1121.7L1162.1 1121.5L1163.1 1121.4L1164.1 1121.2L1165.1 1121.1L1166.1 1121.1L1167.1 1121.2L1168.1 1121.8L1169.1 1122.6L1170.1 1123.8L1171.1 1125L1172.1 1126.7L1173.1 1129.1L1174.1 1131.9L1175.1 1134.9L1176.1 1137.9L1177.1 1140.6L1178.1 1143.5L1179.1 1146.5L1180.1 1149.5L1181.1 1152.4L1182.1 1155.1L1183.1 1157.4L1184.1 1159.4L1185.1 1161.5L1186.1 1163.5L1187.1 1165.2L1188.1 1166.4L1189.1 1167L1190.1 1167.1L1191.1 1167.2L1192.1 1167.2L1193.1 1167.2L1194.1 1167.3L1195.1 1167.3L1196.1 1167.3L1197.1 1167.3L1198.1 1167.4L1199.1 1167.4L1200.1 1167.4L1201.1 1167.4L1202.1 1167.4L1203.1 1167.4L1204.1 1167.4L1205.1 1167.4L1206.1 1167.4L1207.1 1167.4L1208.1 1167.4L1209.1 1167.4L1210.1 1167.4L1211.1 1167.4L1212.1 1167.3L1213.1 1167.3L1214.1 1167.3L1215.1 1167.3L1216.1 1167.3L1217.1 1167.2L1218.1 1167.1L1219.1 1166.7L1220.1 1166.2L1221.1 1165.7L1222.1 1165L1223.1 1164.4L1224.1 1163.8L1225.1 1163.3L1226.1 1162.9L1227.1 1162.4L1228.1 1161.8L1229.1 1161.3L1230.1 1160.8L1231.1 1160.3L1232.1 1159.9L1233.1 1159.6L1234.1 1159.3L1235.1 1159.2L1236.1 1159.2L1237.1 1159.2L1238.1 1159.2L1239.1 1159.1L1240.1 1159.1L1241.1 1159.1L1242.1 1159.1L1243.1 1159.1L1244.1 1159.1L1245.1 1159.1L1246.1 1159.1L1247.1 1159.1L1248.1 1159L1249.1 1159L1250.1 1159L1251.1 1159L1252.1 1159L1253.1 1159L1254.1 1159L1255.1 1159L1256.1 1159L1257.1 1159L1258.1 1159L1259.1 1159L1260.1 1159L1261.1 1159L1262.1 1159L1263.1 1159L1264.1 1159L1265.1 1159L1266.1 1159.1L1267.1 1159.5L1268.1 1160L1269.1 1160.7L1270.1 1161.5L1271.1 1162.4L1272.1 1163.2L1273.1 1164.1L1274.1 1165.2L1275.1 1166.3L1276.1 1167.6L1277.1 1168.8L1278.1 1170L1279.1 1171.1L1280.1 1172.1L1281.1 1172.9L1282.1 1173.8L1283.1 1174.6L1284.1 1175.3L1285.1 1175.9L1286.1 1176.4L1287.1 1176.6L1288.1 1176.7L1289.1 1176.7L1290.1 1176.7L1291.1 1176.8L1292.1 1176.8L1293.1 1176.8L1294.1 1176.9L1295.1 1176.9L1296.1 1176.9L1297.1 1176.9L1298.1 1176.9L1299.1 1176.9L1300.1 1176.9L1301.1 1176.9L1302.1 1176.9L1303.1 1176.9L1304.1 1176.9L1305.1 1176.9L1306.1 1176.9L1307.1 1176.9L1308.1 1176.9L1309.1 1176.8L1310.1 1176.8L1311.1 1176.8L1312.1 1176.7L1313.1 1176.7L1314.1 1176.7L1315.1 1176.6L1316.1 1176.6L1317.1 1176.4L1318.1 1176L1319.1 1175.6L1320.1 1175.1L1321.1 1174.6L1322.1 1174.1L1323.1 1173.6L1324.1 1173.2L1325.1 1172.8L1326.1 1172.3L1327.1 1171.8L1328.1 1171.4L1329.1 1170.9L1330.1 1170.5L1331.1 1170.1L1332.1 1169.8L1333.1 1169.7L1334.1 1169.6L1335.1 1169.6L1336.1 1169.5L1337.1 1169.5L1338.1 1169.5L1339.1 1169.5L1340.1 1169.5L1341.1 1169.4L1342.1 1169.4L1343.1 1169.4L1344.1 1169.4L1345.1 1169.4L1346.1 1169.4L1347.1 1169.4L1348.1 1169.4L1349.1 1169.4L1350.1 1169.4L1351.1 1169.5L1352.1 1169.5L1353.1 1169.5L1354.1 1169.5L1355.1 1169.6L1356.1 1169.6L1357.1 1169.6L1358.1 1169.7L1359.1 1169.7L1360.1 1169.8L1361.1 1169.8L1362.1 1169.9L1363.1 1170L1364.1 1170.1L1365.1 1170.2L1366.1 1170.3L1367.1 1170.5L1368.1 1170.6L1369.1 1170.8L1370.1 1170.9L1371.1 1171.1L1372.1 1171.2L1373.1 1171.3L1374.1 1171.5L1375.1 1171.6L1376.1 1171.7L1377.1 1171.9L1378.1 1172L1379.1 1172.1L1380.1 1172.2L1381.1 1172.3L1382.1 1172.4L1383.1 1172.4L1384.1 1172.4L1385.1 1172.4L1386.1 1172.4L1387.1 1172.4L1388.1 1172.4L1389.1 1172.4L1390.1 1172.4L1391.1 1172.4L1392.1 1172.4L1393.1 1172.4L1394.1 1172.4L1395.1 1172.4L1396.1 1172.4L1397.1 1172.4L1398.1 1172.4L1399.1 1172.4L1400.1 1172.4L1401.1 1172.4L1402.1 1172.4L1403.1 1172.4L1404.1 1172.4L1405.1 1172.4L1406.1 1172.4L1407.1 1172.4L1408.1 1172.3L1409.1 1172.3L1410.1 1172.3L1411.1 1172.3L1412.1 1172.1L1413.1 1170.9L1414.1 1168.6L1415.1 1165.7L1416.1 1162.7L1417.1 1158.7L1418.1 1153.8L1419.1 1148.2L1420.1 1142.6L1421.1 1137.3L1422.1 1132.1L1423.1 1126.8L1424.1 1121.6L1425.1 1116.8L1426.1 1112.5L1427.1 1108.5L1428.1 1104.6L1429.1 1101.1L1430.1 1098.2L1431.1 1096.1L1432.1 1094.5L1433.1 1093.1L1434.1 1092.1L1435.1 1091.7L1436.1 1091.6L1437.1 1091.6L1438.1 1091.6L1439.1 1091.6L1440.1 1091.5L1441.1 1091.5L1442.1 1091.5L1443.1 1091.5L1444.1 1091.5L1445.1 1091.5L1446.1 1091.5L1447.1 1091.5L1448.1 1091.5L1449.1 1091.5L1450.1 1091.5L1451.1 1091.5L1452.1 1091.5L1453.1 1091.5L1454.1 1091.5L1455.1 1091.5L1456.1 1091.5L1457.1 1091.5L1458.1 1091.5L1459.1 1091.5L1460.1 1091.5L1461.1 1091.5L1462.1 1091.5L1463.1 1091.5L1464.1 1091.5L1465.1 1091.5L1466.1 1091.5L1467.1 1091.5L1468.1 1091.5L1469.1 1091.5L1470.1 1091.5L1471.1 1091.5L1472.1 1091.5L1473.1 1091.5L1474.1 1091.5L1475.1 1091.5L1476.1 1091.5L1477.1 1091.5L1478.1 1091.5L1479.1 1091.5L1480.1 1091.5L1481.1 1091.5L1482.1 1091.5L1483.1 1091.5L1484.1 1091.5L1485.1 1091.5L1486.1 1091.5L1487.1 1091.5L1488.1 1091.5L1489.1 1091.5L1490.1 1091.5L1491.1 1091.5L1492.1 1091.5L1493.1 1091.5L1494.1 1091.5L1495.1 1091.5L1496.1 1091.5L1497.1 1091.5L1498.1 1091.5L1499.1 1091.5L1500.1 1091.5L1501.1 1091.5L1502.1 1091.5L1503.1 1091.5L1504.1 1091.5L1505.1 1091.5L1506.1 1091.5L1507.1 1091.5L1508.1 1091.5L1509 1091.5L1509 1200L48.1 1200Z" fill="#d7781e" fill-opacity="0.1"/>
<path d="M48.1 1173.3L49.1 1172.8L50.1 1172.4L51.1 1171.9L52.1 1171.4L53.1 1171L54.1 1170.6L55.1 1170.3L56.1 1169.9L57.1 1169.6L58.1 1169.3L59.1 1169L60.1 1168.7L61.1 1168.5L62.1 1168.3L63.1 1168.2L64.1 1168.2L65.1 1168.2L66.1 1168.2L67.1 1168.2L68.1 1168.2L69.1 1168.2L70.1 1168.2L71.1 1168.2L72.1 1168.2L73.1 1168.2L74.1 1168.2L75.1 1168.2L76.1 1168.2L77.1 1168.2L78.1 1168.2L79.1 1168.2L80.1 1168.2L81.1 1168.2L82.1 1168.2L83.1 1168.2L84.1 1168.2L85.1 1168.2L86.1 1168.2L87.1 1168.2L88.1 1168.2L89.1 1168.2L90.1 1168.2L91.1 1168.2L92.1 1168.2L93.1 1168.3L94.1 1168.5L95.1 1168.8L96.1 1169.1L97.1 1169.4L98.1 1169.8L99.1 1170.1L100.1 1170.4L101.1 1170.8L102.1 1171.1L103.1 1171.6L104.1 1172L105.1 1172.3L106.1 1172.7L107.1 1173L108.1 1173.3L109.1 1173.5L110.1 1173.6L111.1 1173.6L112.1 1173.7L113.1 1173.7L114.1 1173.7L115.1 1173.8L116.1 1173.8L117.1 1173.8L118.1 1173.8L119.1 1173.9L120.1 1173.9L121.1 1173.9L122.1 1173.9L123.1 1173.9L124.1 1173.9L125.1 1173.9L126.1 1173.9L127.1 1173.9L128.1 1173.9L129.1 1173.9L130.1 1173.9L131.1 1173.9L132.1 1173.9L133.1 1173.9L134.1 1173.8L135.1 1173.8L136.1 1173.8L137.1 1173.8L138.1 1173.7L139.1 1173.7L140.1 1173.7L141.1 1173.6L142.1 1173.6L143.1 1173.5L144.1 1173.5L145.1 1173.4L146.1 1173.3L147.1 1173.2L148.1 1173L149.1 1172.9L150.1 1172.8L151.1 1172.6L152.1 1172.5L153.1 1172.3L154.1 1172.2L155.1 1172.1L156.1 1171.9L157.1 1171.8L158.1 1171.7L159.1 1171.7L160.1 1171.6L161.1 1171.6L162.1 1171.5L163.1 1171.5L164.1 1171.5L165.1 1171.4L166.1 1171.4L167.1 1171.4L168.1 1171.4L169.1 1171.4L170.1 1171.3L171.1 1171.3L172.1 1171.3L173.1 1171.3L174.1 1171.3L175.1 1171.3L176.1 1171.2L177.1 1171.2L178.1 1171.2L179.1 1171.2L180.1 1171.2L181.1 1171.2L182.1 1171.2L183.1 1171.2L184.1 1171.2L185.1 1171.2L186.1 1171.2L187.1 1171.1L188.1 1171.1L189.1 1171.1L190.1 1171L191.1 1170.7L192.1 1170L193.1 1169.1L194.1 1168.1L195.1 1167L196.1 1166L197.1 1165L198.1 1164.2L199.1 1163.2L200.1 1162.1L201.1 1161L202.1 1159.9L203.1 1158.8L204.1 1157.8L205.1 1156.8L206.1 1156L207.1 1155.3L208.1 1154.8L209.1 1154.4L210.1 1154.4L211.1 1154.3L212.1 1154.3L213.1 1154.3L214.1 1154.3L215.1 1154.3L216.1 1154.2L217.1 1154.2L218.1 1154.2L219.1 1154.2L220.1 1154.2L221.1 1154.2L222.1 1154.2L223.1 1154.2L224.1 1154.2L225.1 1154.2L226.1 1154.2L227.1 1154.2L228.1 1154.2L229.1 1154.2L230.1 1154.2L231.1 1154.3L232.1 1154.3L233.1 1154.3L234.1 1154.4L235.1 1154.4L236.1 1154.4L237.1 1154.5L238.1 1154.5L239.1 1154.8L240.1 1155.5L241.1 1156.6L242.1 1158L243.1 1159.4L244.1 1161L245.1 1162.4L246.1 1163.6L247.1 1165L248.1 1166.4L249.1 1168L250.1 1169.6L251.1 1171.2L252.1 1172.8L253.1 1174.3L254.1 1175.7L255.1 1176.9L256.1 1178L257.1 1178.8L258.1 1179.4L259.1 1179.6L260.1 1179.7L261.1 1179.7L262.1 1179.8L263.1 1179.9L264.1 1179.9L265.1 1179.9L266.1 1180L267.1 1180L268.1 1180L269.1 1180.1L270.1 1180.1L271.1 1180.1L272.1 1180.1L273.1 1180.1L274.1 1180.1L275.1 1180.1L276.1 1180.1L277.1 1180.1L278.1 1180.1L279.1 1180.1L280.1 1180.1L281.1 1180.1L282.1 1180L283.1 1180L284.1 1180L285.1 1180L286.1 1180L287.1 1179.9L288.1 1179L289.1 1177.3L290.1 1175.1L291.1 1172.5L292.1 1169.6L293.1 1166.6L294.1 1162.3L295.1 1156.9L296.1 1150.8L297.1 1144.4L298.1 1138L299.1 1132L300.1 1126.7L301.1 1122.5L302.1 1118.7L303.1 1114.8L304.1 1111.1L305.1 1107.7L306.1 1104.9L307.1 1102.9L308.1 1101.8L309.1 1101.6L310.1 1101.5L311.1 1101.4L312.1 1101.4L313.1 1101.3L314.1 1101.2L315.1 1101.2L316.1 1101.1L317.1 1101.1L318.1 1101.1L319.1 1101.1L320.1 1101L321.1 1101L322.1 1101L323.1 1101L324.1 1101L325.1 1101L326.1 1101L327.1 1101.1L328.1 1101.1L329.1 1101.1L330.1 1101.1L331.1 1101.1L332.1 1101.2L333.1 1101.2L334.1 1101.3L335.1 1101.3L336.1 1101.4L337.1 1102.3L338.1 1103.9L339.1 1106L340.1 1108.7L341.1 1111.5L342.1 1114.5L343.1 1117.5L344.1 1121.2L345.1 1125.6L346.1 1130.5L347.1 1135.7L348.1 1140.9L349.1 1146L350.1 1150.7L351.1 1154.8L352.1 1158.7L353.1 1162.9L354.1 1167L355.1 1170.6L356.1 1173.5L357.1 1175.3L358.1 1175.8L359.1 1175.9L360.1 1175.9L361.1 1176L362.1 1176.1L363.1 1176.1L364.1 1176.1L365.1 1176.2L366.1 1176.2L367.1 1176.2L368.1 1176.2L369.1 1176.3L370.1 1176.3L371.1 1176.3L372.1 1176.3L373.1 1176.3L374.1 1176.3L375.1 1176.2L376.1 1176.2L377.1 1176.2L378.1 1176.2L379.1 1176.2L380.1 1176.1L381.1 1176.1L382.1 1176.1L383.1 1176L384.1 1176L385.1 1175.8L386.1 1174.8L387.1 1173.2L388.1 1171.1L389.1 1168.7L390.1 1166.1L391.1 1163.6L392.1 1160.9L393.1 1157.6L394.1 1153.8L395.1 1149.8L396.1 1145.7L397.1 1141.6L398.1 1137.8L399.1 1134.3L400.1 1131.3L401.1 1128.4L402.1 1125.5L403.1 1122.6L404.1 1120.1L405.1 1118.2L406.1 1117L407.1 1116.7L408.1 1116.7L409.1 1116.6L410.1 1116.6L411.1 1116.5L412.1 1116.5L413.1 1116.5L414.1 1116.5L415.1 1116.4L416.1 1116.4L417.1 1116.4L418.1 1116.4L419.1 1116.4L420.1 1116.4L421.1 1116.4L422.1 1116.4L423.1 1116.4L424.1 1116.4L425.1 1116.4L426.1 1116.4L427.1 1116.4L428.1 1116.5L429.1 1116.5L430.1 1116.5L431.1 1116.5L432.1 1116.6L433.1 1116.7L434.1 1117.3L435.1 1118.6L436.1 1120.2L437.1 1122L438.1 1124L439.1 1126L440.1 1128.7L441.1 1131.8L442.1 1135.3L443.1 1138.9L444.1 1142.6L445.1 1146.1L446.1 1149.4L447.1 1152.1L448.1 1154.9L449.1 1157.8L450.1 1160.7L451.1 1163.4L452.1 1165.9L453.1 1167.8L454.1 1169.2L455.1 1169.9L456.1 1170L457.1 1170.2L458.1 1170.3L459.1 1170.4L460.1 1170.5L461.1 1170.5L462.1 1170.6L463.1 1170.7L464.1 1170.7L465.1 1170.7L466.1 1170.7L467.1 1170.7L468.1 1170.7L469.1 1170.7L470.1 1170.7L471.1 1170.7L472.1 1170.7L473.1 1170.7L474.1 1170.7L475.1 1170.7L476.1 1170.6L477.1 1170.6L478.1 1170.6L479.1 1170.6L480.1 1170.6L481.1 1170.6L482.1 1170.6L483.1 1170.7L484.1 1170.9L485.1 1171.1L486.1 1171.5L487.1 1171.9L488.1 1172.3L489.1 1172.8L490.1 1173.2L491.1 1173.6L492.1 1174.1L493.1 1174.6L494.1 1175.3L495.1 1175.9L496.1 1176.6L497.1 1177.2L498.1 1177.8L499.1 1178.4L500.1 1178.9L501.1 1179.4L502.1 1179.7L503.1 1179.9L504.1 1180L505.1 1180L506.1 1180L507.1 1180.1L508.1 1180.1L509.1 1180.1L510.1 1180.2L511.1 1180.2L512.1 1180.2L513.1 1180.2L514.1 1180.2L515.1 1180.2L516.1 1180.3L517.1 1180.3L518.1 1180.3L519.1 1180.3L520.1 1180.3L521.1 1180.3L522.1 1180.3L523.1 1180.3L524.1 1180.3L525.1 1180.2L526.1 1180.2L527.1 1180.2L528.1 1180.2L529.1 1180.2L530.1 1180.2L531.1 1180.1L532.1 1180.1L533.1 1180.1L534.1 1180L535.1 1180L536.1 1180L537.1 1179.9L538.1 1179.9L539.1 1179.8L540.1 1179.7L541.1 1179.6L542.1 1179.5L543.1 1179.4L544.1 1179.3L545.1 1179.2L546.1 1179L547.1 1178.9L548.1 1178.9L549.1 1178.8L550.1 1178.8L551.1 1178.8L552.1 1178.8L553.1 1178.8L554.1 1178.8L555.1 1178.8L556.1 1178.8L557.1 1178.8L558.1 1178.8L559.1 1178.8L560.1 1178.8L561.1 1178.8L562.1 1178.8L563.1 1178.8L564.1 1178.8L565.1 1178.8L566.1 1178.8L567.1 1178.8L568.1 1178.8L569.1 1178.8L570.1 1178.8L571.1 1178.9L572.1 1178.9L573.1 1178.9L574.1 1178.9L575.1 1178.9L576.1 1178.9L577.1 1178.9L578.1 1178.9L579.1 1178.9L580.1 1179L581.1 1179.2L582.1 1179.4L583.1 1179.6L584.1 1179.9L585.1 1180.2L586.1 1180.4L587.1 1180.7L588.1 1181L589.1 1181.3L590.1 1181.7L591.1 1182L592.1 1182.4L593.1 1182.8L594.1 1183.2L595.1 1183.6L596.1 1184L597.1 1184.3L598.1 1184.5L599.1 1184.8L600.1 1184.9L601.1 1185L602.1 1185L603.1 1185.1L604.1 1185.2L605.1 1185.2L606.1 1185.2L607.1 1185.3L608.1 1185.3L609.1 1185.4L610.1 1185.4L611.1 1185.4L612.1 1185.4L613.1 1185.4L614.1 1185.5L615.1 1185.5L616.1 1185.5L617.1 1185.5L618.1 1185.5L619.1 1185.5L620.1 1185.5L621.1 1185.4L622.1 1185.4L623.1 1185.4L624.1 1185.4L625.1 1185.4L626.1 1185.4L627.1 1185.4L628.1 1185.3L629.1 1185.3L630.1 1184.9L631.1 1183.8L632.1 1182.2L633.1 1180.4L634.1 1178.4L635.1 1175.9L636.1 1172.6L637.1 1168.6L638.1 1164.2L639.1 1159.6L640.1 1155.2L641.1 1151.1L642.1 1147.7L643.1 1144.9L644.1 1142.1L645.1 1139.3L646.1 1136.7L647.1 1134.3L648.1 1132.2L649.1 1130.6L650.1 1129.6L651.1 1129.3L652.1 1129.2L653.1 1129.1L654.1 1129L655.1 1128.9L656.1 1128.8L657.1 1128.8L658.1 1128.7L659.1 1128.7L660.1 1128.7L661.1 1128.6L662.1 1128.6L663.1 1128.6L664.1 1128.6L665.1 1128.6L666.1 1128.6L667.1 1128.6L668.1 1128.6L669.1 1128.6L670.1 1128.6L671.1 1128.6L672.1 1128.6L673.1 1128.6L674.1 1128.6L675.1 1128.6L676.1 1128.6L677.1 1128.6L678.1 1128.6L679.1 1128.7L680.1 1129.3L681.1 1130.2L682.1 1131.3L683.1 1132.5L684.1 1133.7L685.1 1134.9L686.1 1136.3L687.1 1137.9L688.1 1139.5L689.1 1141.2L690.1 1142.9L691.1 1144.4L692.1 1145.8L693.1 1147L694.1 1148.2L695.1 1149.4L696.1 1150.5L697.1 1151.6L698.1 1152.6L699.1 1153.3L700.1 1153.8L701.1 1154L702.1 1154.1L703.1 1154.1L704.1 1154.2L705.1 1154.2L706.1 1154.3L707.1 1154.3L708.1 1154.3L709.1 1154.3L710.1 1154.3L711.1 1154.4L712.1 1154.4L713.1 1154.4L714.1 1154.4L715.1 1154.4L716.1 1154.4L717.1 1154.3L718.1 1154.3L719.1 1154.3L720.1 1154.3L721.1 1154.3L722.1 1154.3L723.1 1154.3L724.1 1154.3L725.1 1154.2L726.1 1154.2L727.1 1154.2L728.1 1153.6L729.1 1152.1L730.1 1150.1L731.1 1147.7L732.1 1145L733.1 1142.4L734.1 1139L735.1 1134.7L736.1 1129.9L737.1 1124.8L738.1 1119.4L739.1 1114.2L740.1 1109.3L741.1 1105L742.1 1100.8L743.1 1096.3L744.1 1091.8L745.1 1087.5L746.1 1083.8L747.1 1080.9L748.1 1079.1L749.1 1078.7L750.1 1078.6L751.1 1078.5L752.1 1078.4L753.1 1078.3L754.1 1078.2L755.1 1078.2L756.1 1078.1L757.1 1078L758.1 1078L759.1 1078L760.1 1078L761.1 1077.9L762.1 1077.9L763.1 1077.9L764.1 1077.9L765.1 1077.9L766.1 1078L767.1 1078L768.1 1078L769.1 1078L770.1 1078L771.1 1078L772.1 1078L773.1 1078L774.1 1078.1L775.1 1078.1L776.1 1078.3L777.1 1079.5L778.1 1081.4L779.1 1083.8L780.1 1086.5L781.1 1090.5L782.1 1096.3L783.1 1103.4L784.1 1111.1L785.1 1118.8L786.1 1125.9L787.1 1131.9L788.1 1137.7L789.1 1143.5L790.1 1148.9L791.1 1153.9L792.1 1158.1L793.1 1161.7L794.1 1165.1L795.1 1168.4L796.1 1171.2L797.1 1173.4L798.1 1174.5L799.1 1174.7L800.1 1174.8L801.1 1174.9L802.1 1174.9L803.1 1175L804.1 1175.1L805.1 1175.1L806.1 1175.2L807.1 1175.2L808.1 1175.2L809.1 1175.2L810.1 1175.3L811.1 1175.3L812.1 1175.3L813.1 1175.3L814.1 1175.3L815.1 1175.3L816.1 1175.3L817.1 1175.3L818.1 1175.3L819.1 1175.3L820.1 1175.3L821.1 1175.3L822.1 1175.3L823.1 1175.3L824.1 1175.3L825.1 1175.3L826.1 1175.3L827.1 1175.3L828.1 1175.4L829.1 1175.6L830.1 1175.8L831.1 1176.2L832.1 1176.5L833.1 1176.8L834.1 1177.2L835.1 1177.4L836.1 1177.6L837.1 1177.8L838.1 1178.1L839.1 1178.3L840.1 1178.5L841.1 1178.7L842.1 1178.9L843.1 1179.1L844.1 1179.2L845.1 1179.3L846.1 1179.4L847.1 1179.4L848.1 1179.5L849.1 1179.5L850.1 1179.5L851.1 1179.5L852.1 1179.5L853.1 1179.6L854.1 1179.6L855.1 1179.6L856.1 1179.6L857.1 1179.6L858.1 1179.6L859.1 1179.6L860.1 1179.6L861.1 1179.6L862.1 1179.6L863.1 1179.6L864.1 1179.6L865.1 1179.6L866.1 1179.6L867.1 1179.6L868.1 1179.6L869.1 1179.5L870.1 1179.5L871.1 1179.5L872.1 1179.5L873.1 1179.5L874.1 1179.5L875.1 1179.4L876.1 1179.3L877.1 1179.2L878.1 1179.1L879.1 1178.9L880.1 1178.7L881.1 1178.4L882.1 1178.2L883.1 1178L884.1 1177.8L885.1 1177.6L886.1 1177.4L887.1 1177.2L888.1 1177.1L889.1 1177.1L890.1 1177L891.1 1177L892.1 1177L893.1 1176.9L894.1 1176.9L895.1 1176.9L896.1 1176.9L897.1 1176.8L898.1 1176.8L899.1 1176.8L900.1 1176.8L901.1 1176.8L902.1 1176.7L903.1 1176.7L904.1 1176.7L905.1 1176.7L906.1 1176.7L907.1 1176.7L908.1 1176.6L909.1 1176.6L910.1 1176.6L911.1 1176.6L912.1 1176.6L913.1 1176.5L914.1 1176.5L915.1 1176.5L916.1 1176.5L917.1 1176.5L918.1 1176.5L919.1 1176.4L920.1 1176.4L921.1 1176.4L922.1 1176.4L923.1 1176.3L924.1 1176.3L925.1 1176.2L926.1 1175.7L927.1 1174.8L928.1 1173.6L929.1 1172.3L930.1 1170.9L931.1 1169.5L932.1 1168.4L933.1 1167.3L934.1 1166.2L935.1 1165L936.1 1163.8L937.1 1162.5L938.1 1161.4L939.1 1160.3L940.1 1159.3L941.1 1158.5L942.1 1157.9L943.1 1157.5L944.1 1157.4L945.1 1157.3L946.1 1157.3L947.1 1157.2L948.1 1157.2L949.1 1157.2L950.1 1157.2L951.1 1157.1L952.1 1157.1L953.1 1157.1L954.1 1157.1L955.1 1157.1L956.1 1157L957.1 1157L958.1 1157L959.1 1157L960.1 1157L961.1 1157L962.1 1157L963.1 1157L964.1 1157.1L965.1 1157.1L966.1 1157.1L967.1 1157.1L968.1 1157.1L969.1 1157.1L970.1 1157.1L971.1 1157.2L972.1 1157.2L973.1 1157.2L974.1 1157.3L975.1 1157.6L976.1 1158.1L977.1 1158.6L978.1 1159.2L979.1 1159.8L980.1 1160.4L981.1 1160.9L982.1 1161.5L983.1 1162.1L984.1 1162.8L985.1 1163.5L986.1 1164.2L987.1 1164.9L988.1 1165.5L989.1 1165.9L990.1 1166.3L991.1 1166.5L992.1 1166.6L993.1 1166.6L994.1 1166.7L995.1 1166.7L996.1 1166.7L997.1 1166.8L998.1 1166.8L999.1 1166.8L1000.1 1166.8L1001.1 1166.9L1002.1 1166.9L1003.1 1166.9L1004.1 1166.9L1005.1 1166.9L1006.1 1166.9L1007.1 1166.9L1008.1 1166.9L1009.1 1166.9L1010.1 1166.9L1011.1 1166.9L1012.1 1166.9L1013.1 1166.9L1014.1 1166.8L1015.1 1166.8L1016.1 1166.8L1017.1 1166.8L1018.1 1166.8L1019.1 1166.7L1020.1 1166.7L1021.1 1166.7L1022.1 1166.6L1023.1 1166.6L1024.1 1166.6L1025.1 1166.5L1026.1 1166.4L1027.1 1166.3L1028.1 1166.2L1029.1 1166L1030.1 1165.9L1031.1 1165.7L1032.1 1165.5L1033.1 1165.4L1034.1 1165.2L1035.1 1165.1L1036.1 1165L1037.1 1164.9L1038.1 1164.9L1039.1 1164.8L1040.1 1164.8L1041.1 1164.8L1042.1 1164.8L1043.1 1164.8L1044.1 1164.7L1045.1 1164.7L1046.1 1164.7L1047.1 1164.7L1048.1 1164.7L1049.1 1164.7L1050.1 1164.6L1051.1 1164.6L1052.1 1164.6L1053.1 1164.6L1054.1 1164.6L1055.1 1164.6L1056.1 1164.6L1057.1 1164.5L1058.1 1164.5L1059.1 1164.5L1060.1 1164.5L1061.1 1164.5L1062.1 1164.5L1063.1 1164.5L1064.1 1164.5L1065.1 1164.5L1066.1 1164.5L1067.1 1164.4L1068.1 1164.4L1069.1 1164.4L1070.1 1163.9L1071.1 1161.9L1072.1 1158.8L1073.1 1155L1074.1 1150.9L1075.1 1146.3L1076.1 1140L1077.1 1132.5L1078.1 1124.2L1079.1 1115.6L1080.1 1107.1L1081.1 1099.3L1082.1 1091.3L1083.1 1082.9L1084.1 1074.4L1085.1 1066.2L1086.1 1058.8L1087.1 1052.6L1088.1 1047.9L1089.1 1043.5L1090.1 1039.4L1091.1 1036.1L1092.1 1034.1L1093.1 1033.6L1094.1 1033.5L1095.1 1033.4L1096.1 1033.4L1097.1 1033.3L1098.1 1033.3L1099.1 1033.2L1100.1 1033.2L1101.1 1033.2L1102.1 1033.1L1103.1 1033.1L1104.1 1033.1L1105.1 1033.1L1106.1 1033.1L1107.1 1033.1L1108.1 1033.1L1109.1 1033.1L1110.1 1033.2L1111.1 1033.2L1112.1 1033.2L1113.1 1033.2L1114.1 1033.3L1115.1 1033.3L1116.1 1033.4L1117.1 1033.4L1118.1 1033.6L1119.1 1035.2L1120.1 1038.4L1121.1 1042.7L1122.1 1047.5L1123.1 1052.5L1124.1 1058.6L1125.1 1066.2L1126.1 1074.7L1127.1 1083.6L1128.1 1092.6L1129.1 1101.2L1130.1 1109.1L1131.1 1117.3L1132.1 1125.5L1133.1 1133.6L1134.1 1141.2L1135.1 1148.2L1136.1 1154.2L1137.1 1159.7L1138.1 1165.3L1139.1 1170.3L1140.1 1174L1141.1 1175.7L1142.1 1175.9L1143.1 1176L1144.1 1176.1L1145.1 1176.1L1146.1 1176.2L1147.1 1176.2L1148.1 1176.2L1149.1 1176.3L1150.1 1176.3L1151.1 1176.3L1152.1 1176.3L1153.1 1176.3L1154.1 1176.3L1155.1 1176.3L1156.1 1176.3L1157.1 1176.3L1158.1 1176.3L1159.1 1176.3L1160.1 1176.3L1161.1 1176.3L1162.1 1176.3L1163.1 1176.3L1164.1 1176.3L1165.1 1176.3L1166.1 1176.3L1167.1 1176.3L1168.1 1176.3L1169.1 1176.4L1170.1 1176.6L1171.1 1176.7L1172.1 1176.9L1173.1 1177.1L1174.1 1177.2L1175.1 1177.4L1176.1 1177.6L1177.1 1177.8L1178.1 1178L1179.1 1178.2L1180.1 1178.4L1181.1 1178.5L1182.1 1178.7L1183.1 1178.8L1184.1 1178.8L1185.1 1178.8L1186.1 1178.9L1187.1 1178.9L1188.1 1179L1189.1 1179L1190.1 1179L1191.1 1179.1L1192.1 1179.1L1193.1 1179.1L1194.1 1179.2L1195.1 1179.2L1196.1 1179.2L1197.1 1179.2L1198.1 1179.2L1199.1 1179.3L1200.1 1179.3L1201.1 1179.3L1202.1 1179.3L1203.1 1179.3L1204.1 1179.3L1205.1 1179.3L1206.1 1179.3L1207.1 1179.3L1208.1 1179.3L1209.1 1179.3L1210.1 1179.2L1211.1 1179.2L1212.1 1179.2L1213.1 1179.2L1214.1 1179.2L1215.1 1179.2L1216.1 1179.1L1217.1 1179.1L1218.1 1178.9L1219.1 1178.4L1220.1 1177.7L1221.1 1176.9L1222.1 1176.1L1223.1 1175.3L1224.1 1174.6L1225.1 1173.8L1226.1 1172.9L1227.1 1171.9L1228.1 1170.9L1229.1 1170L1230.1 1169L1231.1 1168.2L1232.1 1167.4L1233.1 1166.8L1234.1 1166.4L1235.1 1165.9L1236.1 1165.5L1237.1 1165.2L1238.1 1164.9L1239.1 1164.7L1240.1 1164.6L1241.1 1164.6L1242.1 1164.6L1243.1 1164.6L1244.1 1164.6L1245.1 1164.7L1246.1 1164.7L1247.1 1164.7L1248.1 1164.8L1249.1 1164.8L1250.1 1164.8L1251.1 1164.9L1252.1 1164.9L1253.1 1164.9L1254.1 1164.9L1255.1 1164.9L1256.1 1164.9L1257.1 1164.9L1258.1 1164.9L1259.1 1164.9L1260.1 1164.9L1261.1 1164.9L1262.1 1164.9L1263.1 1164.9L1264.1 1164.9L1265.1 1164.9L1266.1 1165L1267.1 1165.3L1268.1 1165.9L1269.1 1166.5L1270.1 1167.2L1271.1 1167.8L1272.1 1168.6L1273.1 1169.4L1274.1 1170.3L1275.1 1171.2L1276.1 1172.2L1277.1 1173.1L1278.1 1174L1279.1 1174.8L1280.1 1175.5L1281.1 1176.2L1282.1 1176.8L1283.1 1177.5L1284.1 1178.1L1285.1 1178.7L1286.1 1179.2L1287.1 1179.6L1288.1 1179.9L1289.1 1180L1290.1 1180L1291.1 1180.1L1292.1 1180.1L1293.1 1180.1L1294.1 1180.2L1295.1 1180.2L1296.1 1180.2L1297.1 1180.3L1298.1 1180.3L1299.1 1180.3L1300.1 1180.3L1301.1 1180.3L1302.1 1180.3L1303.1 1180.3L1304.1 1180.3L1305.1 1180.2L1306.1 1180.2L1307.1 1180.2L1308.1 1180.2L1309.1 1180.2L1310.1 1180.1L1311.1 1180.1L1312.1 1180.1L1313.1 1180.1L1314.1 1180L1315.1 1180L1316.1 1180L1317.1 1180L1318.1 1179.9L1319.1 1179.9L1320.1 1179.9L1321.1 1179.9L1322.1 1179.8L1323.1 1179.8L1324.1 1179.8L1325.1 1179.8L1326.1 1179.7L1327.1 1179.7L1328.1 1179.7L1329.1 1179.7L1330.1 1179.6L1331.1 1179.6L1332.1 1179.5L1333.1 1179.5L1334.1 1179.4L1335.1 1179.4L1336.1 1179.3L1337.1 1179.2L1338.1 1179L1339.1 1178.9L1340.1 1178.7L1341.1 1178.5L1342.1 1178.3L1343.1 1178.1L1344.1 1177.7L1345.1 1177.3L1346.1 1176.9L1347.1 1176.4L1348.1 1175.8L1349.1 1175.3L1350.1 1174.9L1351.1 1174.5L1352.1 1174.2L1353.1 1173.9L1354.1 1173.7L1355.1 1173.4L1356.1 1173.2L1357.1 1173L1358.1 1172.8L1359.1 1172.7L1360.1 1172.5L1361.1 1172.5L1362.1 1172.4L1363.1 1172.5L1364.1 1172.7L1365.1 1173.1L1366.1 1173.5L1367.1 1173.9L1368.1 1174.4L1369.1 1175L1370.1 1175.7L1371.1 1176.5L1372.1 1177.2L1373.1 1178L1374.1 1178.8L1375.1 1179.5L1376.1 1180.1L1377.1 1180.8L1378.1 1181.5L1379.1 1182.1L1380.1 1182.8L1381.1 1183.3L1382.1 1183.8L1383.1 1184.1L1384.1 1184.3L1385.1 1184.3L1386.1 1184.4L1387.1 1184.4L1388.1 1184.5L1389.1 1184.5L1390.1 1184.5L1391.1 1184.6L1392.1 1184.6L1393.1 1184.6L1394.1 1184.6L1395.1 1184.6L1396.1 1184.6L1397.1 1184.6L1398.1 1184.6L1399.1 1184.6L1400.1 1184.6L1401.1 1184.6L1402.1 1184.6L1403.1 1184.6L1404.1 1184.6L1405.1 1184.6L1406.1 1184.6L1407.1 1184.6L1408.1 1184.6L1409.1 1184.5L1410.1 1184.5L1411.1 1184.5L1412.1 1184.5L1413.1 1184.5L1414.1 1184.4L1415.1 1184.2L1416.1 1183.8L1417.1 1183.2L1418.1 1182.7L1419.1 1182L1420.1 1181.4L1421.1 1180.8L1422.1 1180.2L1423.1 1179.7L1424.1 1179.2L1425.1 1178.6L1426.1 1178.1L1427.1 1177.5L1428.1 1177L1429.1 1176.5L1430.1 1176.1L1431.1 1175.8L1432.1 1175.6L1433.1 1175.6L1434.1 1175.6L1435.1 1175.5L1436.1 1175.5L1437.1 1175.5L1438.1 1175.5L1439.1 1175.5L1440.1 1175.5L1441.1 1175.5L1442.1 1175.5L1443.1 1175.4L1444.1 1175.4L1445.1 1175.4L1446.1 1175.4L1447.1 1175.4L1448.1 1175.4L1449.1 1175.4L1450.1 1175.4L1451.1 1175.4L1452.1 1175.4L1453.1 1175.4L1454.1 1175.4L1455.1 1175.4L1456.1 1175.4L1457.1 1175.4L1458.1 1175.4L1459.1 1175.4L1460.1 1175.4L1461.1 1175.4L1462.1 1175.4L1463.1 1175.4L1464.1 1175.4L1465.1 1175.4L1466.1 1175.4L1467.1 1175.4L1468.1 1175.4L1469.1 1175.4L1470.1 1175.4L1471.1 1175.4L1472.1 1175.4L1473.1 1175.4L1474.1 1175.4L1475.1 1175.4L1476.1 1175.4L1477.1 1175.4L1478.1 1175.4L1479.1 1175.4L1480.1 1175.4L1481.1 1175.4L1482.1 1175.4L1483.1 1175.4L1484.1 1175.4L1485.1 1175.4L1486.1 1175.4L1487.1 1175.4L1488.1 1175.4L1489.1 1175.4L1490.1 1175.4L1491.1 1175.4L1492.1 1175.4L1493.1 1175.4L1494.1 1175.4L1495.1 1175.4L1496.1 1175.4L1497.1 1175.4L1498.1 1175.4L1499.1 1175.4L1500.1 1175.4L1501.1 1175.4L1502.1 1175.4L1503.1 1175.4L1504.1 1175.4L1505.1 1175.4L1506.1 1175.4L1507.1 1175.4L1508.1 1175.4L1509 1175.4L1509 1200L48.1 1200Z" fill="#5fa04a" fill-opacity="0.1"/>
<path d="M48.1 1165.7L49.1 1164.1L50.1 1162.5L51.1 1160.8L52.1 1159.1L53.1 1157.6L54.1 1156.1L55.1 1154.9L56.1 1153.7L57.1 1152.6L58.1 1151.4L59.1 1150.3L60.1 1149.4L61.1 1148.6L62.1 1148L63.1 1147.7L64.1 1147.7L65.1 1147.6L66.1 1147.6L67.1 1147.6L68.1 1147.6L69.1 1147.6L70.1 1147.6L71.1 1147.5L72.1 1147.5L73.1 1147.5L74.1 1147.5L75.1 1147.5L76.1 1147.5L77.1 1147.5L78.1 1147.5L79.1 1147.5L80.1 1147.5L81.1 1147.5L82.1 1147.5L83.1 1147.5L84.1 1147.5L85.1 1147.5L86.1 1147.5L87.1 1147.5L88.1 1147.5L89.1 1147.5L90.1 1147.4L91.1 1147.4L92.1 1147.4L93.1 1147.4L94.1 1147.4L95.1 1147.4L96.1 1147.4L97.1 1147.4L98.1 1147.4L99.1 1147.4L100.1 1147.4L101.1 1147.4L102.1 1147.4L103.1 1147.4L104.1 1147.4L105.1 1147.4L106.1 1147.4L107.1 1147.4L108.1 1147.4L109.1 1147.4L110.1 1147.4L111.1 1147.4L112.1 1147.4L113.1 1147.4L114.1 1147.4L115.1 1147.4L116.1 1147.4L117.1 1147.4L118.1 1147.4L119.1 1147.4L120.1 1147.4L121.1 1147.4L122.1 1147.4L123.1 1147.4L124.1 1147.4L125.1 1147.3L126.1 1147.3L127.1 1147.3L128.1 1147.3L129.1 1147.3L130.1 1147.3L131.1 1147.3L132.1 1147.3L133.1 1147.3L134.1 1147.3L135.1 1147.3L136.1 1147.3L137.1 1147.3L138.1 1147.3L139.1 1147.3L140.1 1147.3L141.1 1147.4L142.1 1147.8L143.1 1148.4L144.1 1149.1L145.1 1150L146.1 1150.8L147.1 1151.5L148.1 1152.2L149.1 1153.1L150.1 1153.9L151.1 1154.9L152.1 1155.8L153.1 1156.8L154.1 1157.7L155.1 1158.6L156.1 1159.3L157.1 1160L158.1 1160.6L159.1 1161L160.1 1161.2L161.1 1161.2L162.1 1161.3L163.1 1161.3L164.1 1161.4L165.1 1161.4L166.1 1161.4L167.1 1161.4L168.1 1161.5L169.1 1161.5L170.1 1161.5L171.1 1161.5L172.1 1161.5L173.1 1161.5L174.1 1161.5L175.1 1161.6L176.1 1161.6L177.1 1161.6L178.1 1161.6L179.1 1161.6L180.1 1161.6L181.1 1161.6L182.1 1161.6L183.1 1161.6L184.1 1161.6L185.1 1161.6L186.1 1161.6L187.1 1161.6L188.1 1161.6L189.1 1161.6L190.1 1161.7L191.1 1161.9L192.1 1162.3L193.1 1162.8L194.1 1163.3L195.1 1163.8L196.1 1164.3L197.1 1164.8L198.1 1165.3L199.1 1165.9L200.1 1166.6L201.1 1167.3L202.1 1168L203.1 1168.7L204.1 1169.3L205.1 1169.9L206.1 1170.5L207.1 1170.9L208.1 1171.1L209.1 1171.3L210.1 1171.3L211.1 1171.3L212.1 1171.4L213.1 1171.4L214.1 1171.4L215.1 1171.5L216.1 1171.5L217.1 1171.5L218.1 1171.5L219.1 1171.5L220.1 1171.6L221.1 1171.6L222.1 1171.6L223.1 1171.6L224.1 1171.6L225.1 1171.6L226.1 1171.6L227.1 1171.6L228.1 1171.6L229.1 1171.5L230.1 1171.5L231.1 1171.5L232.1 1171.5L233.1 1171.5L234.1 1171.4L235.1 1171.4L236.1 1171.3L237.1 1171.3L238.1 1171.3L239.1 1171L240.1 1170.4L241.1 1169.4L242.1 1168.2L243.1 1166.8L244.1 1165.4L245.1 1164.1L246.1 1162.8L247.1 1161.4L248.1 1159.8L249.1 1158.1L250.1 1156.3L251.1 1154.4L252.1 1152.6L253.1 1150.8L254.1 1149.2L255.1 1147.7L256.1 1146.4L257.1 1145.4L258.1 1144.7L259.1 1144.3L260.1 1144.2L261.1 1144.1L262.1 1144L263.1 1143.9L264.1 1143.9L265.1 1143.8L266.1 1143.7L267.1 1143.7L268.1 1143.6L269.1 1143.6L270.1 1143.5L271.1 1143.5L272.1 1143.5L273.1 1143.5L274.1 1143.5L275.1 1143.5L276.1 1143.5L277.1 1143.5L278.1 1143.5L279.1 1143.5L280.1 1143.5L281.1 1143.5L282.1 1143.5L283.1 1143.5L284.1 1143.5L285.1 1143.5L286.1 1143.5L287.1 1143.8L288.1 1144.5L289.1 1145.5L290.1 1146.7L291.1 1148L292.1 1149.3L293.1 1150.5L294.1 1151.9L295.1 1153.7L296.1 1155.6L297.1 1157.6L298.1 1159.7L299.1 1161.9L300.1 1164L301.1 1166.1L302.1 1168L303.1 1169.8L304.1 1171.3L305.1 1172.6L306.1 1173.5L307.1 1174L308.1 1174.1L309.1 1174.2L310.1 1174.2L311.1 1174.3L312.1 1174.3L313.1 1174.4L314.1 1174.4L315.1 1174.5L316.1 1174.5L317.1 1174.5L318.1 1174.5L319.1 1174.6L320.1 1174.6L321.1 1174.6L322.1 1174.6L323.1 1174.6L324.1 1174.6L325.1 1174.6L326.1 1174.6L327.1 1174.6L328.1 1174.5L329.1 1174.5L330.1 1174.5L331.1 1174.4L332.1 1174.4L333.1 1174.4L334.1 1174.3L335.1 1174.3L336.1 1174.1L337.1 1173.6L338.1 1172.8L339.1 1171.9L340.1 1170.9L341.1 1169.8L342.1 1168.8L343.1 1167.9L344.1 1166.9L345.1 1165.8L346.1 1164.6L347.1 1163.3L348.1 1161.9L349.1 1160.6L350.1 1159.3L351.1 1158.1L352.1 1157L353.1 1156L354.1 1155.2L355.1 1154.6L356.1 1154.2L357.1 1154L358.1 1154L359.1 1153.9L360.1 1153.9L361.1 1153.9L362.1 1153.8L363.1 1153.8L364.1 1153.8L365.1 1153.8L366.1 1153.7L367.1 1153.7L368.1 1153.7L369.1 1153.7L370.1 1153.7L371.1 1153.7L372.1 1153.7L373.1 1153.7L374.1 1153.7L375.1 1153.7L376.1 1153.7L377.1 1153.8L378.1 1153.8L379.1 1153.8L380.1 1153.8L381.1 1153.9L382.1 1153.9L383.1 1154L384.1 1154L385.1 1154.1L386.1 1154.6L387.1 1155.3L388.1 1156.3L389.1 1157.4L390.1 1158.6L391.1 1159.7L392.1 1160.9L393.1 1162.2L394.1 1163.6L395.1 1165.2L396.1 1166.7L397.1 1168.3L398.1 1169.8L399.1 1171.2L400.1 1172.5L401.1 1173.8L402.1 1175.2L403.1 1176.5L404.1 1177.8L405.1 1178.7L406.1 1179.3L407.1 1179.5L408.1 1179.5L409.1 1179.5L410.1 1179.5L411.1 1179.5L412.1 1179.6L413.1 1179.6L414.1 1179.6L415.1 1179.6L416.1 1179.6L417.1 1179.6L418.1 1179.6L419.1 1179.6L420.1 1179.6L421.1 1179.6L422.1 1179.6L423.1 1179.6L424.1 1179.6L425.1 1179.6L426.1 1179.6L427.1 1179.6L428.1 1179.6L429.1 1179.5L430.1 1179.5L431.1 1179.5L432.1 1179.5L433.1 1179.5L434.1 1179.4L435.1 1179.3L436.1 1179.1L437.1 1178.8L438.1 1178.5L439.1 1178.2L440.1 1178L441.1 1177.7L442.1 1177.3L443.1 1176.9L444.1 1176.5L445.1 1176L446.1 1175.6L447.1 1175.2L448.1 1174.9L449.1 1174.7L450.1 1174.6L451.1 1174.6L452.1 1174.5L453.1 1174.5L454.1 1174.5L455.1 1174.4L456.1 1174.4L457.1 1174.4L458.1 1174.4L459.1 1174.3L460.1 1174.3L461.1 1174.3L462.1 1174.3L463.1 1174.3L464.1 1174.3L465.1 1174.3L466.1 1174.3L467.1 1174.3L468.1 1174.3L469.1 1174.3L470.1 1174.3L471.1 1174.3L472.1 1174.3L473.1 1174.3L474.1 1174.3L475.1 1174.3L476.1 1174.3L477.1 1174.3L478.1 1174.3L479.1 1174.3L480.1 1174.3L481.1 1174.3L482.1 1174.3L483.1 1174.3L484.1 1174.4L485.1 1174.6L486.1 1174.8L487.1 1175L488.1 1175.3L489.1 1175.5L490.1 1175.7L491.1 1175.9L492.1 1176.1L493.1 1176.4L494.1 1176.6L495.1 1176.8L496.1 1177.1L497.1 1177.3L498.1 1177.5L499.1 1177.7L500.1 1177.9L501.1 1178.1L502.1 1178.2L503.1 1178.3L504.1 1178.3L505.1 1178.3L506.1 1178.3L507.1 1178.3L508.1 1178.4L509.1 1178.4L510.1 1178.4L511.1 1178.4L512.1 1178.4L513.1 1178.4L514.1 1178.5L515.1 1178.5L516.1 1178.5L517.1 1178.5L518.1 1178.5L519.1 1178.5L520.1 1178.5L521.1 1178.5L522.1 1178.5L523.1 1178.5L524.1 1178.5L525.1 1178.5L526.1 1178.6L527.1 1178.6L528.1 1178.6L529.1 1178.6L530.1 1178.6L531.1 1178.6L532.1 1178.6L533.1 1178.6L534.1 1178.6L535.1 1178.6L536.1 1178.6L537.1 1178.6L538.1 1178.6L539.1 1178.7L540.1 1178.7L541.1 1178.7L542.1 1178.7L543.1 1178.7L544.1 1178.7L545.1 1178.7L546.1 1178.7L547.1 1178.7L548.1 1178.7L549.1 1178.8L550.1 1178.8L551.1 1178.8L552.1 1178.8L553.1 1178.8L554.1 1178.8L555.1 1178.8L556.1 1178.8L557.1 1178.8L558.1 1178.8L559.1 1178.8L560.1 1178.9L561.1 1178.9L562.1 1178.9L563.1 1178.9L564.1 1178.9L565.1 1178.9L566.1 1178.9L567.1 1178.9L568.1 1178.9L569.1 1178.9L570.1 1178.9L571.1 1178.9L572.1 1178.9L573.1 1178.9L574.1 1178.9L575.1 1178.9L576.1 1178.9L577.1 1178.9L578.1 1178.9L579.1 1178.9L580.1 1178.9L581.1 1178.9L582.1 1178.9L583.1 1178.9L584.1 1178.8L585.1 1178.8L586.1 1178.8L587.1 1178.7L588.1 1178.7L589.1 1178.6L590.1 1178.6L591.1 1178.6L592.1 1178.5L593.1 1178.5L594.1 1178.4L595.1 1178.4L596.1 1178.4L597.1 1178.3L598.1 1178.3L599.1 1178.3L600.1 1178.3L601.1 1178.3L602.1 1178.3L603.1 1178.3L604.1 1178.3L605.1 1178.3L606.1 1178.3L607.1 1178.3L608.1 1178.3L609.1 1178.3L610.1 1178.3L611.1 1178.3L612.1 1178.3L613.1 1178.3L614.1 1178.3L615.1 1178.3L616.1 1178.3L617.1 1178.3L618.1 1178.3L619.1 1178.3L620.1 1178.3L621.1 1178.3L622.1 1178.3L623.1 1178.3L624.1 1178.3L625.1 1178.3L626.1 1178.3L627.1 1178.3L628.1 1178.3L629.1 1178.3L630.1 1178.1L631.1 1177.6L632.1 1176.8L633.1 1175.9L634.1 1175L635.1 1173.8L636.1 1172.3L637.1 1170.4L638.1 1168.3L639.1 1166.2L640.1 1164.1L641.1 1162.2L642.1 1160.5L643.1 1159.1L644.1 1157.6L645.1 1156.2L646.1 1154.7L647.1 1153.5L648.1 1152.3L649.1 1151.5L650.1 1150.9L651.1 1150.7L652.1 1150.6L653.1 1150.5L654.1 1150.4L655.1 1150.3L656.1 1150.3L657.1 1150.2L658.1 1150.2L659.1 1150.1L660.1 1150.1L661.1 1150.1L662.1 1150.1L663.1 1150L664.1 1150L665.1 1150L666.1 1150L667.1 1150L668.1 1150L669.1 1150L670.1 1150L671.1 1149.9L672.1 1149.9L673.1 1149.9L674.1 1149.9L675.1 1149.9L676.1 1149.9L677.1 1149.9L678.1 1149.9L679.1 1149.6L680.1 1148.6L681.1 1147L682.1 1144.9L683.1 1142.6L684.1 1140.3L685.1 1137.9L686.1 1135L687.1 1131.7L688.1 1128.1L689.1 1124.4L690.1 1120.8L691.1 1117.5L692.1 1114.5L693.1 1112.1L694.1 1109.5L695.1 1107L696.1 1104.6L697.1 1102.4L698.1 1100.7L699.1 1099.4L700.1 1098.9L701.1 1098.8L702.1 1098.7L703.1 1098.6L704.1 1098.6L705.1 1098.5L706.1 1098.5L707.1 1098.4L708.1 1098.4L709.1 1098.4L710.1 1098.4L711.1 1098.3L712.1 1098.3L713.1 1098.3L714.1 1098.3L715.1 1098.3L716.1 1098.3L717.1 1098.4L718.1 1098.4L719.1 1098.4L720.1 1098.4L721.1 1098.4L722.1 1098.4L723.1 1098.4L724.1 1098.4L725.1 1098.5L726.1 1098.5L727.1 1098.5L728.1 1099.2L729.1 1100.7L730.1 1102.8L731.1 1105.3L732.1 1107.9L733.1 1110.4L734.1 1113.4L735.1 1116.8L736.1 1120.7L737.1 1124.7L738.1 1128.7L739.1 1132.7L740.1 1136.3L741.1 1139.6L742.1 1142.6L743.1 1145.9L744.1 1149.1L745.1 1152.2L746.1 1155L747.1 1157.5L748.1 1159.3L749.1 1160.5L750.1 1160.9L751.1 1161.2L752.1 1161.6L753.1 1161.8L754.1 1162.1L755.1 1162.3L756.1 1162.5L757.1 1162.6L758.1 1162.7L759.1 1162.8L760.1 1162.9L761.1 1162.9L762.1 1162.9L763.1 1162.9L764.1 1162.9L765.1 1162.9L766.1 1162.9L767.1 1162.9L768.1 1162.9L769.1 1162.9L770.1 1162.8L771.1 1162.8L772.1 1162.8L773.1 1162.8L774.1 1162.8L775.1 1162.8L776.1 1162.7L777.1 1162.6L778.1 1162.1L779.1 1161.4L780.1 1160.7L781.1 1159.8L782.1 1158.8L783.1 1157.6L784.1 1156.4L785.1 1155.1L786.1 1153.9L787.1 1152.8L788.1 1151.6L789.1 1150.3L790.1 1149L791.1 1147.7L792.1 1146.5L793.1 1145.4L794.1 1144.4L795.1 1143.7L796.1 1143.3L797.1 1143.1L798.1 1143.1L799.1 1143.1L800.1 1143L801.1 1143L802.1 1143L803.1 1142.9L804.1 1142.9L805.1 1142.9L806.1 1142.9L807.1 1142.9L808.1 1142.8L809.1 1142.8L810.1 1142.8L811.1 1142.8L812.1 1142.8L813.1 1142.8L814.1 1142.8L815.1 1142.8L816.1 1142.8L817.1 1142.9L818.1 1142.9L819.1 1142.9L820.1 1142.9L821.1 1142.9L822.1 1143L823.1 1143L824.1 1143L825.1 1143.1L826.1 1143.1L827.1 1143.1L828.1 1143.2L829.1 1143.4L830.1 1143.8L831.1 1144.3L832.1 1144.8L833.1 1145.4L834.1 1145.9L835.1 1146.4L836.1 1146.9L837.1 1147.5L838.1 1148.1L839.1 1148.6L840.1 1149.2L841.1 1149.7L842.1 1150.2L843.1 1150.5L844.1 1150.7L845.1 1150.7L846.1 1150.8L847.1 1150.8L848.1 1150.8L849.1 1150.9L850.1 1150.9L851.1 1150.9L852.1 1150.9L853.1 1151L854.1 1151L855.1 1151L856.1 1151L857.1 1151L858.1 1151L859.1 1151L860.1 1151L861.1 1151L862.1 1151L863.1 1151L864.1 1151L865.1 1151L866.1 1151L867.1 1151L868.1 1151L869.1 1151L870.1 1151L871.1 1151L872.1 1151L873.1 1151L874.1 1151L875.1 1151.1L876.1 1151.7L877.1 1152.6L878.1 1153.7L879.1 1155L880.1 1156.2L881.1 1157.4L882.1 1158.8L883.1 1160.2L884.1 1161.8L885.1 1163.4L886.1 1164.9L887.1 1166.3L888.1 1167.6L889.1 1168.6L890.1 1169.7L891.1 1170.7L892.1 1171.7L893.1 1172.6L894.1 1173.3L895.1 1173.8L896.1 1174.1L897.1 1174.1L898.1 1174.1L899.1 1174.2L900.1 1174.2L901.1 1174.2L902.1 1174.2L903.1 1174.2L904.1 1174.2L905.1 1174.2L906.1 1174.3L907.1 1174.3L908.1 1174.3L909.1 1174.3L910.1 1174.3L911.1 1174.3L912.1 1174.3L913.1 1174.2L914.1 1174.2L915.1 1174.2L916.1 1174.2L917.1 1174.2L918.1 1174.1L919.1 1174.1L920.1 1174.1L921.1 1174L922.1 1174L923.1 1174L924.1 1173.9L925.1 1173.7L926.1 1173.3L927.1 1172.8L928.1 1172.2L929.1 1171.6L930.1 1171L931.1 1170.4L932.1 1169.8L933.1 1169.2L934.1 1168.5L935.1 1167.7L936.1 1167L937.1 1166.3L938.1 1165.6L939.1 1164.9L940.1 1164.4L941.1 1163.9L942.1 1163.5L943.1 1163.3L944.1 1163.2L945.1 1163.2L946.1 1163.2L947.1 1163.2L948.1 1163.1L949.1 1163.1L950.1 1163.1L951.1 1163.1L952.1 1163.1L953.1 1163.1L954.1 1163.1L955.1 1163.1L956.1 1163.1L957.1 1163.1L958.1 1163.1L959.1 1163.1L960.1 1163.1L961.1 1163.1L962.1 1163.1L963.1 1163.1L964.1 1163.1L965.1 1163.1L966.1 1163.1L967.1 1163.1L968.1 1163.1L969.1 1163.1L970.1 1163.2L971.1 1163.2L972.1 1163.2L973.1 1163.2L974.1 1163.4L975.1 1163.8L976.1 1164.4L977.1 1165.2L978.1 1166.1L979.1 1167L980.1 1167.8L981.1 1168.5L982.1 1169.4L983.1 1170.3L984.1 1171.3L985.1 1172.3L986.1 1173.3L987.1 1174.2L988.1 1175L989.1 1175.7L990.1 1176.3L991.1 1176.6L992.1 1176.6L993.1 1176.7L994.1 1176.7L995.1 1176.7L996.1 1176.8L997.1 1176.8L998.1 1176.8L999.1 1176.8L1000.1 1176.9L1001.1 1176.9L1002.1 1176.9L1003.1 1176.9L1004.1 1176.9L1005.1 1176.9L1006.1 1176.9L1007.1 1176.9L1008.1 1176.9L1009.1 1176.9L1010.1 1176.9L1011.1 1176.9L1012.1 1176.9L1013.1 1176.9L1014.1 1176.9L1015.1 1176.8L1016.1 1176.8L1017.1 1176.8L1018.1 1176.8L1019.1 1176.7L1020.1 1176.7L1021.1 1176.7L1022.1 1176.6L1023.1 1176.6L1024.1 1176.4L1025.1 1176.2L1026.1 1176L1027.1 1175.7L1028.1 1175.4L1029.1 1175L1030.1 1174.6L1031.1 1174.3L1032.1 1173.9L1033.1 1173.6L1034.1 1173.3L1035.1 1173.1L1036.1 1172.9L1037.1 1172.8L1038.1 1172.7L1039.1 1172.7L1040.1 1172.7L1041.1 1172.6L1042.1 1172.6L1043.1 1172.6L1044.1 1172.6L1045.1 1172.5L1046.1 1172.5L1047.1 1172.5L1048.1 1172.5L1049.1 1172.5L1050.1 1172.5L1051.1 1172.4L1052.1 1172.4L1053.1 1172.4L1054.1 1172.4L1055.1 1172.4L1056.1 1172.4L1057.1 1172.4L1058.1 1172.4L1059.1 1172.4L1060.1 1172.4L1061.1 1172.4L1062.1 1172.4L1063.1 1172.5L1064.1 1172.5L1065.1 1172.5L1066.1 1172.5L1067.1 1172.5L1068.1 1172.5L1069.1 1172.5L1070.1 1172.6L1071.1 1172.6L1072.1 1172.7L1073.1 1172.9L1074.1 1173.3L1075.1 1173.7L1076.1 1174.2L1077.1 1174.7L1078.1 1175.2L1079.1 1175.7L1080.1 1176.1L1081.1 1176.6L1082.1 1177.2L1083.1 1177.8L1084.1 1178.4L1085.1 1178.9L1086.1 1179.5L1087.1 1179.9L1088.1 1180.2L1089.1 1180.4L1090.1 1180.5L1091.1 1180.6L1092.1 1180.6L1093.1 1180.7L1094.1 1180.7L1095.1 1180.8L1096.1 1180.8L1097.1 1180.8L1098.1 1180.9L1099.1 1180.9L1100.1 1180.9L1101.1 1180.9L1102.1 1180.9L1103.1 1180.9L1104.1 1180.9L1105.1 1180.9L1106.1 1180.9L1107.1 1180.9L1108.1 1180.9L1109.1 1180.9L1110.1 1180.9L1111.1 1180.9L1112.1 1180.9L1113.1 1180.8L1114.1 1180.8L1115.1 1180.8L1116.1 1180.7L1117.1 1180.7L1118.1 1180.6L1119.1 1179.9L1120.1 1178.5L1121.1 1176.7L1122.1 1174.7L1123.1 1172.8L1124.1 1170.5L1125.1 1167.9L1126.1 1165L1127.1 1161.9L1128.1 1158.8L1129.1 1155.7L1130.1 1152.8L1131.1 1150.1L1132.1 1147.6L1133.1 1145L1134.1 1142.3L1135.1 1139.8L1136.1 1137.4L1137.1 1135.2L1138.1 1133.4L1139.1 1132L1140.1 1131L1141.1 1130.2L1142.1 1129.6L1143.1 1129L1144.1 1128.5L1145.1 1128L1146.1 1127.5L1147.1 1127L1148.1 1126.3L1149.1 1125.4L1150.1 1124.7L1151.1 1124.3L1152.1 1123.9L1153.1 1123.6L1154.1 1123.2L1155.1 1123L1156.1 1122.7L1157.1 1122.5L1158.1 1122.3L1159.1 1122.1L1160.1 1121.9L1161.1 1121.7L1162.1 1121.5L1163.1 1121.4L1164.1 1121.2L1165.1 1121.1L1166.1 1121.1L1167.1 1121.2L1168.1 1121.8L1169.1 1122.6L1170.1 1123.8L1171.1 1125L1172.1 1126.7L1173.1 1129.1L1174.1 1131.9L1175.1 1134.9L1176.1 1137.9L1177.1 1140.6L1178.1 1143.5L1179.1 1146.5L1180.1 1149.5L1181.1 1152.4L1182.1 1155.1L1183.1 1157.4L1184.1 1159.4L1185.1 1161.5L1186.1 1163.5L1187.1 1165.2L1188.1 1166.4L1189.1 1167L1190.1 1167.1L1191.1 1167.2L1192.1 1167.2L1193.1 1167.2L1194.1 1167.3L1195.1 1167.3L1196.1 1167.3L1197.1 1167.3L1198.1 1167.4L1199.1 1167.4L1200.1 1167.4L1201.1 1167.4L1202.1 1167.4L1203.1 1167.4L1204.1 1167.4L1205.1 1167.4L1206.1 1167.4L1207.1 1167.4L1208.1 1167.4L1209.1 1167.4L1210.1 1167.4L1211.1 1167.4L1212.1 1167.3L1213.1 1167.3L1214.1 1167.3L1215.1 1167.3L1216.1 1167.3L1217.1 1167.2L1218.1 1167.1L1219.1 1166.7L1220.1 1166.2L1221.1 1165.7L1222.1 1165L1223.1 1164.4L1224.1 1163.8L1225.1 1163.3L1226.1 1162.9L1227.1 1162.4L1228.1 1161.8L1229.1 1161.3L1230.1 1160.8L1231.1 1160.3L1232.1 1159.9L1233.1 1159.6L1234.1 1159.3L1235.1 1159.2L1236.1 1159.2L1237.1 1159.2L1238.1 1159.2L1239.1 1159.1L1240.1 1159.1L1241.1 1159.1L1242.1 1159.1L1243.1 1159.1L1244.1 1159.1L1245.1 1159.1L1246.1 1159.1L1247.1 1159.1L1248.1 1159L1249.1 1159L1250.1 1159L1251.1 1159L1252.1 1159L1253.1 1159L1254.1 1159L1255.1 1159L1256.1 1159L1257.1 1159L1258.1 1159L1259.1 1159L1260.1 1159L1261.1 1159L1262.1 1159L1263.1 1159L1264.1 1159L1265.1 1159L1266.1 1159.1L1267.1 1159.5L1268.1 1160L1269.1 1160.7L1270.1 1161.5L1271.1 1162.4L1272.1 1163.2L1273.1 1164.1L1274.1 1165.2L1275.1 1166.3L1276.1 1167.6L1277.1 1168.8L1278.1 1170L1279.1 1171.1L1280.1 1172.1L1281.1 1172.9L1282.1 1173.8L1283.1 1174.6L1284.1 1175.3L1285.1 1175.9L1286.1 1176.4L1287.1 1176.6L1288.1 1176.7L1289.1 1176.7L1290.1 1176.7L1291.1 1176.8L1292.1 1176.8L1293.1 1176.8L1294.1 1176.9L1295.1 1176.9L1296.1 1176.9L1297.1 1176.9L1298.1 1176.9L1299.1 1176.9L1300.1 1176.9L1301.1 1176.9L1302.1 1176.9L1303.1 1176.9L1304.1 1176.9L1305.1 1176.9L1306.1 1176.9L1307.1 1176.9L1308.1 1176.9L1309.1 1176.8L1310.1 1176.8L1311.1 1176.8L1312.1 1176.7L1313.1 1176.7L1314.1 1176.7L1315.1 1176.6L1316.1 1176.6L1317.1 1176.4L1318.1 1176L1319.1 1175.6L1320.1 1175.1L1321.1 1174.6L1322.1 1174.1L1323.1 1173.6L1324.1 1173.2L1325.1 1172.8L1326.1 1172.3L1327.1 1171.8L1328.1 1171.4L1329.1 1170.9L1330.1 1170.5L1331.1 1170.1L1332.1 1169.8L1333.1 1169.7L1334.1 1169.6L1335.1 1169.6L1336.1 1169.5L1337.1 1169.5L1338.1 1169.5L1339.1 1169.5L1340.1 1169.5L1341.1 1169.4L1342.1 1169.4L1343.1 1169.4L1344.1 1169.4L1345.1 1169.4L1346.1 1169.4L1347.1 1169.4L1348.1 1169.4L1349.1 1169.4L1350.1 1169.4L1351.1 1169.5L1352.1 1169.5L1353.1 1169.5L1354.1 1169.5L1355.1 1169.6L1356.1 1169.6L1357.1 1169.6L1358.1 1169.7L1359.1 1169.7L1360.1 1169.8L1361.1 1169.8L1362.1 1169.9L1363.1 1170L1364.1 1170.1L1365.1 1170.2L1366.1 1170.3L1367.1 1170.5L1368.1 1170.6L1369.1 1170.8L1370.1 1170.9L1371.1 1171.1L1372.1 1171.2L1373.1 1171.3L1374.1 1171.5L1375.1 1171.6L1376.1 1171.7L1377.1 1171.9L1378.1 1172L1379.1 1172.1L1380.1 1172.2L1381.1 1172.3L1382.1 1172.4L1383.1 1172.4L1384.1 1172.4L1385.1 1172.4L1386.1 1172.4L1387.1 1172.4L1388.1 1172.4L1389.1 1172.4L1390.1 1172.4L1391.1 1172.4L1392.1 1172.4L1393.1 1172.4L1394.1 1172.4L1395.1 1172.4L1396.1 1172.4L1397.1 1172.4L1398.1 1172.4L1399.1 1172.4L1400.1 1172.4L1401.1 1172.4L1402.1 1172.4L1403.1 1172.4L1404.1 1172.4L1405.1 1172.4L1406.1 1172.4L1407.1 1172.4L1408.1 1172.3L1409.1 1172.3L1410.1 1172.3L1411.1 1172.3L1412.1 1172.1L1413.1 1170.9L1414.1 1168.6L1415.1 1165.7L1416.1 1162.7L1417.1 1158.7L1418.1 1153.8L1419.1 1148.2L1420.1 1142.6L1421.1 1137.3L1422.1 1132.1L1423.1 1126.8L1424.1 1121.6L1425.1 1116.8L1426.1 1112.5L1427.1 1108.5L1428.1 1104.6L1429.1 1101.1L1430.1 1098.2L1431.1 1096.1L1432.1 1094.5L1433.1 1093.1L1434.1 1092.1L1435.1 1091.7L1436.1 1091.6L1437.1 1091.6L1438.1 1091.6L1439.1 1091.6L1440.1 1091.5L1441.1 1091.5L1442.1 1091.5L1443.1 1091.5L1444.1 1091.5L1445.1 1091.5L1446.1 1091.5L1447.1 1091.5L1448.1 1091.5L1449.1 1091.5L1450.1 1091.5L1451.1 1091.5L1452.1 1091.5L1453.1 1091.5L1454.1 1091.5L1455.1 1091.5L1456.1 1091.5L1457.1 1091.5L1458.1 1091.5L1459.1 1091.5L1460.1 1091.5L1461.1 1091.5L1462.1 1091.5L1463.1 1091.5L1464.1 1091.5L1465.1 1091.5L1466.1 1091.5L1467.1 1091.5L1468.1 1091.5L1469.1 1091.5L1470.1 1091.5L1471.1 1091.5L1472.1 1091.5L1473.1 1091.5L1474.1 1091.5L1475.1 1091.5L1476.1 1091.5L1477.1 1091.5L1478.1 1091.5L1479.1 1091.5L1480.1 1091.5L1481.1 1091.5L1482.1 1091.5L1483.1 1091.5L1484.1 1091.5L1485.1 1091.5L1486.1 1091.5L1487.1 1091.5L1488.1 1091.5L1489.1 1091.5L1490.1 1091.5L1491.1 1091.5L1492.1 1091.5L1493.1 1091.5L1494.1 1091.5L1495.1 1091.5L1496.1 1091.5L1497.1 1091.5L1498.1 1091.5L1499.1 1091.5L1500.1 1091.5L1501.1 1091.5L1502.1 1091.5L1503.1 1091.5L1504.1 1091.5L1505.1 1091.5L1506.1 1091.5L1507.1 1091.5L1508.1 1091.5L1509 1091.5" fill="none" stroke="#dfa02f" stroke-width="1" stroke-linejoin="round"/>
<path d="M48.1 1173.3L49.1 1172.8L50.1 1172.4L51.1 1171.9L52.1 1171.4L53.1 1171L54.1 1170.6L55.1 1170.3L56.1 1169.9L57.1 1169.6L58.1 1169.3L59.1 1169L60.1 1168.7L61.1 1168.5L62.1 1168.3L63.1 1168.2L64.1 1168.2L65.1 1168.2L66.1 1168.2L67.1 1168.2L68.1 1168.2L69.1 1168.2L70.1 1168.2L71.1 1168.2L72.1 1168.2L73.1 1168.2L74.1 1168.2L75.1 1168.2L76.1 1168.2L77.1 1168.2L78.1 1168.2L79.1 1168.2L80.1 1168.2L81.1 1168.2L82.1 1168.2L83.1 1168.2L84.1 1168.2L85.1 1168.2L86.1 1168.2L87.1 1168.2L88.1 1168.2L89.1 1168.2L90.1 1168.2L91.1 1168.2L92.1 1168.2L93.1 1168.3L94.1 1168.5L95.1 1168.8L96.1 1169.1L97.1 1169.4L98.1 1169.8L99.1 1170.1L100.1 1170.4L101.1 1170.8L102.1 1171.1L103.1 1171.6L104.1 1172L105.1 1172.3L106.1 1172.7L107.1 1173L108.1 1173.3L109.1 1173.5L110.1 1173.6L111.1 1173.6L112.1 1173.7L113.1 1173.7L114.1 1173.7L115.1 1173.8L116.1 1173.8L117.1 1173.8L118.1 1173.8L119.1 1173.9L120.1 1173.9L121.1 1173.9L122.1 1173.9L123.1 1173.9L124.1 1173.9L125.1 1173.9L126.1 1173.9L127.1 1173.9L128.1 1173.9L129.1 1173.9L130.1 1173.9L131.1 1173.9L132.1 1173.9L133.1 1173.9L134.1 1173.8L135.1 1173.8L136.1 1173.8L137.1 1173.8L138.1 1173.7L139.1 1173.7L140.1 1173.7L141.1 1173.6L142.1 1173.6L143.1 1173.5L144.1 1173.5L145.1 1173.4L146.1 1173.3L147.1 1173.2L148.1 1173L149.1 1172.9L150.1 1172.8L151.1 1172.6L152.1 1172.5L153.1 1172.3L154.1 1172.2L155.1 1172.1L156.1 1171.9L157.1 1171.8L158.1 1171.7L159.1 1171.7L160.1 1171.6L161.1 1171.6L162.1 1171.5L163.1 1171.5L164.1 1171.5L165.1 1171.4L166.1 1171.4L167.1 1171.4L168.1 1171.4L169.1 1171.4L170.1 1171.3L171.1 1171.3L172.1 1171.3L173.1 1171.3L174.1 1171.3L175.1 1171.3L176.1 1171.2L177.1 1171.2L178.1 1171.2L179.1 1171.2L180.1 1171.2L181.1 1171.2L182.1 1171.2L183.1 1171.2L184.1 1171.2L185.1 1171.2L186.1 1171.2L187.1 1171.1L188.1 1171.1L189.1 1171.1L190.1 1171L191.1 1170.7L192.1 1170L193.1 1169.1L194.1 1168.1L195.1 1167L196.1 1166L197.1 1165L198.1 1164.2L199.1 1163.2L200.1 1162.1L201.1 1161L202.1 1159.9L203.1 1158.8L204.1 1157.8L205.1 1156.8L206.1 1156L207.1 1155.3L208.1 1154.8L209.1 1154.4L210.1 1154.4L211.1 1154.3L212.1 1154.3L213.1 1154.3L214.1 1154.3L215.1 1154.3L216.1 1154.2L217.1 1154.2L218.1 1154.2L219.1 1154.2L220.1 1154.2L221.1 1154.2L222.1 1154.2L223.1 1154.2L224.1 1154.2L225.1 1154.2L226.1 1154.2L227.1 1154.2L228.1 1154.2L229.1 1154.2L230.1 1154.2L231.1 1154.3L232.1 1154.3L233.1 1154.3L234.1 1154.4L235.1 1154.4L236.1 1154.4L237.1 1154.5L238.1 1154.5L239.1 1154.8L240.1 1155.5L241.1 1156.6L242.1 1158L243.1 1159.4L244.1 1161L245.1 1162.4L246.1 1163.6L247.1 1165L248.1 1166.4L249.1 1168L250.1 1169.6L251.1 1171.2L252.1 1172.8L253.1 1174.3L254.1 1175.7L255.1 1176.9L256.1 1178L257.1 1178.8L258.1 1179.4L259.1 1179.6L260.1 1179.7L261.1 1179.7L262.1 1179.8L263.1 1179.9L264.1 1179.9L265.1 1179.9L266.1 1180L267.1 1180L268.1 1180L269.1 1180.1L270.1 1180.1L271.1 1180.1L272.1 1180.1L273.1 1180.1L274.1 1180.1L275.1 1180.1L276.1 1180.1L277.1 1180.1L278.1 1180.1L279.1 1180.1L280.1 1180.1L281.1 1180.1L282.1 1180L283.1 1180L284.1 1180L285.1 1180L286.1 1180L287.1 1179.9L288.1 1179L289.1 1177.3L290.1 1175.1L291.1 1172.5L292.1 1169.6L293.1 1166.6L294.1 1162.3L295.1 1156.9L296.1 1150.8L297.1 1144.4L298.1 1138L299.1 1132L300.1 1126.7L301.1 1122.5L302.1 1118.7L303.1 1114.8L304.1 1111.1L305.1 1107.7L306.1 1104.9L307.1 1102.9L308.1 1101.8L309.1 1101.6L310.1 1101.5L311.1 1101.4L312.1 1101.4L313.1 1101.3L314.1 1101.2L315.1 1101.2L316.1 1101.1L317.1 1101.1L318.1 1101.1L319.1 1101.1L320.1 1101L321.1 1101L322.1 1101L323.1 1101L324.1 1101L325.1 1101L326.1 1101L327.1 1101.1L328.1 1101.1L329.1 1101.1L330.1 1101.1L331.1 1101.1L332.1 1101.2L333.1 1101.2L334.1 1101.3L335.1 1101.3L336.1 1101.4L337.1 1102.3L338.1 1103.9L339.1 1106L340.1 1108.7L341.1 1111.5L342.1 1114.5L343.1 1117.5L344.1 1121.2L345.1 1125.6L346.1 1130.5L347.1 1135.7L348.1 1140.9L349.1 1146L350.1 1150.7L351.1 1154.8L352.1 1158.7L353.1 1162.9L354.1 1167L355.1 1170.6L356.1 1173.5L357.1 1175.3L358.1 1175.8L359.1 1175.9L360.1 1175.9L361.1 1176L362.1 1176.1L363.1 1176.1L364.1 1176.1L365.1 1176.2L366.1 1176.2L367.1 1176.2L368.1 1176.2L369.1 1176.3L370.1 1176.3L371.1 1176.3L372.1 1176.3L373.1 1176.3L374.1 1176.3L375.1 1176.2L376.1 1176.2L377.1 1176.2L378.1 1176.2L379.1 1176.2L380.1 1176.1L381.1 1176.1L382.1 1176.1L383.1 1176L384.1 1176L385.1 1175.8L386.1 1174.8L387.1 1173.2L388.1 1171.1L389.1 1168.7L390.1 1166.1L391.1 1163.6L392.1 1160.9L393.1 1157.6L394.1 1153.8L395.1 1149.8L396.1 1145.7L397.1 1141.6L398.1 1137.8L399.1 1134.3L400.1 1131.3L401.1 1128.4L402.1 1125.5L403.1 1122.6L404.1 1120.1L405.1 1118.2L406.1 1117L407.1 1116.7L408.1 1116.7L409.1 1116.6L410.1 1116.6L411.1 1116.5L412.1 1116.5L413.1 1116.5L414.1 1116.5L415.1 1116.4L416.1 1116.4L417.1 1116.4L418.1 1116.4L419.1 1116.4L420.1 1116.4L421.1 1116.4L422.1 1116.4L423.1 1116.4L424.1 1116.4L425.1 1116.4L426.1 1116.4L427.1 1116.4L428.1 1116.5L429.1 1116.5L430.1 1116.5L431.1 1116.5L432.1 1116.6L433.1 1116.7L434.1 1117.3L435.1 1118.6L436.1 1120.2L437.1 1122L438.1 1124L439.1 1126L440.1 1128.7L441.1 1131.8L442.1 1135.3L443.1 1138.9L444.1 1142.6L445.1 1146.1L446.1 1149.4L447.1 1152.1L448.1 1154.9L449.1 1157.8L450.1 1160.7L451.1 1163.4L452.1 1165.9L453.1 1167.8L454.1 1169.2L455.1 1169.9L456.1 1170L457.1 1170.2L458.1 1170.3L459.1 1170.4L460.1 1170.5L461.1 1170.5L462.1 1170.6L463.1 1170.7L464.1 1170.7L465.1 1170.7L466.1 1170.7L467.1 1170.7L468.1 1170.7L469.1 1170.7L470.1 1170.7L471.1 1170.7L472.1 1170.7L473.1 1170.7L474.1 1170.7L475.1 1170.7L476.1 1170.6L477.1 1170.6L478.1 1170.6L479.1 1170.6L480.1 1170.6L481.1 1170.6L482.1 1170.6L483.1 1170.7L484.1 1170.9L485.1 1171.1L486.1 1171.5L487.1 1171.9L488.1 1172.3L489.1 1172.8L490.1 1173.2L491.1 1173.6L492.1 1174.1L493.1 1174.6L494.1 1175.3L495.1 1175.9L496.1 1176.6L497.1 1177.2L498.1 1177.8L499.1 1178.4L500.1 1178.9L501.1 1179.4L502.1 1179.7L503.1 1179.9L504.1 1180L505.1 1180L506.1 1180L507.1 1180.1L508.1 1180.1L509.1 1180.1L510.1 1180.2L511.1 1180.2L512.1 1180.2L513.1 1180.2L514.1 1180.2L515.1 1180.2L516.1 1180.3L517.1 1180.3L518.1 1180.3L519.1 1180.3L520.1 1180.3L521.1 1180.3L522.1 1180.3L523.1 1180.3L524.1 1180.3L525.1 1180.2L526.1 1180.2L527.1 1180.2L528.1 1180.2L529.1 1180.2L530.1 1180.2L531.1 1180.1L532.1 1180.1L533.1 1180.1L534.1 1180L535.1 1180L536.1 1180L537.1 1179.9L538.1 1179.9L539.1 1179.8L540.1 1179.7L541.1 1179.6L542.1 1179.5L543.1 1179.4L544.1 1179.3L545.1 1179.2L546.1 1179L547.1 1178.9L548.1 1178.9L549.1 1178.8L550.1 1178.8L551.1 1178.8L552.1 1178.8L553.1 1178.8L554.1 1178.8L555.1 1178.8L556.1 1178.8L557.1 1178.8L558.1 1178.8L559.1 1178.8L560.1 1178.8L561.1 1178.8L562.1 1178.8L563.1 1178.8L564.1 1178.8L565.1 1178.8L566.1 1178.8L567.1 1178.8L568.1 1178.8L569.1 1178.8L570.1 1178.8L571.1 1178.9L572.1 1178.9L573.1 1178.9L574.1 1178.9L575.1 1178.9L576.1 1178.9L577.1 1178.9L578.1 1178.9L579.1 1178.9L580.1 1179L581.1 1179.2L582.1 1179.4L583.1 1179.6L584.1 1179.9L585.1 1180.2L586.1 1180.4L587.1 1180.7L588.1 1181L589.1 1181.3L590.1 1181.7L591.1 1182L592.1 1182.4L593.1 1182.8L594.1 1183.2L595.1 1183.6L596.1 1184L597.1 1184.3L598.1 1184.5L599.1 1184.8L600.1 1184.9L601.1 1185L602.1 1185L603.1 1185.1L604.1 1185.2L605.1 1185.2L606.1 1185.2L607.1 1185.3L608.1 1185.3L609.1 1185.4L610.1 1185.4L611.1 1185.4L612.1 1185.4L613.1 1185.4L614.1 1185.5L615.1 1185.5L616.1 1185.5L617.1 1185.5L618.1 1185.5L619.1 1185.5L620.1 1185.5L621.1 1185.4L622.1 1185.4L623.1 1185.4L624.1 1185.4L625.1 1185.4L626.1 1185.4L627.1 1185.4L628.1 1185.3L629.1 1185.3L630.1 1184.9L631.1 1183.8L632.1 1182.2L633.1 1180.4L634.1 1178.4L635.1 1175.9L636.1 1172.6L637.1 1168.6L638.1 1164.2L639.1 1159.6L640.1 1155.2L641.1 1151.1L642.1 1147.7L643.1 1144.9L644.1 1142.1L645.1 1139.3L646.1 1136.7L647.1 1134.3L648.1 1132.2L649.1 1130.6L650.1 1129.6L651.1 1129.3L652.1 1129.2L653.1 1129.1L654.1 1129L655.1 1128.9L656.1 1128.8L657.1 1128.8L658.1 1128.7L659.1 1128.7L660.1 1128.7L661.1 1128.6L662.1 1128.6L663.1 1128.6L664.1 1128.6L665.1 1128.6L666.1 1128.6L667.1 1128.6L668.1 1128.6L669.1 1128.6L670.1 1128.6L671.1 1128.6L672.1 1128.6L673.1 1128.6L674.1 1128.6L675.1 1128.6L676.1 1128.6L677.1 1128.6L678.1 1128.6L679.1 1128.7L680.1 1129.3L681.1 1130.2L682.1 1131.3L683.1 1132.5L684.1 1133.7L685.1 1134.9L686.1 1136.3L687.1 1137.9L688.1 1139.5L689.1 1141.2L690.1 1142.9L691.1 1144.4L692.1 1145.8L693.1 1147L694.1 1148.2L695.1 1149.4L696.1 1150.5L697.1 1151.6L698.1 1152.6L699.1 1153.3L700.1 1153.8L701.1 1154L702.1 1154.1L703.1 1154.1L704.1 1154.2L705.1 1154.2L706.1 1154.3L707.1 1154.3L708.1 1154.3L709.1 1154.3L710.1 1154.3L711.1 1154.4L712.1 1154.4L713.1 1154.4L714.1 1154.4L715.1 1154.4L716.1 1154.4L717.1 1154.3L718.1 1154.3L719.1 1154.3L720.1 1154.3L721.1 1154.3L722.1 1154.3L723.1 1154.3L724.1 1154.3L725.1 1154.2L726.1 1154.2L727.1 1154.2L728.1 1153.6L729.1 1152.1L730.1 1150.1L731.1 1147.7L732.1 1145L733.1 1142.4L734.1 1139L735.1 1134.7L736.1 1129.9L737.1 1124.8L738.1 1119.4L739.1 1114.2L740.1 1109.3L741.1 1105L742.1 1100.8L743.1 1096.3L744.1 1091.8L745.1 1087.5L746.1 1083.8L747.1 1080.9L748.1 1079.1L749.1 1078.7L750.1 1078.6L751.1 1078.5L752.1 1078.4L753.1 1078.3L754.1 1078.2L755.1 1078.2L756.1 1078.1L757.1 1078L758.1 1078L759.1 1078L760.1 1078L761.1 1077.9L762.1 1077.9L763.1 1077.9L764.1 1077.9L765.1 1077.9L766.1 1078L767.1 1078L768.1 1078L769.1 1078L770.1 1078L771.1 1078L772.1 1078L773.1 1078L774.1 1078.1L775.1 1078.1L776.1 1078.3L777.1 1079.5L778.1 1081.4L779.1 1083.8L780.1 1086.5L781.1 1090.5L782.1 1096.3L783.1 1103.4L784.1 1111.1L785.1 1118.8L786.1 1125.9L787.1 1131.9L788.1 1137.7L789.1 1143.5L790.1 1148.9L791.1 1153.9L792.1 1158.1L793.1 1161.7L794.1 1165.1L795.1 1168.4L796.1 1171.2L797.1 1173.4L798.1 1174.5L799.1 1174.7L800.1 1174.8L801.1 1174.9L802.1 1174.9L803.1 1175L804.1 1175.1L805.1 1175.1L806.1 1175.2L807.1 1175.2L808.1 1175.2L809.1 1175.2L810.1 1175.3L811.1 1175.3L812.1 1175.3L813.1 1175.3L814.1 1175.3L815.1 1175.3L816.1 1175.3L817.1 1175.3L818.1 1175.3L819.1 1175.3L820.1 1175.3L821.1 1175.3L822.1 1175.3L823.1 1175.3L824.1 1175.3L825.1 1175.3L826.1 1175.3L827.1 1175.3L828.1 1175.4L829.1 1175.6L830.1 1175.8L831.1 1176.2L832.1 1176.5L833.1 1176.8L834.1 1177.2L835.1 1177.4L836.1 1177.6L837.1 1177.8L838.1 1178.1L839.1 1178.3L840.1 1178.5L841.1 1178.7L842.1 1178.9L843.1 1179.1L844.1 1179.2L845.1 1179.3L846.1 1179.4L847.1 1179.4L848.1 1179.5L849.1 1179.5L850.1 1179.5L851.1 1179.5L852.1 1179.5L853.1 1179.6L854.1 1179.6L855.1 1179.6L856.1 1179.6L857.1 1179.6L858.1 1179.6L859.1 1179.6L860.1 1179.6L861.1 1179.6L862.1 1179.6L863.1 1179.6L864.1 1179.6L865.1 1179.6L866.1 1179.6L867.1 1179.6L868.1 1179.6L869.1 1179.5L870.1 1179.5L871.1 1179.5L872.1 1179.5L873.1 1179.5L874.1 1179.5L875.1 1179.4L876.1 1179.3L877.1 1179.2L878.1 1179.1L879.1 1178.9L880.1 1178.7L881.1 1178.4L882.1 1178.2L883.1 1178L884.1 1177.8L885.1 1177.6L886.1 1177.4L887.1 1177.2L888.1 1177.1L889.1 1177.1L890.1 1177L891.1 1177L892.1 1177L893.1 1176.9L894.1 1176.9L895.1 1176.9L896.1 1176.9L897.1 1176.8L898.1 1176.8L899.1 1176.8L900.1 1176.8L901.1 1176.8L902.1 1176.7L903.1 1176.7L904.1 1176.7L905.1 1176.7L906.1 1176.7L907.1 1176.7L908.1 1176.6L909.1 1176.6L910.1 1176.6L911.1 1176.6L912.1 1176.6L913.1 1176.5L914.1 1176.5L915.1 1176.5L916.1 1176.5L917.1 1176.5L918.1 1176.5L919.1 1176.4L920.1 1176.4L921.1 1176.4L922.1 1176.4L923.1 1176.3L924.1 1176.3L925.1 1176.2L926.1 1175.7L927.1 1174.8L928.1 1173.6L929.1 1172.3L930.1 1170.9L931.1 1169.5L932.1 1168.4L933.1 1167.3L934.1 1166.2L935.1 1165L936.1 1163.8L937.1 1162.5L938.1 1161.4L939.1 1160.3L940.1 1159.3L941.1 1158.5L942.1 1157.9L943.1 1157.5L944.1 1157.4L945.1 1157.3L946.1 1157.3L947.1 1157.2L948.1 1157.2L949.1 1157.2L950.1 1157.2L951.1 1157.1L952.1 1157.1L953.1 1157.1L954.1 1157.1L955.1 1157.1L956.1 1157L957.1 1157L958.1 1157L959.1 1157L960.1 1157L961.1 1157L962.1 1157L963.1 1157L964.1 1157.1L965.1 1157.1L966.1 1157.1L967.1 1157.1L968.1 1157.1L969.1 1157.1L970.1 1157.1L971.1 1157.2L972.1 1157.2L973.1 1157.2L974.1 1157.3L975.1 1157.6L976.1 1158.1L977.1 1158.6L978.1 1159.2L979.1 1159.8L980.1 1160.4L981.1 1160.9L982.1 1161.5L983.1 1162.1L984.1 1162.8L985.1 1163.5L986.1 1164.2L987.1 1164.9L988.1 1165.5L989.1 1165.9L990.1 1166.3L991.1 1166.5L992.1 1166.6L993.1 1166.6L994.1 1166.7L995.1 1166.7L996.1 1166.7L997.1 1166.8L998.1 1166.8L999.1 1166.8L1000.1 1166.8L1001.1 1166.9L1002.1 1166.9L1003.1 1166.9L1004.1 1166.9L1005.1 1166.9L1006.1 1166.9L1007.1 1166.9L1008.1 1166.9L1009.1 1166.9L1010.1 1166.9L1011.1 1166.9L1012.1 1166.9L1013.1 1166.9L1014.1 1166.8L1015.1 1166.8L1016.1 1166.8L1017.1 1166.8L1018.1 1166.8L1019.1 1166.7L1020.1 1166.7L1021.1 1166.7L1022.1 1166.6L1023.1 1166.6L1024.1 1166.6L1025.1 1166.5L1026.1 1166.4L1027.1 1166.3L1028.1 1166.2L1029.1 1166L1030.1 1165.9L1031.1 1165.7L1032.1 1165.5L1033.1 1165.4L1034.1 1165.2L1035.1 1165.1L1036.1 1165L1037.1 1164.9L1038.1 1164.9L1039.1 1164.8L1040.1 1164.8L1041.1 1164.8L1042.1 1164.8L1043.1 1164.8L1044.1 1164.7L1045.1 1164.7L1046.1 1164.7L1047.1 1164.7L1048.1 1164.7L1049.1 1164.7L1050.1 1164.6L1051.1 1164.6L1052.1 1164.6L1053.1 1164.6L1054.1 1164.6L1055.1 1164.6L1056.1 1164.6L1057.1 1164.5L1058.1 1164.5L1059.1 1164.5L1060.1 1164.5L1061.1 1164.5L1062.1 1164.5L1063.1 1164.5L1064.1 1164.5L1065.1 1164.5L1066.1 1164.5L1067.1 1164.4L1068.1 1164.4L1069.1 1164.4L1070.1 1163.9L1071.1 1161.9L1072.1 1158.8L1073.1 1155L1074.1 1150.9L1075.1 1146.3L1076.1 1140L1077.1 1132.5L1078.1 1124.2L1079.1 1115.6L1080.1 1107.1L1081.1 1099.3L1082.1 1091.3L1083.1 1082.9L1084.1 1074.4L1085.1 1066.2L1086.1 1058.8L1087.1 1052.6L1088.1 1047.9L1089.1 1043.5L1090.1 1039.4L1091.1 1036.1L1092.1 1034.1L1093.1 1033.6L1094.1 1033.5L1095.1 1033.4L1096.1 1033.4L1097.1 1033.3L1098.1 1033.3L1099.1 1033.2L1100.1 1033.2L1101.1 1033.2L1102.1 1033.1L1103.1 1033.1L1104.1 1033.1L1105.1 1033.1L1106.1 1033.1L1107.1 1033.1L1108.1 1033.1L1109.1 1033.1L1110.1 1033.2L1111.1 1033.2L1112.1 1033.2L1113.1 1033.2L1114.1 1033.3L1115.1 1033.3L1116.1 1033.4L1117.1 1033.4L1118.1 1033.6L1119.1 1035.2L1120.1 1038.4L1121.1 1042.7L1122.1 1047.5L1123.1 1052.5L1124.1 1058.6L1125.1 1066.2L1126.1 1074.7L1127.1 1083.6L1128.1 1092.6L1129.1 1101.2L1130.1 1109.1L1131.1 1117.3L1132.1 1125.5L1133.1 1133.6L1134.1 1141.2L1135.1 1148.2L1136.1 1154.2L1137.1 1159.7L1138.1 1165.3L1139.1 1170.3L1140.1 1174L1141.1 1175.7L1142.1 1175.9L1143.1 1176L1144.1 1176.1L1145.1 1176.1L1146.1 1176.2L1147.1 1176.2L1148.1 1176.2L1149.1 1176.3L1150.1 1176.3L1151.1 1176.3L1152.1 1176.3L1153.1 1176.3L1154.1 1176.3L1155.1 1176.3L1156.1 1176.3L1157.1 1176.3L1158.1 1176.3L1159.1 1176.3L1160.1 1176.3L1161.1 1176.3L1162.1 1176.3L1163.1 1176.3L1164.1 1176.3L1165.1 1176.3L1166.1 1176.3L1167.1 1176.3L1168.1 1176.3L1169.1 1176.4L1170.1 1176.6L1171.1 1176.7L1172.1 1176.9L1173.1 1177.1L1174.1 1177.2L1175.1 1177.4L1176.1 1177.6L1177.1 1177.8L1178.1 1178L1179.1 1178.2L1180.1 1178.4L1181.1 1178.5L1182.1 1178.7L1183.1 1178.8L1184.1 1178.8L1185.1 1178.8L1186.1 1178.9L1187.1 1178.9L1188.1 1179L1189.1 1179L1190.1 1179L1191.1 1179.1L1192.1 1179.1L1193.1 1179.1L1194.1 1179.2L1195.1 1179.2L1196.1 1179.2L1197.1 1179.2L1198.1 1179.2L1199.1 1179.3L1200.1 1179.3L1201.1 1179.3L1202.1 1179.3L1203.1 1179.3L1204.1 1179.3L1205.1 1179.3L1206.1 1179.3L1207.1 1179.3L1208.1 1179.3L1209.1 1179.3L1210.1 1179.2L1211.1 1179.2L1212.1 1179.2L1213.1 1179.2L1214.1 1179.2L1215.1 1179.2L1216.1 1179.1L1217.1 1179.1L1218.1 1178.9L1219.1 1178.4L1220.1 1177.7L1221.1 1176.9L1222.1 1176.1L1223.1 1175.3L1224.1 1174.6L1225.1 1173.8L1226.1 1172.9L1227.1 1171.9L1228.1 1170.9L1229.1 1170L1230.1 1169L1231.1 1168.2L1232.1 1167.4L1233.1 1166.8L1234.1 1166.4L1235.1 1165.9L1236.1 1165.5L1237.1 1165.2L1238.1 1164.9L1239.1 1164.7L1240.1 1164.6L1241.1 1164.6L1242.1 1164.6L1243.1 1164.6L1244.1 1164.6L1245.1 1164.7L1246.1 1164.7L1247.1 1164.7L1248.1 1164.8L1249.1 1164.8L1250.1 1164.8L1251.1 1164.9L1252.1 1164.9L1253.1 1164.9L1254.1 1164.9L1255.1 1164.9L1256.1 1164.9L1257.1 1164.9L1258.1 1164.9L1259.1 1164.9L1260.1 1164.9L1261.1 1164.9L1262.1 1164.9L1263.1 1164.9L1264.1 1164.9L1265.1 1164.9L1266.1 1165L1267.1 1165.3L1268.1 1165.9L1269.1 1166.5L1270.1 1167.2L1271.1 1167.8L1272.1 1168.6L1273.1 1169.4L1274.1 1170.3L1275.1 1171.2L1276.1 1172.2L1277.1 1173.1L1278.1 1174L1279.1 1174.8L1280.1 1175.5L1281.1 1176.2L1282.1 1176.8L1283.1 1177.5L1284.1 1178.1L1285.1 1178.7L1286.1 1179.2L1287.1 1179.6L1288.1 1179.9L1289.1 1180L1290.1 1180L1291.1 1180.1L1292.1 1180.1L1293.1 1180.1L1294.1 1180.2L1295.1 1180.2L1296.1 1180.2L1297.1 1180.3L1298.1 1180.3L1299.1 1180.3L1300.1 1180.3L1301.1 1180.3L1302.1 1180.3L1303.1 1180.3L1304.1 1180.3L1305.1 1180.2L1306.1 1180.2L1307.1 1180.2L1308.1 1180.2L1309.1 1180.2L1310.1 1180.1L1311.1 1180.1L1312.1 1180.1L1313.1 1180.1L1314.1 1180L1315.1 1180L1316.1 1180L1317.1 1180L1318.1 1179.9L1319.1 1179.9L1320.1 1179.9L1321.1 1179.9L1322.1 1179.8L1323.1 1179.8L1324.1 1179.8L1325.1 1179.8L1326.1 1179.7L1327.1 1179.7L1328.1 1179.7L1329.1 1179.7L1330.1 1179.6L1331.1 1179.6L1332.1 1179.5L1333.1 1179.5L1334.1 1179.4L1335.1 1179.4L1336.1 1179.3L1337.1 1179.2L1338.1 1179L1339.1 1178.9L1340.1 1178.7L1341.1 1178.5L1342.1 1178.3L1343.1 1178.1L1344.1 1177.7L1345.1 1177.3L1346.1 1176.9L1347.1 1176.4L1348.1 1175.8L1349.1 1175.3L1350.1 1174.9L1351.1 1174.5L1352.1 1174.2L1353.1 1173.9L1354.1 1173.7L1355.1 1173.4L1356.1 1173.2L1357.1 1173L1358.1 1172.8L1359.1 1172.7L1360.1 1172.5L1361.1 1172.5L1362.1 1172.4L1363.1 1172.5L1364.1 1172.7L1365.1 1173.1L1366.1 1173.5L1367.1 1173.9L1368.1 1174.4L1369.1 1175L1370.1 1175.7L1371.1 1176.5L1372.1 1177.2L1373.1 1178L1374.1 1178.8L1375.1 1179.5L1376.1 1180.1L1377.1 1180.8L1378.1 1181.5L1379.1 1182.1L1380.1 1182.8L1381.1 1183.3L1382.1 1183.8L1383.1 1184.1L1384.1 1184.3L1385.1 1184.3L1386.1 1184.4L1387.1 1184.4L1388.1 1184.5L1389.1 1184.5L1390.1 1184.5L1391.1 1184.6L1392.1 1184.6L1393.1 1184.6L1394.1 1184.6L1395.1 1184.6L1396.1 1184.6L1397.1 1184.6L1398.1 1184.6L1399.1 1184.6L1400.1 1184.6L1401.1 1184.6L1402.1 1184.6L1403.1 1184.6L1404.1 1184.6L1405.1 1184.6L1406.1 1184.6L1407.1 1184.6L1408.1 1184.6L1409.1 1184.5L1410.1 1184.5L1411.1 1184.5L1412.1 1184.5L1413.1 1184.5L1414.1 1184.4L1415.1 1184.2L1416.1 1183.8L1417.1 1183.2L1418.1 1182.7L1419.1 1182L1420.1 1181.4L1421.1 1180.8L1422.1 1180.2L1423.1 1179.7L1424.1 1179.2L1425.1 1178.6L1426.1 1178.1L1427.1 1177.5L1428.1 1177L1429.1 1176.5L1430.1 1176.1L1431.1 1175.8L1432.1 1175.6L1433.1 1175.6L1434.1 1175.6L1435.1 1175.5L1436.1 1175.5L1437.1 1175.5L1438.1 1175.5L1439.1 1175.5L1440.1 1175.5L1441.1 1175.5L1442.1 1175.5L1443.1 1175.4L1444.1 1175.4L1445.1 1175.4L1446.1 1175.4L1447.1 1175.4L1448.1 1175.4L1449.1 1175.4L1450.1 1175.4L1451.1 1175.4L1452.1 1175.4L1453.1 1175.4L1454.1 1175.4L1455.1 1175.4L1456.1 1175.4L1457.1 1175.4L1458.1 1175.4L1459.1 1175.4L1460.1 1175.4L1461.1 1175.4L1462.1 1175.4L1463.1 1175.4L1464.1 1175.4L1465.1 1175.4L1466.1 1175.4L1467.1 1175.4L1468.1 1175.4L1469.1 1175.4L1470.1 1175.4L1471.1 1175.4L1472.1 1175.4L1473.1 1175.4L1474.1 1175.4L1475.1 1175.4L1476.1 1175.4L1477.1 1175.4L1478.1 1175.4L1479.1 1175.4L1480.1 1175.4L1481.1 1175.4L1482.1 1175.4L1483.1 1175.4L1484.1 1175.4L1485.1 1175.4L1486.1 1175.4L1487.1 1175.4L1488.1 1175.4L1489.1 1175.4L1490.1 1175.4L1491.1 1175.4L1492.1 1175.4L1493.1 1175.4L1494.1 1175.4L1495.1 1175.4L1496.1 1175.4L1497.1 1175.4L1498.1 1175.4L1499.1 1175.4L1500.1 1175.4L1501.1 1175.4L1502.1 1175.4L1503.1 1175.4L1504.1 1175.4L1505.1 1175.4L1506.1 1175.4L1507.1 1175.4L1508.1 1175.4L1509 1175.4" fill="none" stroke="#5fa04a" stroke-width="1" stroke-linejoin="round"/>
</svg>
<div class="tx" style="right:2447.20px;top:1034px;font-size:12px;line-height:12px;"><span style="letter-spacing:0.246px;">4 ms</span></div>
<div class="tx" style="right:2447.20px;top:1084px;font-size:12px;line-height:12px;"><span style="letter-spacing:0.246px;">3 ms</span></div>
<div class="tx" style="right:2447.20px;top:1135px;font-size:12px;line-height:12px;"><span style="letter-spacing:0.246px;">2 ms</span></div>
<div class="tx" style="right:2447.20px;top:1185px;font-size:12px;line-height:12px;"><span style="letter-spacing:0.246px;">1 ms</span></div>
</section>
<section aria-label="Consumed Response Size by Service">
<div class="panel" style="left:1558px;top:958px;width:925px;height:296px"></div>
<h2 class="ttl" style="left:2020.50px;transform:translateX(-50%);top:968px;font-size:14px;line-height:14px;"><span style="letter-spacing:-0.122px;">Consumed Response Size by Service</span></h2>
<svg class="cv" style="left:1559px;top:991px" width="923" height="205" viewBox="1559 991 923 205">
<defs><linearGradient id="pinkfill" x1="0" y1="0" x2="0" y2="1"><stop offset="0" stop-color="#e02f44" stop-opacity="0.085"/><stop offset="1" stop-color="#d9286e" stop-opacity="0.115"/></linearGradient></defs>
<g class="grid"><line x1="1612" x2="2450" y1="1029.5" y2="1029.5"/><line x1="1612" x2="2450" y1="1063.5" y2="1063.5"/><line x1="1612" x2="2450" y1="1096.5" y2="1096.5"/><line x1="1612" x2="2450" y1="1129.5" y2="1129.5"/><line x1="1612" x2="2450" y1="1162.5" y2="1162.5"/><line x1="1612" x2="2450" y1="1195.5" y2="1195.5"/></g>
<g class="grid v"><line y1="1016" y2="1196" x1="1751.5" x2="1751.5"/><line y1="1016" y2="1196" x1="2028.5" x2="2028.5"/><line y1="1016" y2="1196" x1="2306.5" x2="2306.5"/></g>
<rect x="1616.5" y="1034.8" width="828.8" height="143.1" fill="url(#pinkfill)"/>
<rect x="1616.5" y="1177.9" width="828.8" height="22.1" fill="#d9286e" fill-opacity="0.115"/>
<path d="M1616.5 1177.9L2445.3 1177.9L2445.3 1200L1616.5 1200Z" fill="#5a9a4a" fill-opacity="0.26"/>
<path d="M1616.5 1177.9L1836.7 1177.9L1841 1176.6L1846.5 1174.7L1863 1174.7L1868 1176.4L1872.7 1177.9L1973.6 1177.9L1979 1172L1984.9 1166.6L2003.7 1166.6L2009 1172L2013.9 1177.9L2445.3 1177.9L2445.3 1177.9L1616.5 1177.9Z" fill="#56a64b" fill-opacity="0.1"/>
<path d="M1616.5 1034.8L2445.3 1034.8" fill="none" stroke="#e0506a" stroke-width="1.15"/>
<path d="M1616.5 1177.9L2445.3 1177.9" fill="none" stroke="#5a9e4e" stroke-width="1.3"/>
<path d="M1616.5 1177.9L1836.7 1177.9L1841 1176.6L1846.5 1174.7L1863 1174.7L1868 1176.4L1872.7 1177.9L1973.6 1177.9L1979 1172L1984.9 1166.6L2003.7 1166.6L2009 1172L2013.9 1177.9L2445.3 1177.9" fill="none" stroke="#56a64b" stroke-width="1"/>
</svg>
<div class="tx" style="right:878.80px;top:1022px;font-size:12px;line-height:12px;"><span style="letter-spacing:0.071px;">1.50 kB</span></div>
<div class="tx" style="right:878.80px;top:1056px;font-size:12px;line-height:12px;"><span style="letter-spacing:0.071px;">1.25 kB</span></div>
<div class="tx" style="right:878.80px;top:1089px;font-size:12px;line-height:12px;"><span style="letter-spacing:-0.104px;">1 kB</span></div>
<div class="tx" style="right:878.80px;top:1122px;font-size:12px;line-height:12px;"><span style="letter-spacing:0.048px;">750 B</span></div>
<div class="tx" style="right:878.80px;top:1155px;font-size:12px;line-height:12px;"><span style="letter-spacing:0.048px;">500 B</span></div>
<div class="tx" style="right:878.80px;top:1188px;font-size:12px;line-height:12px;"><span style="letter-spacing:0.048px;">250 B</span></div>
</section>
</div>
</body></html>
